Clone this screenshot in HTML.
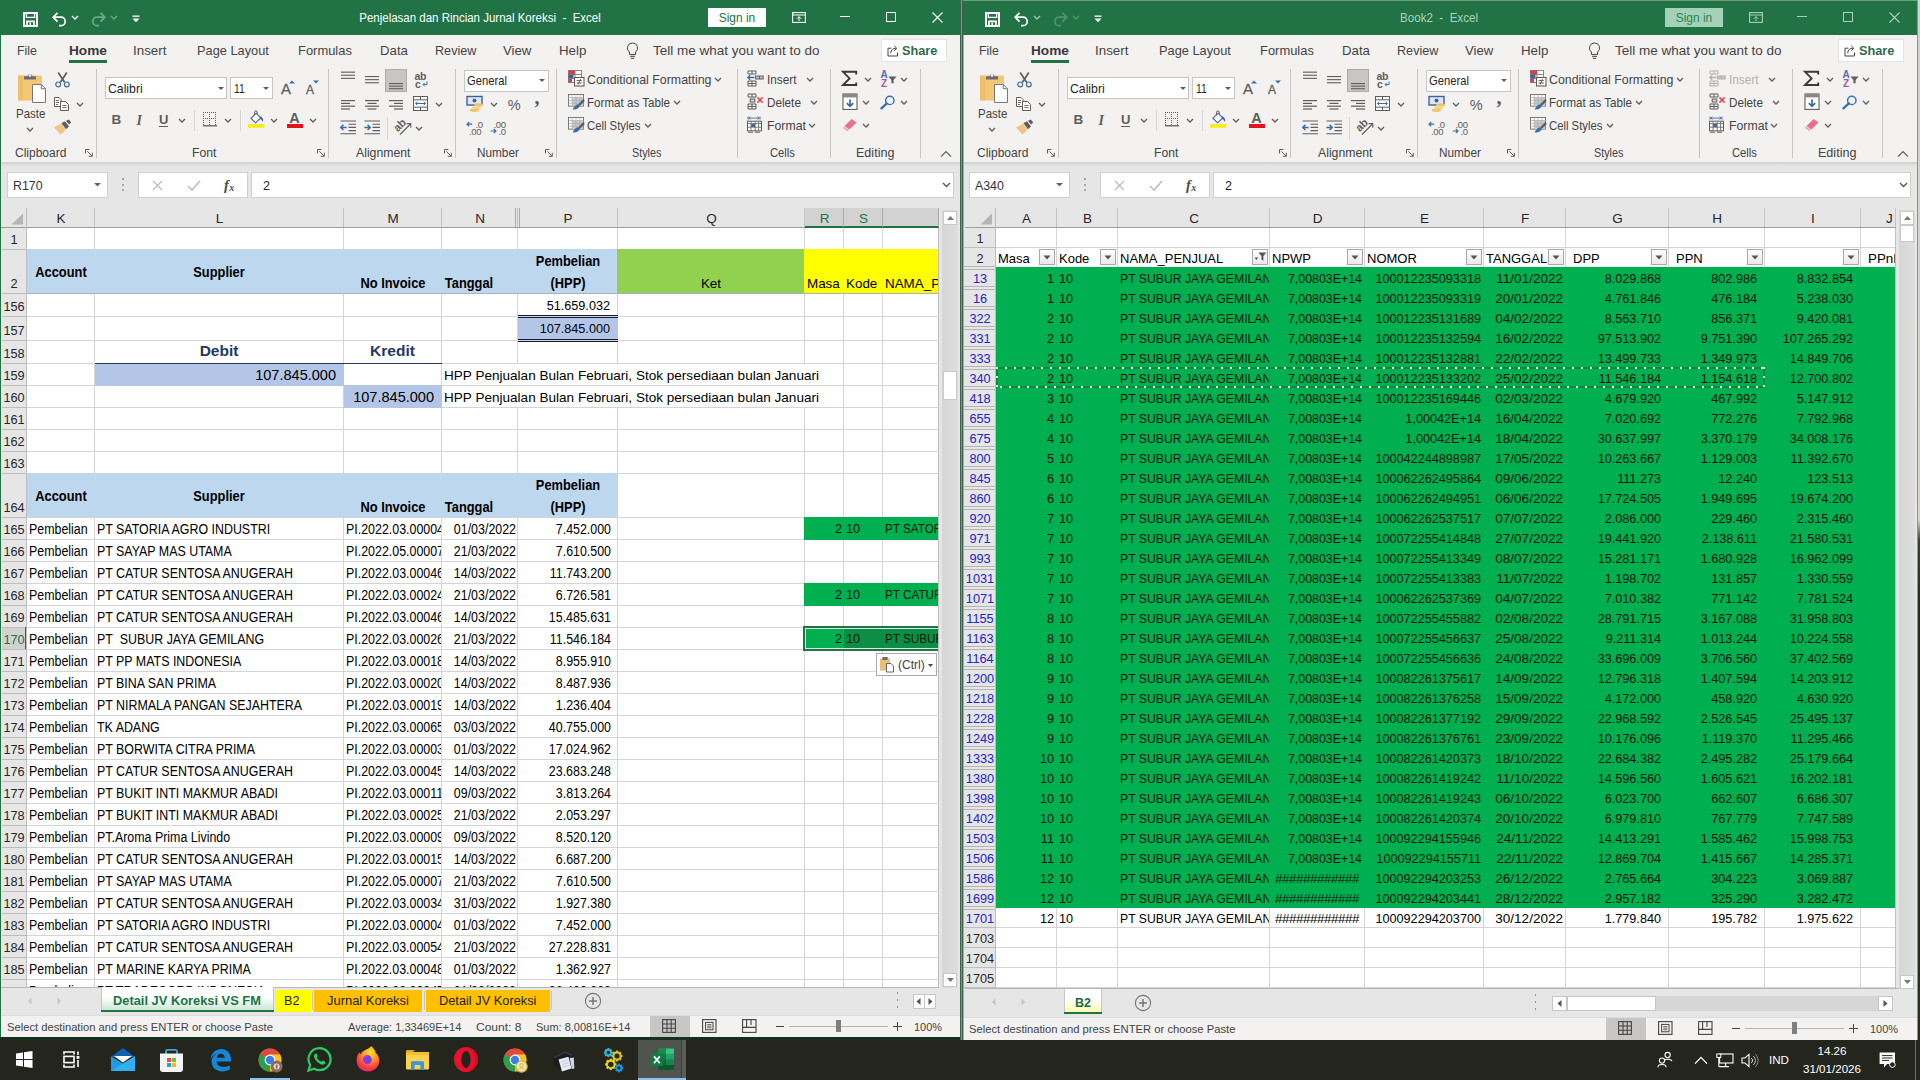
<!DOCTYPE html>
<html><head><meta charset="utf-8"><title>Excel</title><style>html,body{margin:0;padding:0;}
body{width:1920px;height:1080px;overflow:hidden;position:relative;background:#24261e;font-family:"Liberation Sans",sans-serif;}
div,svg{position:absolute;}
svg{overflow:visible;}</style></head><body>
<div style="left:0px;top:0px;width:1920px;height:1080px;background:#24261e;"></div>
<div style="left:0px;top:0px;width:960px;height:35px;background:#217346;"></div>
<svg style="left:23px;top:12px;" width="15" height="15" viewBox="0 0 15 15"><path d="M1 1 H14 V14 H1 Z" fill="none" stroke="#ffffff" stroke-width="2"/><rect x="3.4" y="1" width="8.2" height="4.4" fill="none" stroke="#ffffff" stroke-width="1.3"/><path d="M4 14 V9.3 H11 V14" fill="none" stroke="#ffffff" stroke-width="1.7"/><rect x="6.4" y="10.6" width="1.6" height="3" fill="#ffffff"/></svg>
<svg style="left:51px;top:11px;" width="17" height="16" viewBox="0 0 17 16"><path d="M6.5 1.8 L2.2 6.2 L6.5 10.6 M2.6 6.2 H10 A4.2 4.2 0 0 1 10 14.6 H8" fill="none" stroke="#ffffff" stroke-width="1.7"/></svg>
<svg style="left:71px;top:15px;" width="8" height="5" viewBox="0 0 8 5"><path d="M1 1 L4.0 4 L7 1" fill="none" stroke="#ffffff" stroke-width="1.3"/></svg>
<svg style="left:90px;top:11px;" width="17" height="16" viewBox="0 0 17 16"><path d="M10.5 1.8 L14.8 6.2 L10.5 10.6 M14.4 6.2 H7 A4.2 4.2 0 0 0 7 14.6 H9" fill="none" stroke="#6fa98a" stroke-width="1.7"/></svg>
<svg style="left:110px;top:15px;" width="8" height="5" viewBox="0 0 8 5"><path d="M1 1 L4.0 4 L7 1" fill="none" stroke="#6fa98a" stroke-width="1.3"/></svg>
<svg style="left:131px;top:15px;" width="10" height="8" viewBox="0 0 10 8"><rect x="1.5" y="0.5" width="7" height="1.3" fill="#ffffff"/><path d="M1.5 3.6 H8.5 L5 7.2 Z" fill="#ffffff"/></svg>
<div style="top:8.5px;height:19px;line-height:19px;font-size:12.6px;color:#ffffff;white-space:nowrap;left:279.5px;width:400px;text-align:center;transform:scaleX(0.9127);transform-origin:50% 50%;">Penjelasan dan Rincian Jurnal Koreksi&nbsp; -&nbsp; Excel</div>
<div style="left:708px;top:8px;width:58px;height:19px;background:#ffffff;"></div>
<div style="top:8.5px;height:19px;line-height:19px;font-size:12.6px;color:#217346;white-space:nowrap;left:707.5px;width:58px;text-align:center;transform:scaleX(0.9477);transform-origin:50% 50%;">Sign in</div>
<svg style="left:792px;top:12px;" width="14" height="11" viewBox="0 0 14 11"><rect x="0.6" y="0.6" width="12.8" height="9.8" fill="none" stroke="#ffffff" stroke-width="1.1"/><path d="M0.6 3 H13.4" stroke="#ffffff" stroke-width="1"/><path d="M7 9 V4.8 M4.8 6.8 L7 4.6 L9.2 6.8" fill="none" stroke="#ffffff" stroke-width="1"/></svg>
<div style="left:840px;top:16px;width:10px;height:1px;background:#ffffff;"></div>
<div style="left:886px;top:12px;width:10px;height:10px;border:1px solid #ffffff;box-sizing:border-box;"></div>
<svg style="left:932px;top:12px;" width="11" height="11" viewBox="0 0 11 11"><path d="M0.5 0.5 L10.5 10.5 M10.5 0.5 L0.5 10.5" stroke="#ffffff" stroke-width="1.1"/></svg>
<div style="left:0px;top:35px;width:960px;height:30px;background:#f3f2f1;"></div>
<div style="top:40.8px;height:20px;line-height:20px;font-size:13.3px;color:#444444;white-space:nowrap;left:17.3px;transform:scaleX(0.9283);transform-origin:0 50%;">File</div>
<div style="top:40.8px;height:20px;line-height:20px;font-size:13.3px;color:#3a3a3a;white-space:nowrap;font-weight:bold;left:68.8px;transform:scaleX(1.0256);transform-origin:0 50%;">Home</div>
<div style="left:69px;top:60px;width:38px;height:3px;background:#217346;"></div>
<div style="top:40.8px;height:20px;line-height:20px;font-size:13.3px;color:#444444;white-space:nowrap;left:133.3px;transform:scaleX(1.004);transform-origin:0 50%;">Insert</div>
<div style="top:40.8px;height:20px;line-height:20px;font-size:13.3px;color:#444444;white-space:nowrap;left:196.8px;transform:scaleX(0.9629);transform-origin:0 50%;">Page Layout</div>
<div style="top:40.8px;height:20px;line-height:20px;font-size:13.3px;color:#444444;white-space:nowrap;left:297.8px;transform:scaleX(0.9725);transform-origin:0 50%;">Formulas</div>
<div style="top:40.8px;height:20px;line-height:20px;font-size:13.3px;color:#444444;white-space:nowrap;left:379.8px;transform:scaleX(0.9931);transform-origin:0 50%;">Data</div>
<div style="top:40.8px;height:20px;line-height:20px;font-size:13.3px;color:#444444;white-space:nowrap;left:435.3px;transform:scaleX(0.9493);transform-origin:0 50%;">Review</div>
<div style="top:40.8px;height:20px;line-height:20px;font-size:13.3px;color:#444444;white-space:nowrap;left:503.3px;transform:scaleX(0.9932);transform-origin:0 50%;">View</div>
<div style="top:40.8px;height:20px;line-height:20px;font-size:13.3px;color:#444444;white-space:nowrap;left:558.8px;transform:scaleX(1.0015);transform-origin:0 50%;">Help</div>
<svg style="left:626px;top:42px;" width="13" height="18" viewBox="0 0 13 18"><path d="M6.5 1 A5 5 0 0 1 9.6 10 V12.4 H3.4 V10 A5 5 0 0 1 6.5 1 Z" fill="none" stroke="#444" stroke-width="1"/><path d="M4 14.3 H9 M4.8 16.3 H8.2" stroke="#444" stroke-width="1"/></svg>
<div style="top:40.8px;height:20px;line-height:20px;font-size:13.3px;color:#444444;white-space:nowrap;left:653.3px;transform:scaleX(1.0141);transform-origin:0 50%;">Tell me what you want to do</div>
<div style="left:881px;top:39px;width:66px;height:23px;background:#ffffff;border:1px solid #e6e4e2;box-sizing:border-box;"></div>
<svg style="left:887px;top:44px;" width="13" height="13" viewBox="0 0 13 13"><path d="M4.5 4.2 H1 V12 H10.5 V8.5" fill="none" stroke="#444" stroke-width="1"/><path d="M3.6 9.2 C4 5.8 6.2 4.2 9 4.2 M7.2 1.8 L9.8 4.3 L7.2 6.8" fill="none" stroke="#444" stroke-width="1"/></svg>
<div style="top:40.8px;height:20px;line-height:20px;font-size:13.3px;color:#2f6b4c;white-space:nowrap;font-weight:bold;left:902.3px;transform:scaleX(0.9576);transform-origin:0 50%;">Share</div>
<div style="left:0px;top:65px;width:960px;height:97px;background:#f3f2f1;"></div>
<svg style="left:16px;top:72px;" width="32" height="32" viewBox="0 0 32 32"><rect x="2" y="3.5" width="24" height="25" rx="1" fill="#f2c877"/><rect x="2" y="3.5" width="5" height="25" fill="#eab95c" opacity=".55"/><path d="M8 7.6 V4.3 H11.4 A2.7 2.7 0 0 1 16.6 4.3 H20 V7.6 Z" fill="#6d6b73"/><circle cx="14" cy="3.6" r="1.3" fill="#f3f2f1"/><path d="M16.5 12.5 H25.3 L29.5 16.7 V30.5 H16.5 Z" fill="#ffffff" stroke="#7a7876" stroke-width="1"/><path d="M25.3 12.5 V16.7 H29.5" fill="none" stroke="#7a7876" stroke-width="1"/></svg>
<div style="top:104.5px;height:19px;line-height:19px;font-size:12.6px;color:#444444;white-space:nowrap;left:15.8px;transform:scaleX(0.9125);transform-origin:0 50%;">Paste</div>
<svg style="left:26px;top:127px;" width="8" height="5" viewBox="0 0 8 5"><path d="M1 1 L4.0 4 L7 1" fill="none" stroke="#605e5c" stroke-width="1.3"/></svg>
<svg style="left:54px;top:71px;" width="17" height="18" viewBox="0 0 17 18"><path d="M4.2 1.5 L10.6 11.2 M12.8 1.5 L6.4 11.2" stroke="#605e5c" stroke-width="1.7" fill="none"/><circle cx="4.2" cy="13.4" r="2.4" fill="none" stroke="#3a6ea5" stroke-width="1.2"/><circle cx="12.8" cy="13.4" r="2.4" fill="none" stroke="#3a6ea5" stroke-width="1.2"/></svg>
<svg style="left:53px;top:96px;" width="18" height="16" viewBox="0 0 18 16"><path d="M1.5 1.5 H6 L8 3.5 V10.5 H1.5 Z" fill="#fff" stroke="#605e5c" stroke-width="1"/><path d="M3 4.5 H6 M3 6.5 H6 M3 8.5 H5" stroke="#605e5c" stroke-width=".9"/><path d="M7.5 5.5 H12.5 L15.5 8.5 V14.5 H7.5 Z" fill="#fff" stroke="#605e5c" stroke-width="1"/><path d="M9.3 9.5 H13.6 M9.3 11.6 H13.6" stroke="#605e5c" stroke-width=".9"/></svg>
<svg style="left:76px;top:102px;" width="8" height="5" viewBox="0 0 8 5"><path d="M1 1 L4.0 4 L7 1" fill="none" stroke="#605e5c" stroke-width="1.3"/></svg>
<svg style="left:53px;top:119px;" width="20" height="18" viewBox="0 0 20 18"><path d="M1 8.4 L8 4.8 L12.6 10.8 L7.6 15.6 C5.5 13 3.6 10.6 1 8.4 Z" fill="#efc581"/><path d="M8.4 4.2 L12 2.3 L16 7.6 L13 10.2 Z" fill="#605e5c"/><path d="M13 1.8 L15.8 0.4 L18.2 3.6 L16 5.6 Z" fill="#605e5c"/></svg>
<div style="top:144.0px;height:19px;line-height:19px;font-size:12.3px;color:#444444;white-space:nowrap;left:14.8px;transform:scaleX(0.9764);transform-origin:0 50%;">Clipboard</div>
<svg style="left:85px;top:149px;" width="8" height="8" viewBox="0 0 8 8"><path d="M0.5 4.4 V0.5 H4.4" fill="none" stroke="#605e5c" stroke-width="1"/><path d="M2.4 2.4 L7.2 7.2 M7.3 3.8 V7.3 H3.8" fill="none" stroke="#605e5c" stroke-width="1"/></svg>
<div style="left:96px;top:69px;width:1px;height:89px;background:#c8c6c4;"></div>
<div style="left:105px;top:77px;width:122px;height:22px;background:#ffffff;border:1px solid #c8c6c4;box-sizing:border-box;"></div>
<div style="top:79.5px;height:19px;line-height:19px;font-size:12.6px;color:#262626;white-space:nowrap;left:107.8px;transform:scaleX(0.9719);transform-origin:0 50%;">Calibri</div>
<svg style="left:218px;top:87px;" width="6" height="3" viewBox="0 0 6 3"><path d="M0 0 H6 L3.0 3 Z" fill="#605e5c"/></svg>
<div style="left:230px;top:77px;width:43px;height:22px;background:#ffffff;border:1px solid #c8c6c4;box-sizing:border-box;"></div>
<div style="top:79.5px;height:19px;line-height:19px;font-size:12.6px;color:#262626;white-space:nowrap;left:233.8px;transform:scaleX(0.8182);transform-origin:0 50%;">11</div>
<svg style="left:263px;top:87px;" width="6" height="3" viewBox="0 0 6 3"><path d="M0 0 H6 L3.0 3 Z" fill="#605e5c"/></svg>
<div style="top:77.0px;height:23px;line-height:23px;font-size:15px;color:#605e5c;white-space:nowrap;left:281px;-webkit-text-stroke:.3px #605e5c;">A</div>
<svg style="left:289px;top:80px;" width="6" height="4" viewBox="0 0 6 4"><path d="M0 3.5 L3 0.5 L6 3.5 Z" fill="#3a6ea5"/></svg>
<div style="top:81.0px;height:18px;line-height:18px;font-size:12px;color:#605e5c;white-space:nowrap;left:306px;-webkit-text-stroke:.3px #605e5c;">A</div>
<svg style="left:313px;top:80px;" width="6" height="4" viewBox="0 0 6 4"><path d="M0 0.5 L3 3.5 L6 0.5 Z" fill="#3a6ea5"/></svg>
<div style="top:110.0px;height:20px;line-height:20px;font-size:13.5px;color:#605e5c;white-space:nowrap;font-weight:bold;left:111.5px;">B</div>
<div style="top:109.5px;height:21px;line-height:21px;font-size:14px;color:#605e5c;white-space:nowrap;font-weight:bold;left:136.5px;font-family:'Liberation Serif',serif;font-style:italic;">I</div>
<div style="top:109.5px;height:20px;line-height:20px;font-size:13px;color:#605e5c;white-space:nowrap;font-weight:bold;left:159px;">U</div>
<div style="left:159px;top:125.5px;width:9px;height:1px;background:#605e5c;"></div>
<svg style="left:177.5px;top:117.5px;" width="8" height="5" viewBox="0 0 8 5"><path d="M1 1 L4.0 4 L7 1" fill="none" stroke="#605e5c" stroke-width="1.3"/></svg>
<div style="left:194px;top:110px;width:1px;height:21px;background:#d8d6d4;"></div>
<svg style="left:203px;top:112px;" width="14" height="15" viewBox="0 0 14 15"><rect x="0" y="0" width="1" height="1" fill="#605e5c"/><rect x="0" y="6" width="1" height="1" fill="#605e5c"/><rect x="0" y="6" width="1" height="1" fill="#605e5c"/><rect x="0" y="0" width="1" height="1" fill="#605e5c"/><rect x="6" y="0" width="1" height="1" fill="#605e5c"/><rect x="12" y="0" width="1" height="1" fill="#605e5c"/><rect x="2" y="0" width="1" height="1" fill="#605e5c"/><rect x="2" y="6" width="1" height="1" fill="#605e5c"/><rect x="2" y="6" width="1" height="1" fill="#605e5c"/><rect x="0" y="2" width="1" height="1" fill="#605e5c"/><rect x="6" y="2" width="1" height="1" fill="#605e5c"/><rect x="12" y="2" width="1" height="1" fill="#605e5c"/><rect x="4" y="0" width="1" height="1" fill="#605e5c"/><rect x="4" y="6" width="1" height="1" fill="#605e5c"/><rect x="4" y="6" width="1" height="1" fill="#605e5c"/><rect x="0" y="4" width="1" height="1" fill="#605e5c"/><rect x="6" y="4" width="1" height="1" fill="#605e5c"/><rect x="12" y="4" width="1" height="1" fill="#605e5c"/><rect x="6" y="0" width="1" height="1" fill="#605e5c"/><rect x="6" y="6" width="1" height="1" fill="#605e5c"/><rect x="6" y="6" width="1" height="1" fill="#605e5c"/><rect x="0" y="6" width="1" height="1" fill="#605e5c"/><rect x="6" y="6" width="1" height="1" fill="#605e5c"/><rect x="12" y="6" width="1" height="1" fill="#605e5c"/><rect x="8" y="0" width="1" height="1" fill="#605e5c"/><rect x="8" y="6" width="1" height="1" fill="#605e5c"/><rect x="8" y="6" width="1" height="1" fill="#605e5c"/><rect x="0" y="8" width="1" height="1" fill="#605e5c"/><rect x="6" y="8" width="1" height="1" fill="#605e5c"/><rect x="12" y="8" width="1" height="1" fill="#605e5c"/><rect x="10" y="0" width="1" height="1" fill="#605e5c"/><rect x="10" y="6" width="1" height="1" fill="#605e5c"/><rect x="10" y="6" width="1" height="1" fill="#605e5c"/><rect x="0" y="10" width="1" height="1" fill="#605e5c"/><rect x="6" y="10" width="1" height="1" fill="#605e5c"/><rect x="12" y="10" width="1" height="1" fill="#605e5c"/><rect x="12" y="0" width="1" height="1" fill="#605e5c"/><rect x="12" y="6" width="1" height="1" fill="#605e5c"/><rect x="12" y="6" width="1" height="1" fill="#605e5c"/><rect x="0" y="12" width="1" height="1" fill="#605e5c"/><rect x="6" y="12" width="1" height="1" fill="#605e5c"/><rect x="12" y="12" width="1" height="1" fill="#605e5c"/><path d="M0 13.8 H14" stroke="#605e5c" stroke-width="1.3"/></svg>
<svg style="left:223.5px;top:117.5px;" width="8" height="5" viewBox="0 0 8 5"><path d="M1 1 L4.0 4 L7 1" fill="none" stroke="#605e5c" stroke-width="1.3"/></svg>
<div style="left:240px;top:110px;width:1px;height:21px;background:#d8d6d4;"></div>
<svg style="left:247px;top:111px;" width="18" height="18" viewBox="0 0 18 18"><path d="M4 7.2 L9.2 2.2 L13.8 7 L8.6 11.8 Z" fill="#fff" stroke="#4b5aa3" stroke-width="1.1"/><path d="M7.6 4.2 V1.2 A1.3 1.3 0 0 1 10.2 1.2 V3" fill="none" stroke="#605e5c" stroke-width="1"/><path d="M13.2 5.2 C15.8 6.2 16.6 8.2 16 10.6 C15 9.6 14.2 8.2 13 7.4 Z" fill="#4b5aa3"/><rect x="1" y="13" width="16.4" height="3.8" fill="#f5ee1b"/></svg>
<svg style="left:269.5px;top:117.5px;" width="8" height="5" viewBox="0 0 8 5"><path d="M1 1 L4.0 4 L7 1" fill="none" stroke="#605e5c" stroke-width="1.3"/></svg>
<div style="top:107.0px;height:22px;line-height:22px;font-size:14.5px;color:#605e5c;white-space:nowrap;font-weight:bold;left:284.5px;width:20px;text-align:center;">A</div>
<div style="left:287px;top:124px;width:16px;height:4px;background:#e8121d;"></div>
<svg style="left:308.5px;top:117.5px;" width="8" height="5" viewBox="0 0 8 5"><path d="M1 1 L4.0 4 L7 1" fill="none" stroke="#605e5c" stroke-width="1.3"/></svg>
<div style="top:144.0px;height:19px;line-height:19px;font-size:12.3px;color:#444444;white-space:nowrap;left:191.8px;transform:scaleX(0.9915);transform-origin:0 50%;">Font</div>
<svg style="left:317px;top:149px;" width="8" height="8" viewBox="0 0 8 8"><path d="M0.5 4.4 V0.5 H4.4" fill="none" stroke="#605e5c" stroke-width="1"/><path d="M2.4 2.4 L7.2 7.2 M7.3 3.8 V7.3 H3.8" fill="none" stroke="#605e5c" stroke-width="1"/></svg>
<div style="left:328px;top:69px;width:1px;height:89px;background:#c8c6c4;"></div>
<svg style="left:341px;top:71px;" width="18" height="16" viewBox="0 0 18 16"><rect x="0" y="0.6" width="14" height="1.1" fill="#605e5c"/><rect x="0" y="3.7" width="14" height="1.1" fill="#605e5c"/><rect x="0" y="6.8" width="14" height="1.1" fill="#605e5c"/></svg>
<svg style="left:365px;top:71px;" width="18" height="16" viewBox="0 0 18 16"><rect x="0" y="5" width="14" height="1.1" fill="#605e5c"/><rect x="0" y="8.1" width="14" height="1.1" fill="#605e5c"/><rect x="0" y="11.2" width="14" height="1.1" fill="#605e5c"/></svg>
<div style="left:385px;top:69px;width:22px;height:23px;background:#c8c6c4;border:1px solid #aeacaa;box-sizing:border-box;"></div>
<svg style="left:389px;top:71px;" width="18" height="16" viewBox="0 0 18 16"><rect x="0" y="12" width="14" height="1.1" fill="#605e5c"/><rect x="0" y="14.6" width="14" height="1.1" fill="#605e5c"/><rect x="0" y="17.2" width="14" height="1.1" fill="#605e5c"/></svg>
<div style="top:67.5px;height:16px;line-height:16px;font-size:10.5px;color:#605e5c;white-space:nowrap;font-weight:bold;left:414.5px;letter-spacing:-.3px;">ab</div>
<div style="top:75.5px;height:16px;line-height:16px;font-size:10.5px;color:#605e5c;white-space:nowrap;font-weight:bold;left:415px;">c</div>
<svg style="left:422px;top:81px;" width="6" height="6" viewBox="0 0 6 6"><path d="M5 0.5 V3.6 H1.2 M2.8 1.8 L1 3.6 L2.8 5.4" fill="none" stroke="#3a6ea5" stroke-width="1"/></svg>
<svg style="left:341px;top:98.6px;" width="18" height="16" viewBox="0 0 18 16"><rect x="0" y="1" width="14" height="1.2" fill="#605e5c"/><rect x="0" y="3.8" width="9" height="1.2" fill="#605e5c"/><rect x="0" y="6.6" width="14" height="1.2" fill="#605e5c"/><rect x="0" y="9.4" width="9" height="1.2" fill="#605e5c"/></svg>
<svg style="left:365px;top:98.6px;" width="18" height="16" viewBox="0 0 18 16"><rect x="0" y="1" width="14" height="1.2" fill="#605e5c"/><rect x="2.5" y="3.8" width="9" height="1.2" fill="#605e5c"/><rect x="0" y="6.6" width="14" height="1.2" fill="#605e5c"/><rect x="2.5" y="9.4" width="9" height="1.2" fill="#605e5c"/></svg>
<svg style="left:389px;top:98.6px;" width="18" height="16" viewBox="0 0 18 16"><rect x="0" y="1" width="14" height="1.2" fill="#605e5c"/><rect x="5" y="3.8" width="9" height="1.2" fill="#605e5c"/><rect x="0" y="6.6" width="14" height="1.2" fill="#605e5c"/><rect x="5" y="9.4" width="9" height="1.2" fill="#605e5c"/></svg>
<svg style="left:413px;top:96px;" width="16" height="16" viewBox="0 0 16 16"><rect x="0.5" y="0.5" width="14" height="14" fill="#fff" stroke="#605e5c" stroke-width="1"/><path d="M0.5 3.8 H14.5 M0.5 11.2 H14.5 M7.5 0.5 V3.8 M7.5 11.2 V14.5" stroke="#605e5c" stroke-width="1"/><path d="M2.6 7.5 H12.4 M4.4 5.7 L2.6 7.5 L4.4 9.3 M10.6 5.7 L12.4 7.5 L10.6 9.3" fill="none" stroke="#3a6ea5" stroke-width="1"/></svg>
<svg style="left:434.5px;top:102px;" width="8" height="5" viewBox="0 0 8 5"><path d="M1 1 L4.0 4 L7 1" fill="none" stroke="#605e5c" stroke-width="1.3"/></svg>
<svg style="left:340px;top:120px;" width="17" height="15" viewBox="0 0 17 15"><path d="M0.5 1 H16 M8.5 4.2 H16 M8.5 7.4 H16 M8.5 10.6 H16 M0.5 13.8 H16" stroke="#605e5c" stroke-width="1.1"/><path d="M0.8 7.4 H6.6 M3.4 4.8 L0.8 7.4 L3.4 10" fill="none" stroke="#3a6ea5" stroke-width="1.5"/></svg>
<svg style="left:364px;top:120px;" width="17" height="15" viewBox="0 0 17 15"><path d="M0.5 1 H16 M8.5 4.2 H16 M8.5 7.4 H16 M8.5 10.6 H16 M0.5 13.8 H16" stroke="#605e5c" stroke-width="1.1"/><path d="M0.4 7.4 H6.2 M3.6 4.8 L6.2 7.4 L3.6 10" fill="none" stroke="#3a6ea5" stroke-width="1.5"/></svg>
<div style="left:387px;top:117px;width:1px;height:23px;background:#d8d6d4;"></div>
<div style="left:393px;top:119px;font-size:11px;font-weight:bold;color:#605e5c;transform:rotate(-45deg);transform-origin:50% 50%;line-height:12px;">ab</div>
<svg style="left:399px;top:121px;" width="14" height="15" viewBox="0 0 14 15"><path d="M1 13.5 L11.5 3 M7.6 2.6 L11.8 2.6 L11.8 6.8" fill="none" stroke="#605e5c" stroke-width="1.1"/></svg>
<svg style="left:414.5px;top:126px;" width="8" height="5" viewBox="0 0 8 5"><path d="M1 1 L4.0 4 L7 1" fill="none" stroke="#605e5c" stroke-width="1.3"/></svg>
<div style="top:144.0px;height:19px;line-height:19px;font-size:12.3px;color:#444444;white-space:nowrap;left:356.3px;transform:scaleX(0.9947);transform-origin:0 50%;">Alignment</div>
<svg style="left:444px;top:149px;" width="8" height="8" viewBox="0 0 8 8"><path d="M0.5 4.4 V0.5 H4.4" fill="none" stroke="#605e5c" stroke-width="1"/><path d="M2.4 2.4 L7.2 7.2 M7.3 3.8 V7.3 H3.8" fill="none" stroke="#605e5c" stroke-width="1"/></svg>
<div style="left:455px;top:69px;width:1px;height:89px;background:#c8c6c4;"></div>
<div style="left:464px;top:70px;width:85px;height:22px;background:#ffffff;border:1px solid #c8c6c4;box-sizing:border-box;"></div>
<div style="top:72.0px;height:19px;line-height:19px;font-size:12.6px;color:#262626;white-space:nowrap;left:467.3px;transform:scaleX(0.8904);transform-origin:0 50%;">General</div>
<svg style="left:539px;top:79px;" width="6" height="3" viewBox="0 0 6 3"><path d="M0 0 H6 L3.0 3 Z" fill="#605e5c"/></svg>
<svg style="left:466px;top:95px;" width="20" height="18" viewBox="0 0 20 18"><rect x="1" y="1.5" width="15" height="8.5" fill="#dfe9f5" stroke="#41619b" stroke-width="1.4"/><circle cx="8.5" cy="5.6" r="2" fill="#41619b"/><ellipse cx="12.6" cy="10" rx="4.6" ry="1.7" fill="#f0c470"/><ellipse cx="10.6" cy="12.6" rx="4.6" ry="1.7" fill="#f6d48a"/><ellipse cx="8.4" cy="15.2" rx="4.8" ry="1.7" fill="#f0c470"/></svg>
<svg style="left:489.5px;top:102px;" width="8" height="5" viewBox="0 0 8 5"><path d="M1 1 L4.0 4 L7 1" fill="none" stroke="#605e5c" stroke-width="1.3"/></svg>
<div style="top:93.5px;height:22px;line-height:22px;font-size:14.5px;color:#605e5c;white-space:nowrap;left:499.29999999999995px;width:30px;text-align:center;">%</div>
<div style="top:81.5px;height:30px;line-height:30px;font-size:20px;color:#605e5c;white-space:nowrap;font-weight:bold;left:534.5px;font-family:'Liberation Serif',serif;">,</div>
<svg style="left:466px;top:120px;" width="17" height="16" viewBox="0 0 17 16"><path d="M1 4.2 H6.2 M3.2 2 L1 4.2 L3.2 6.4" fill="none" stroke="#3a6ea5" stroke-width="1.2"/></svg>
<div style="top:116.5px;height:15px;line-height:15px;font-size:9.5px;color:#605e5c;white-space:nowrap;left:475.5px;letter-spacing:-.3px;">.0</div>
<div style="top:124.0px;height:15px;line-height:15px;font-size:9.5px;color:#605e5c;white-space:nowrap;left:469px;letter-spacing:-.3px;">.00</div>
<div style="top:116.5px;height:15px;line-height:15px;font-size:9.5px;color:#605e5c;white-space:nowrap;left:493.5px;letter-spacing:-.3px;">.00</div>
<svg style="left:490px;top:127px;" width="8" height="8" viewBox="0 0 8 8"><path d="M0.6 4 H6 M3.8 1.8 L6 4 L3.8 6.2" fill="none" stroke="#3a6ea5" stroke-width="1.2"/></svg>
<div style="top:124.0px;height:15px;line-height:15px;font-size:9.5px;color:#605e5c;white-space:nowrap;left:498.5px;letter-spacing:-.3px;">.0</div>
<div style="top:144.0px;height:19px;line-height:19px;font-size:12.3px;color:#444444;white-space:nowrap;left:476.8px;transform:scaleX(0.9577);transform-origin:0 50%;">Number</div>
<svg style="left:545px;top:149px;" width="8" height="8" viewBox="0 0 8 8"><path d="M0.5 4.4 V0.5 H4.4" fill="none" stroke="#605e5c" stroke-width="1"/><path d="M2.4 2.4 L7.2 7.2 M7.3 3.8 V7.3 H3.8" fill="none" stroke="#605e5c" stroke-width="1"/></svg>
<div style="left:556px;top:69px;width:1px;height:89px;background:#c8c6c4;"></div>
<svg style="left:568px;top:70px;" width="17" height="17" viewBox="0 0 17 17"><rect x="0.5" y="0.5" width="13" height="12" fill="#fff" stroke="#8a8886" stroke-width="1"/><path d="M0.5 4.5 H13.5 M0.5 8.5 H13.5 M7 0.5 V12.5" stroke="#8a8886" stroke-width="1"/><rect x="0.5" y="0.5" width="6.5" height="4" fill="#c8474d"/><rect x="0.5" y="4.8" width="5" height="3.4" fill="#41619b"/><rect x="0.5" y="8.8" width="3.6" height="3.6" fill="#c8474d"/><rect x="6.5" y="7.5" width="9.5" height="8.5" fill="#fff" stroke="#605e5c" stroke-width="1.1"/><path d="M8.6 10.6 H13.8 M8.6 13 H13.8 M12.6 9 L10 14.6" stroke="#605e5c" stroke-width="1"/></svg>
<div style="top:71.0px;height:19px;line-height:19px;font-size:12.6px;color:#444444;white-space:nowrap;left:586.8px;transform:scaleX(0.9818);transform-origin:0 50%;">Conditional Formatting</div>
<svg style="left:714px;top:77px;" width="8" height="5" viewBox="0 0 8 5"><path d="M1 1 L4.0 4 L7 1" fill="none" stroke="#605e5c" stroke-width="1.3"/></svg>
<svg style="left:568px;top:94px;" width="17" height="17" viewBox="0 0 17 17"><rect x="0.5" y="0.5" width="15" height="11.6" fill="#fff" stroke="#797775" stroke-width="1"/><rect x="4.2" y="3.6" width="11" height="8.2" fill="#c9ced6"/><path d="M0.5 3.6 H15.5 M0.5 6.4 H15.5 M0.5 9.2 H15.5 M4.2 0.5 V12 M8 0.5 V12 M11.8 0.5 V12" stroke="#a9a7a5" stroke-width=".7"/><path d="M15.8 4.6 L10 10.6 L11.6 12 L16.6 7.2 Z" fill="#605e5c"/><path d="M10 10.2 C7.8 10.4 6.4 12 4.6 15.4 C8.4 15.8 10.6 14.6 11.8 12 Z" fill="#3a6ea5"/></svg>
<div style="top:93.5px;height:19px;line-height:19px;font-size:12.6px;color:#444444;white-space:nowrap;left:586.8px;transform:scaleX(0.9205);transform-origin:0 50%;">Format as Table</div>
<svg style="left:672.5px;top:99.5px;" width="8" height="5" viewBox="0 0 8 5"><path d="M1 1 L4.0 4 L7 1" fill="none" stroke="#605e5c" stroke-width="1.3"/></svg>
<svg style="left:568px;top:116.5px;" width="17" height="17" viewBox="0 0 17 17"><rect x="0.5" y="0.5" width="15" height="11.6" fill="#fff" stroke="#797775" stroke-width="1"/><rect x="4.2" y="3.6" width="11" height="8.2" fill="#c9ced6"/><path d="M0.5 3.6 H15.5 M0.5 6.4 H15.5 M0.5 9.2 H15.5 M4.2 0.5 V12 M8 0.5 V12 M11.8 0.5 V12" stroke="#a9a7a5" stroke-width=".7"/><path d="M15.8 4.6 L10 10.6 L11.6 12 L16.6 7.2 Z" fill="#605e5c"/><path d="M10 10.2 C7.8 10.4 6.4 12 4.6 15.4 C8.4 15.8 10.6 14.6 11.8 12 Z" fill="#3a6ea5"/></svg>
<div style="top:117.0px;height:19px;line-height:19px;font-size:12.6px;color:#444444;white-space:nowrap;left:586.8px;transform:scaleX(0.8975);transform-origin:0 50%;">Cell Styles</div>
<svg style="left:643.5px;top:123px;" width="8" height="5" viewBox="0 0 8 5"><path d="M1 1 L4.0 4 L7 1" fill="none" stroke="#605e5c" stroke-width="1.3"/></svg>
<div style="top:144.0px;height:19px;line-height:19px;font-size:12.3px;color:#444444;white-space:nowrap;left:631.8px;transform:scaleX(0.8776);transform-origin:0 50%;">Styles</div>
<div style="left:737px;top:69px;width:1px;height:89px;background:#c8c6c4;"></div>
<svg style="left:747px;top:70px;" width="18" height="17" viewBox="0 0 18 17"><path d="M1 1 H9 V4 H1 Z M5 1 V4 M1 11 H9 V16 H1 Z M5 11 V16 M1 13.5 H9" fill="none" stroke="#605e5c" stroke-width="1"/><rect x="8.6" y="6" width="7.6" height="3" fill="#c8c6c4" stroke="#605e5c" stroke-width="1"/><path d="M12.4 6 V9" stroke="#605e5c" stroke-width="1"/><path d="M0.8 7.5 H7.4 M3.2 5.2 L0.8 7.5 L3.2 9.8" fill="none" stroke="#3a6ea5" stroke-width="1.3"/></svg>
<div style="top:71.0px;height:19px;line-height:19px;font-size:12.6px;color:#444444;white-space:nowrap;left:766.8px;transform:scaleX(0.9333);transform-origin:0 50%;">Insert</div>
<svg style="left:806px;top:77px;" width="8" height="5" viewBox="0 0 8 5"><path d="M1 1 L4.0 4 L7 1" fill="none" stroke="#605e5c" stroke-width="1.3"/></svg>
<svg style="left:747px;top:93px;" width="18" height="17" viewBox="0 0 18 17"><path d="M1 1 H9 V4 H1 Z M5 1 V4 M1 11 H9 V16 H1 Z M5 11 V16 M1 13.5 H9" fill="none" stroke="#605e5c" stroke-width="1"/><rect x="3.2" y="6" width="4.6" height="3" fill="#cfe0d6" stroke="#605e5c" stroke-width="1"/><path d="M10.4 4.4 L15.6 9.6 M15.6 4.4 L10.4 9.6" stroke="#e8474f" stroke-width="1.5"/></svg>
<div style="top:93.5px;height:19px;line-height:19px;font-size:12.6px;color:#444444;white-space:nowrap;left:766.8px;transform:scaleX(0.9312);transform-origin:0 50%;">Delete</div>
<svg style="left:809.5px;top:99.5px;" width="8" height="5" viewBox="0 0 8 5"><path d="M1 1 L4.0 4 L7 1" fill="none" stroke="#605e5c" stroke-width="1.3"/></svg>
<svg style="left:747px;top:116px;" width="17" height="17" viewBox="0 0 17 17"><path d="M1 0.6 V3.6 M13 0.6 V3.6 M1.6 2.1 H12.4 M3.4 0.8 L1.8 2.1 L3.4 3.4 M10.6 0.8 L12.2 2.1 L10.6 3.4" fill="none" stroke="#3a6ea5" stroke-width=".9"/><rect x="0.5" y="5.2" width="14" height="9.6" fill="#fff" stroke="#605e5c" stroke-width="1"/><rect x="4.2" y="7.8" width="3.8" height="3.2" fill="#3a6ea5"/><path d="M0.5 7.6 H14.5 M0.5 11.2 H14.5 M4 5.2 V14.8 M8.2 5.2 V14.8 M11.6 5.2 V14.8" stroke="#605e5c" stroke-width=".8"/><path d="M1 16.2 H6 M8 16.2 H13" stroke="#605e5c" stroke-width="1"/></svg>
<div style="top:117.0px;height:19px;line-height:19px;font-size:12.6px;color:#444444;white-space:nowrap;left:766.8px;transform:scaleX(0.9752);transform-origin:0 50%;">Format</div>
<svg style="left:808px;top:123px;" width="8" height="5" viewBox="0 0 8 5"><path d="M1 1 L4.0 4 L7 1" fill="none" stroke="#605e5c" stroke-width="1.3"/></svg>
<div style="top:144.0px;height:19px;line-height:19px;font-size:12.3px;color:#444444;white-space:nowrap;left:770.3px;transform:scaleX(0.9106);transform-origin:0 50%;">Cells</div>
<div style="left:830px;top:69px;width:1px;height:89px;background:#c8c6c4;"></div>
<svg style="left:841px;top:70px;" width="18" height="17" viewBox="0 0 18 17"><path d="M15.2 4.4 V1.8 H2 L8.6 8.4 L2 15 H15.2 V12.4" fill="none" stroke="#3b3a39" stroke-width="1.9" stroke-linejoin="miter"/></svg>
<svg style="left:864px;top:77px;" width="8" height="5" viewBox="0 0 8 5"><path d="M1 1 L4.0 4 L7 1" fill="none" stroke="#605e5c" stroke-width="1.3"/></svg>
<div style="top:67.0px;height:16px;line-height:16px;font-size:10px;color:#4f6fb0;white-space:nowrap;font-weight:bold;left:880.5px;">A</div>
<div style="top:76.0px;height:16px;line-height:16px;font-size:10px;color:#a35aa8;white-space:nowrap;font-weight:bold;left:881px;">Z</div>
<svg style="left:888px;top:76px;" width="9" height="8" viewBox="0 0 9 8"><path d="M0.4 0.6 H8.6 L5.6 4 V7.2 H3.4 V4 Z" fill="#605e5c"/></svg>
<svg style="left:900px;top:77px;" width="8" height="5" viewBox="0 0 8 5"><path d="M1 1 L4.0 4 L7 1" fill="none" stroke="#605e5c" stroke-width="1.3"/></svg>
<svg style="left:842px;top:93px;" width="17" height="18" viewBox="0 0 17 18"><rect x="1" y="1" width="14" height="15.4" fill="#fff" stroke="#605e5c" stroke-width="1.1"/><rect x="1" y="1" width="14" height="3.4" fill="#8a8886"/><path d="M8 6.4 V13.4 M4.8 10.2 L8 13.4 L11.2 10.2" fill="none" stroke="#2f6ca8" stroke-width="1.7"/></svg>
<svg style="left:862px;top:99.5px;" width="8" height="5" viewBox="0 0 8 5"><path d="M1 1 L4.0 4 L7 1" fill="none" stroke="#605e5c" stroke-width="1.3"/></svg>
<svg style="left:880px;top:95px;" width="16" height="15" viewBox="0 0 16 15"><circle cx="9.8" cy="5.4" r="4.2" fill="#eef4fb" stroke="#3a6ea5" stroke-width="1.4"/><path d="M6.6 8.6 L1.4 13.4" stroke="#3a6ea5" stroke-width="2.2" stroke-linecap="round"/></svg>
<svg style="left:900px;top:99.5px;" width="8" height="5" viewBox="0 0 8 5"><path d="M1 1 L4.0 4 L7 1" fill="none" stroke="#605e5c" stroke-width="1.3"/></svg>
<svg style="left:842px;top:118px;" width="16" height="14" viewBox="0 0 16 14"><path d="M9.6 1 L14.6 4.6 L7.4 11.6 L2.6 8 Z" fill="#ea6f8d"/><path d="M2.2 8.6 L6.8 12 L5.4 13.2 L1 10 Z" fill="#f4a6b8"/></svg>
<svg style="left:862px;top:123px;" width="8" height="5" viewBox="0 0 8 5"><path d="M1 1 L4.0 4 L7 1" fill="none" stroke="#605e5c" stroke-width="1.3"/></svg>
<div style="top:144.0px;height:19px;line-height:19px;font-size:12.3px;color:#444444;white-space:nowrap;left:856.3px;transform:scaleX(1.021);transform-origin:0 50%;">Editing</div>
<div style="left:920px;top:69px;width:1px;height:89px;background:#c8c6c4;"></div>
<svg style="left:940px;top:150px;" width="12" height="8" viewBox="0 0 12 8"><path d="M1 6.6 L6 1.6 L11 6.6" fill="none" stroke="#605e5c" stroke-width="1.3"/></svg>
<div style="left:0px;top:162px;width:960px;height:46px;background:#e6e6e6;"></div>
<div style="left:0px;top:162px;width:960px;height:4px;background:linear-gradient(#cfcfcf,#e6e6e6);"></div>
<div style="left:7px;top:172px;width:101px;height:26px;background:#ffffff;border:1px solid #d0d0d0;box-sizing:border-box;"></div>
<div style="top:175.7px;height:20px;line-height:20px;font-size:13px;color:#333;white-space:nowrap;left:12.5px;transform:scaleX(0.95);transform-origin:0 50%;">R170</div>
<svg style="left:94px;top:183px;" width="7" height="3.5" viewBox="0 0 7 3.5"><path d="M0 0 H7 L3.5 3.5 Z" fill="#666"/></svg>
<div style="left:121.5px;top:178px;width:2px;height:2px;background:#a8a8a8;"></div>
<div style="left:121.5px;top:183.5px;width:2px;height:2px;background:#a8a8a8;"></div>
<div style="left:121.5px;top:189px;width:2px;height:2px;background:#a8a8a8;"></div>
<div style="left:138px;top:172px;width:110px;height:26px;background:#ffffff;border:1px solid #d0d0d0;box-sizing:border-box;"></div>
<svg style="left:152px;top:180px;" width="11" height="11" viewBox="0 0 11 11"><path d="M1 1 L10 10 M10 1 L1 10" stroke="#bdbdbd" stroke-width="1.4"/></svg>
<svg style="left:187px;top:180px;" width="14" height="11" viewBox="0 0 14 11"><path d="M1 6 L5 10 L13 1" fill="none" stroke="#bdbdbd" stroke-width="1.6"/></svg>
<div style="top:173.5px;height:22px;line-height:22px;font-size:14.5px;color:#4a4a4a;white-space:nowrap;font-weight:bold;left:224px;font-family:'Liberation Serif',serif;"><i>f</i><span style='font-size:10px;position:relative;top:1.5px;left:0.5px'><i>x</i></span></div>
<div style="left:251px;top:172px;width:703px;height:26px;background:#ffffff;border:1px solid #d0d0d0;box-sizing:border-box;"></div>
<div style="top:175.7px;height:20px;line-height:20px;font-size:13.2px;color:#222;white-space:nowrap;left:262.5px;transform:scaleX(0.95);transform-origin:0 50%;">2</div>
<svg style="left:942px;top:182px;" width="9" height="6" viewBox="0 0 9 6"><path d="M1 1 L4.5 4.5 L8 1" fill="none" stroke="#555" stroke-width="1.4"/></svg>
<div style="left:0;top:208px;width:960px;height:780px;overflow:hidden;background:#e6e6e6;"><div style="left:0;top:-208px;width:960px;height:1080px;">
<div style="left:27px;top:228px;width:912px;height:800px;background:#ffffff;"></div>
<div style="left:27px;top:249px;width:912px;height:1px;background:#d4d4d4;"></div>
<div style="left:27px;top:293px;width:912px;height:1px;background:#d4d4d4;"></div>
<div style="left:27px;top:316px;width:912px;height:1px;background:#d4d4d4;"></div>
<div style="left:27px;top:340px;width:912px;height:1px;background:#d4d4d4;"></div>
<div style="left:27px;top:363px;width:912px;height:1px;background:#d4d4d4;"></div>
<div style="left:27px;top:385px;width:912px;height:1px;background:#d4d4d4;"></div>
<div style="left:27px;top:407px;width:912px;height:1px;background:#d4d4d4;"></div>
<div style="left:27px;top:429px;width:912px;height:1px;background:#d4d4d4;"></div>
<div style="left:27px;top:451px;width:912px;height:1px;background:#d4d4d4;"></div>
<div style="left:27px;top:473px;width:912px;height:1px;background:#d4d4d4;"></div>
<div style="left:27px;top:517px;width:912px;height:1px;background:#d4d4d4;"></div>
<div style="left:27px;top:539px;width:912px;height:1px;background:#d4d4d4;"></div>
<div style="left:27px;top:561px;width:912px;height:1px;background:#d4d4d4;"></div>
<div style="left:27px;top:583px;width:912px;height:1px;background:#d4d4d4;"></div>
<div style="left:27px;top:605px;width:912px;height:1px;background:#d4d4d4;"></div>
<div style="left:27px;top:627px;width:912px;height:1px;background:#d4d4d4;"></div>
<div style="left:27px;top:649px;width:912px;height:1px;background:#d4d4d4;"></div>
<div style="left:27px;top:671px;width:912px;height:1px;background:#d4d4d4;"></div>
<div style="left:27px;top:693px;width:912px;height:1px;background:#d4d4d4;"></div>
<div style="left:27px;top:715px;width:912px;height:1px;background:#d4d4d4;"></div>
<div style="left:27px;top:737px;width:912px;height:1px;background:#d4d4d4;"></div>
<div style="left:27px;top:759px;width:912px;height:1px;background:#d4d4d4;"></div>
<div style="left:27px;top:781px;width:912px;height:1px;background:#d4d4d4;"></div>
<div style="left:27px;top:803px;width:912px;height:1px;background:#d4d4d4;"></div>
<div style="left:27px;top:825px;width:912px;height:1px;background:#d4d4d4;"></div>
<div style="left:27px;top:847px;width:912px;height:1px;background:#d4d4d4;"></div>
<div style="left:27px;top:869px;width:912px;height:1px;background:#d4d4d4;"></div>
<div style="left:27px;top:891px;width:912px;height:1px;background:#d4d4d4;"></div>
<div style="left:27px;top:913px;width:912px;height:1px;background:#d4d4d4;"></div>
<div style="left:27px;top:935px;width:912px;height:1px;background:#d4d4d4;"></div>
<div style="left:27px;top:957px;width:912px;height:1px;background:#d4d4d4;"></div>
<div style="left:27px;top:979px;width:912px;height:1px;background:#d4d4d4;"></div>
<div style="left:27px;top:1001px;width:912px;height:1px;background:#d4d4d4;"></div>
<div style="left:94px;top:228px;width:1px;height:800px;background:#d4d4d4;"></div>
<div style="left:343px;top:228px;width:1px;height:800px;background:#d4d4d4;"></div>
<div style="left:441px;top:228px;width:1px;height:800px;background:#d4d4d4;"></div>
<div style="left:517px;top:228px;width:1px;height:800px;background:#d4d4d4;"></div>
<div style="left:617px;top:228px;width:1px;height:800px;background:#d4d4d4;"></div>
<div style="left:804px;top:228px;width:1px;height:800px;background:#d4d4d4;"></div>
<div style="left:843px;top:228px;width:1px;height:800px;background:#d4d4d4;"></div>
<div style="left:882px;top:228px;width:1px;height:800px;background:#d4d4d4;"></div>
<div style="left:938px;top:228px;width:1px;height:800px;background:#d4d4d4;"></div>
<div style="left:517px;top:364px;width:1px;height:21px;background:#fff;"></div>
<div style="left:517px;top:386px;width:1px;height:21px;background:#fff;"></div>
<div style="left:617px;top:364px;width:1px;height:21px;background:#fff;"></div>
<div style="left:617px;top:386px;width:1px;height:21px;background:#fff;"></div>
<div style="left:804px;top:364px;width:1px;height:21px;background:#fff;"></div>
<div style="left:804px;top:386px;width:1px;height:21px;background:#fff;"></div>
<div style="left:27px;top:249px;width:591px;height:44px;background:#bdd7ee;"></div>
<div style="left:617px;top:249px;width:187px;height:44px;background:#92d050;"></div>
<div style="left:804px;top:249px;width:135px;height:44px;background:#ffff00;"></div>
<div style="left:27px;top:293px;width:912px;height:1px;background:#a6b4c2;"></div>
<div style="left:27px;top:473px;width:591px;height:44px;background:#bdd7ee;"></div>
<div style="left:95px;top:364px;width:249px;height:22px;background:#b4c6e7;"></div>
<div style="left:95px;top:363px;width:347px;height:1px;background:#1f3864;"></div>
<div style="left:344px;top:385px;width:98px;height:23px;background:#b4c6e7;"></div>
<div style="left:518px;top:318px;width:100px;height:21px;background:#b4c6e7;"></div>
<div style="left:518px;top:315px;width:100px;height:1px;background:#141c33;"></div>
<div style="left:518px;top:317px;width:100px;height:1px;background:#141c33;"></div>
<div style="left:518px;top:339px;width:100px;height:1px;background:#141c33;"></div>
<div style="left:518px;top:341px;width:100px;height:1px;background:#141c33;"></div>
<div style="left:804px;top:517px;width:135px;height:23px;background:#00b050;"></div>
<div style="left:804px;top:583px;width:135px;height:23px;background:#00b050;"></div>
<div style="left:804px;top:627px;width:135px;height:23px;background:#00b050;"></div>
<div style="left:844px;top:628px;width:95px;height:22px;background:#0c8f45;"></div>
<div style="left:803px;top:626px;width:137px;height:25px;border:2px solid #217346;box-sizing:border-box;"></div>
<div style="left:805px;top:628px;width:134px;height:21px;border:1px solid #d7f3e2;border-right:none;box-sizing:border-box;"></div>
<div style="top:259.9px;height:23px;line-height:23px;font-size:15.4px;color:#000;white-space:nowrap;font-weight:bold;left:0.5px;width:120px;text-align:center;transform:scaleX(0.835);transform-origin:50% 50%;">Account</div>
<div style="top:259.9px;height:23px;line-height:23px;font-size:15.4px;color:#000;white-space:nowrap;font-weight:bold;left:159.0px;width:120px;text-align:center;transform:scaleX(0.835);transform-origin:50% 50%;">Supplier</div>
<div style="top:270.9px;height:23px;line-height:23px;font-size:15.4px;color:#000;white-space:nowrap;font-weight:bold;left:322.5px;width:140px;text-align:center;transform:scaleX(0.835);transform-origin:50% 50%;">No Invoice</div>
<div style="top:270.9px;height:23px;line-height:23px;font-size:15.4px;color:#000;white-space:nowrap;font-weight:bold;left:408.5px;width:120px;text-align:center;transform:scaleX(0.835);transform-origin:50% 50%;">Tanggal</div>
<div style="top:248.9px;height:23px;line-height:23px;font-size:15.4px;color:#000;white-space:nowrap;font-weight:bold;left:497.5px;width:140px;text-align:center;transform:scaleX(0.835);transform-origin:50% 50%;">Pembelian</div>
<div style="top:270.9px;height:23px;line-height:23px;font-size:15.4px;color:#000;white-space:nowrap;font-weight:bold;left:507.5px;width:120px;text-align:center;transform:scaleX(0.835);transform-origin:50% 50%;">(HPP)</div>
<div style="top:483.9px;height:23px;line-height:23px;font-size:15.4px;color:#000;white-space:nowrap;font-weight:bold;left:0.5px;width:120px;text-align:center;transform:scaleX(0.835);transform-origin:50% 50%;">Account</div>
<div style="top:483.9px;height:23px;line-height:23px;font-size:15.4px;color:#000;white-space:nowrap;font-weight:bold;left:159.0px;width:120px;text-align:center;transform:scaleX(0.835);transform-origin:50% 50%;">Supplier</div>
<div style="top:494.9px;height:23px;line-height:23px;font-size:15.4px;color:#000;white-space:nowrap;font-weight:bold;left:322.5px;width:140px;text-align:center;transform:scaleX(0.835);transform-origin:50% 50%;">No Invoice</div>
<div style="top:494.9px;height:23px;line-height:23px;font-size:15.4px;color:#000;white-space:nowrap;font-weight:bold;left:408.5px;width:120px;text-align:center;transform:scaleX(0.835);transform-origin:50% 50%;">Tanggal</div>
<div style="top:472.9px;height:23px;line-height:23px;font-size:15.4px;color:#000;white-space:nowrap;font-weight:bold;left:497.5px;width:140px;text-align:center;transform:scaleX(0.835);transform-origin:50% 50%;">Pembelian</div>
<div style="top:494.9px;height:23px;line-height:23px;font-size:15.4px;color:#000;white-space:nowrap;font-weight:bold;left:507.5px;width:120px;text-align:center;transform:scaleX(0.835);transform-origin:50% 50%;">(HPP)</div>
<div style="top:273.5px;height:20px;line-height:20px;font-size:13.4px;color:#000;white-space:nowrap;left:671.0px;width:80px;text-align:center;">Ket</div>
<div style="top:273.5px;height:20px;line-height:20px;font-size:13.4px;color:#000;white-space:nowrap;left:807px;">Masa</div>
<div style="top:273.5px;height:20px;line-height:20px;font-size:13.4px;color:#000;white-space:nowrap;left:846px;">Kode</div>
<div style="left:885px;top:273px;width:54px;height:20px;overflow:hidden;"><div style="left:0;top:0;font-size:13.4px;line-height:21px;color:#000;white-space:nowrap;">NAMA_PENJUAL</div></div>
<div style="top:295.5px;height:20px;line-height:20px;font-size:13.4px;color:#000;white-space:nowrap;left:210px;width:400px;text-align:right;transform:scaleX(0.945);transform-origin:100% 50%;">51.659.032</div>
<div style="top:319.0px;height:20px;line-height:20px;font-size:13.4px;color:#000;white-space:nowrap;left:210px;width:400px;text-align:right;transform:scaleX(0.945);transform-origin:100% 50%;">107.845.000</div>
<div style="top:338.5px;height:23px;line-height:23px;font-size:15.5px;color:#1f3864;white-space:nowrap;font-weight:bold;left:159.0px;width:120px;text-align:center;">Debit</div>
<div style="top:338.5px;height:23px;line-height:23px;font-size:15.5px;color:#1f3864;white-space:nowrap;font-weight:bold;left:332.5px;width:120px;text-align:center;">Kredit</div>
<div style="top:362.5px;height:23px;line-height:23px;font-size:15.2px;color:#000;white-space:nowrap;left:-64px;width:400px;text-align:right;transform:scaleX(0.9566);transform-origin:100% 50%;">107.845.000</div>
<div style="top:384.5px;height:23px;line-height:23px;font-size:15.2px;color:#000;white-space:nowrap;left:34px;width:400px;text-align:right;transform:scaleX(0.9566);transform-origin:100% 50%;">107.845.000</div>
<div style="top:365.5px;height:20px;line-height:20px;font-size:13.4px;color:#000;white-space:nowrap;left:443.5px;transform:scaleX(1.0122);transform-origin:0 50%;">HPP Penjualan Bulan Februari, Stok persediaan bulan Januari</div>
<div style="top:387.5px;height:20px;line-height:20px;font-size:13.4px;color:#000;white-space:nowrap;left:443.5px;transform:scaleX(1.0122);transform-origin:0 50%;">HPP Penjualan Bulan Februari, Stok persediaan bulan Januari</div>
<div style="top:517.5px;height:22px;line-height:22px;font-size:14.67px;color:#000;white-space:nowrap;left:29px;transform:scaleX(0.847);transform-origin:0 50%;">Pembelian</div>
<div style="top:517.5px;height:22px;line-height:22px;font-size:14.67px;color:#000;white-space:nowrap;left:97px;transform:scaleX(0.847);transform-origin:0 50%;">PT SATORIA AGRO INDUSTRI</div>
<div style="left:344px;top:518px;width:97px;height:21px;overflow:hidden;"><div style="left:2px;top:-0.5px;font-size:14.67px;line-height:22px;color:#000;white-space:nowrap;transform:scaleX(0.847);transform-origin:0 50%;">PI.2022.03.00004</div></div>
<div style="top:517.5px;height:22px;line-height:22px;font-size:14.67px;color:#000;white-space:nowrap;left:116px;width:400px;text-align:right;transform:scaleX(0.847);transform-origin:100% 50%;">01/03/2022</div>
<div style="top:517.5px;height:22px;line-height:22px;font-size:14.67px;color:#000;white-space:nowrap;left:211px;width:400px;text-align:right;transform:scaleX(0.847);transform-origin:100% 50%;">7.452.000</div>
<div style="top:539.5px;height:22px;line-height:22px;font-size:14.67px;color:#000;white-space:nowrap;left:29px;transform:scaleX(0.847);transform-origin:0 50%;">Pembelian</div>
<div style="top:539.5px;height:22px;line-height:22px;font-size:14.67px;color:#000;white-space:nowrap;left:97px;transform:scaleX(0.847);transform-origin:0 50%;">PT SAYAP MAS UTAMA</div>
<div style="left:344px;top:540px;width:97px;height:21px;overflow:hidden;"><div style="left:2px;top:-0.5px;font-size:14.67px;line-height:22px;color:#000;white-space:nowrap;transform:scaleX(0.847);transform-origin:0 50%;">PI.2022.05.00007</div></div>
<div style="top:539.5px;height:22px;line-height:22px;font-size:14.67px;color:#000;white-space:nowrap;left:116px;width:400px;text-align:right;transform:scaleX(0.847);transform-origin:100% 50%;">21/03/2022</div>
<div style="top:539.5px;height:22px;line-height:22px;font-size:14.67px;color:#000;white-space:nowrap;left:211px;width:400px;text-align:right;transform:scaleX(0.847);transform-origin:100% 50%;">7.610.500</div>
<div style="top:561.5px;height:22px;line-height:22px;font-size:14.67px;color:#000;white-space:nowrap;left:29px;transform:scaleX(0.847);transform-origin:0 50%;">Pembelian</div>
<div style="top:561.5px;height:22px;line-height:22px;font-size:14.67px;color:#000;white-space:nowrap;left:97px;transform:scaleX(0.847);transform-origin:0 50%;">PT CATUR SENTOSA ANUGERAH</div>
<div style="left:344px;top:562px;width:97px;height:21px;overflow:hidden;"><div style="left:2px;top:-0.5px;font-size:14.67px;line-height:22px;color:#000;white-space:nowrap;transform:scaleX(0.847);transform-origin:0 50%;">PI.2022.03.00046</div></div>
<div style="top:561.5px;height:22px;line-height:22px;font-size:14.67px;color:#000;white-space:nowrap;left:116px;width:400px;text-align:right;transform:scaleX(0.847);transform-origin:100% 50%;">14/03/2022</div>
<div style="top:561.5px;height:22px;line-height:22px;font-size:14.67px;color:#000;white-space:nowrap;left:211px;width:400px;text-align:right;transform:scaleX(0.847);transform-origin:100% 50%;">11.743.200</div>
<div style="top:583.5px;height:22px;line-height:22px;font-size:14.67px;color:#000;white-space:nowrap;left:29px;transform:scaleX(0.847);transform-origin:0 50%;">Pembelian</div>
<div style="top:583.5px;height:22px;line-height:22px;font-size:14.67px;color:#000;white-space:nowrap;left:97px;transform:scaleX(0.847);transform-origin:0 50%;">PT CATUR SENTOSA ANUGERAH</div>
<div style="left:344px;top:584px;width:97px;height:21px;overflow:hidden;"><div style="left:2px;top:-0.5px;font-size:14.67px;line-height:22px;color:#000;white-space:nowrap;transform:scaleX(0.847);transform-origin:0 50%;">PI.2022.03.00024</div></div>
<div style="top:583.5px;height:22px;line-height:22px;font-size:14.67px;color:#000;white-space:nowrap;left:116px;width:400px;text-align:right;transform:scaleX(0.847);transform-origin:100% 50%;">21/03/2022</div>
<div style="top:583.5px;height:22px;line-height:22px;font-size:14.67px;color:#000;white-space:nowrap;left:211px;width:400px;text-align:right;transform:scaleX(0.847);transform-origin:100% 50%;">6.726.581</div>
<div style="top:605.5px;height:22px;line-height:22px;font-size:14.67px;color:#000;white-space:nowrap;left:29px;transform:scaleX(0.847);transform-origin:0 50%;">Pembelian</div>
<div style="top:605.5px;height:22px;line-height:22px;font-size:14.67px;color:#000;white-space:nowrap;left:97px;transform:scaleX(0.847);transform-origin:0 50%;">PT CATUR SENTOSA ANUGERAH</div>
<div style="left:344px;top:606px;width:97px;height:21px;overflow:hidden;"><div style="left:2px;top:-0.5px;font-size:14.67px;line-height:22px;color:#000;white-space:nowrap;transform:scaleX(0.847);transform-origin:0 50%;">PI.2022.03.00046</div></div>
<div style="top:605.5px;height:22px;line-height:22px;font-size:14.67px;color:#000;white-space:nowrap;left:116px;width:400px;text-align:right;transform:scaleX(0.847);transform-origin:100% 50%;">14/03/2022</div>
<div style="top:605.5px;height:22px;line-height:22px;font-size:14.67px;color:#000;white-space:nowrap;left:211px;width:400px;text-align:right;transform:scaleX(0.847);transform-origin:100% 50%;">15.485.631</div>
<div style="top:627.5px;height:22px;line-height:22px;font-size:14.67px;color:#000;white-space:nowrap;left:29px;transform:scaleX(0.847);transform-origin:0 50%;">Pembelian</div>
<div style="top:627.5px;height:22px;line-height:22px;font-size:14.67px;color:#000;white-space:nowrap;left:97px;transform:scaleX(0.847);transform-origin:0 50%;">PT&nbsp; SUBUR JAYA GEMILANG</div>
<div style="left:344px;top:628px;width:97px;height:21px;overflow:hidden;"><div style="left:2px;top:-0.5px;font-size:14.67px;line-height:22px;color:#000;white-space:nowrap;transform:scaleX(0.847);transform-origin:0 50%;">PI.2022.03.00026</div></div>
<div style="top:627.5px;height:22px;line-height:22px;font-size:14.67px;color:#000;white-space:nowrap;left:116px;width:400px;text-align:right;transform:scaleX(0.847);transform-origin:100% 50%;">21/03/2022</div>
<div style="top:627.5px;height:22px;line-height:22px;font-size:14.67px;color:#000;white-space:nowrap;left:211px;width:400px;text-align:right;transform:scaleX(0.847);transform-origin:100% 50%;">11.546.184</div>
<div style="top:649.5px;height:22px;line-height:22px;font-size:14.67px;color:#000;white-space:nowrap;left:29px;transform:scaleX(0.847);transform-origin:0 50%;">Pembelian</div>
<div style="top:649.5px;height:22px;line-height:22px;font-size:14.67px;color:#000;white-space:nowrap;left:97px;transform:scaleX(0.847);transform-origin:0 50%;">PT PP MATS INDONESIA</div>
<div style="left:344px;top:650px;width:97px;height:21px;overflow:hidden;"><div style="left:2px;top:-0.5px;font-size:14.67px;line-height:22px;color:#000;white-space:nowrap;transform:scaleX(0.847);transform-origin:0 50%;">PI.2022.03.00018</div></div>
<div style="top:649.5px;height:22px;line-height:22px;font-size:14.67px;color:#000;white-space:nowrap;left:116px;width:400px;text-align:right;transform:scaleX(0.847);transform-origin:100% 50%;">14/03/2022</div>
<div style="top:649.5px;height:22px;line-height:22px;font-size:14.67px;color:#000;white-space:nowrap;left:211px;width:400px;text-align:right;transform:scaleX(0.847);transform-origin:100% 50%;">8.955.910</div>
<div style="top:671.5px;height:22px;line-height:22px;font-size:14.67px;color:#000;white-space:nowrap;left:29px;transform:scaleX(0.847);transform-origin:0 50%;">Pembelian</div>
<div style="top:671.5px;height:22px;line-height:22px;font-size:14.67px;color:#000;white-space:nowrap;left:97px;transform:scaleX(0.847);transform-origin:0 50%;">PT BINA SAN PRIMA</div>
<div style="left:344px;top:672px;width:97px;height:21px;overflow:hidden;"><div style="left:2px;top:-0.5px;font-size:14.67px;line-height:22px;color:#000;white-space:nowrap;transform:scaleX(0.847);transform-origin:0 50%;">PI.2022.03.00020</div></div>
<div style="top:671.5px;height:22px;line-height:22px;font-size:14.67px;color:#000;white-space:nowrap;left:116px;width:400px;text-align:right;transform:scaleX(0.847);transform-origin:100% 50%;">14/03/2022</div>
<div style="top:671.5px;height:22px;line-height:22px;font-size:14.67px;color:#000;white-space:nowrap;left:211px;width:400px;text-align:right;transform:scaleX(0.847);transform-origin:100% 50%;">8.487.936</div>
<div style="top:693.5px;height:22px;line-height:22px;font-size:14.67px;color:#000;white-space:nowrap;left:29px;transform:scaleX(0.847);transform-origin:0 50%;">Pembelian</div>
<div style="top:693.5px;height:22px;line-height:22px;font-size:14.67px;color:#000;white-space:nowrap;left:97px;transform:scaleX(0.847);transform-origin:0 50%;">PT NIRMALA PANGAN SEJAHTERA</div>
<div style="left:344px;top:694px;width:97px;height:21px;overflow:hidden;"><div style="left:2px;top:-0.5px;font-size:14.67px;line-height:22px;color:#000;white-space:nowrap;transform:scaleX(0.847);transform-origin:0 50%;">PI.2022.03.00019</div></div>
<div style="top:693.5px;height:22px;line-height:22px;font-size:14.67px;color:#000;white-space:nowrap;left:116px;width:400px;text-align:right;transform:scaleX(0.847);transform-origin:100% 50%;">14/03/2022</div>
<div style="top:693.5px;height:22px;line-height:22px;font-size:14.67px;color:#000;white-space:nowrap;left:211px;width:400px;text-align:right;transform:scaleX(0.847);transform-origin:100% 50%;">1.236.404</div>
<div style="top:715.5px;height:22px;line-height:22px;font-size:14.67px;color:#000;white-space:nowrap;left:29px;transform:scaleX(0.847);transform-origin:0 50%;">Pembelian</div>
<div style="top:715.5px;height:22px;line-height:22px;font-size:14.67px;color:#000;white-space:nowrap;left:97px;transform:scaleX(0.847);transform-origin:0 50%;">TK ADANG</div>
<div style="left:344px;top:716px;width:97px;height:21px;overflow:hidden;"><div style="left:2px;top:-0.5px;font-size:14.67px;line-height:22px;color:#000;white-space:nowrap;transform:scaleX(0.847);transform-origin:0 50%;">PI.2022.03.00065</div></div>
<div style="top:715.5px;height:22px;line-height:22px;font-size:14.67px;color:#000;white-space:nowrap;left:116px;width:400px;text-align:right;transform:scaleX(0.847);transform-origin:100% 50%;">03/03/2022</div>
<div style="top:715.5px;height:22px;line-height:22px;font-size:14.67px;color:#000;white-space:nowrap;left:211px;width:400px;text-align:right;transform:scaleX(0.847);transform-origin:100% 50%;">40.755.000</div>
<div style="top:737.5px;height:22px;line-height:22px;font-size:14.67px;color:#000;white-space:nowrap;left:29px;transform:scaleX(0.847);transform-origin:0 50%;">Pembelian</div>
<div style="top:737.5px;height:22px;line-height:22px;font-size:14.67px;color:#000;white-space:nowrap;left:97px;transform:scaleX(0.847);transform-origin:0 50%;">PT BORWITA CITRA PRIMA</div>
<div style="left:344px;top:738px;width:97px;height:21px;overflow:hidden;"><div style="left:2px;top:-0.5px;font-size:14.67px;line-height:22px;color:#000;white-space:nowrap;transform:scaleX(0.847);transform-origin:0 50%;">PI.2022.03.00003</div></div>
<div style="top:737.5px;height:22px;line-height:22px;font-size:14.67px;color:#000;white-space:nowrap;left:116px;width:400px;text-align:right;transform:scaleX(0.847);transform-origin:100% 50%;">01/03/2022</div>
<div style="top:737.5px;height:22px;line-height:22px;font-size:14.67px;color:#000;white-space:nowrap;left:211px;width:400px;text-align:right;transform:scaleX(0.847);transform-origin:100% 50%;">17.024.962</div>
<div style="top:759.5px;height:22px;line-height:22px;font-size:14.67px;color:#000;white-space:nowrap;left:29px;transform:scaleX(0.847);transform-origin:0 50%;">Pembelian</div>
<div style="top:759.5px;height:22px;line-height:22px;font-size:14.67px;color:#000;white-space:nowrap;left:97px;transform:scaleX(0.847);transform-origin:0 50%;">PT CATUR SENTOSA ANUGERAH</div>
<div style="left:344px;top:760px;width:97px;height:21px;overflow:hidden;"><div style="left:2px;top:-0.5px;font-size:14.67px;line-height:22px;color:#000;white-space:nowrap;transform:scaleX(0.847);transform-origin:0 50%;">PI.2022.03.00045</div></div>
<div style="top:759.5px;height:22px;line-height:22px;font-size:14.67px;color:#000;white-space:nowrap;left:116px;width:400px;text-align:right;transform:scaleX(0.847);transform-origin:100% 50%;">14/03/2022</div>
<div style="top:759.5px;height:22px;line-height:22px;font-size:14.67px;color:#000;white-space:nowrap;left:211px;width:400px;text-align:right;transform:scaleX(0.847);transform-origin:100% 50%;">23.683.248</div>
<div style="top:781.5px;height:22px;line-height:22px;font-size:14.67px;color:#000;white-space:nowrap;left:29px;transform:scaleX(0.847);transform-origin:0 50%;">Pembelian</div>
<div style="top:781.5px;height:22px;line-height:22px;font-size:14.67px;color:#000;white-space:nowrap;left:97px;transform:scaleX(0.847);transform-origin:0 50%;">PT BUKIT INTI MAKMUR ABADI</div>
<div style="left:344px;top:782px;width:97px;height:21px;overflow:hidden;"><div style="left:2px;top:-0.5px;font-size:14.67px;line-height:22px;color:#000;white-space:nowrap;transform:scaleX(0.847);transform-origin:0 50%;">PI.2022.03.00011</div></div>
<div style="top:781.5px;height:22px;line-height:22px;font-size:14.67px;color:#000;white-space:nowrap;left:116px;width:400px;text-align:right;transform:scaleX(0.847);transform-origin:100% 50%;">09/03/2022</div>
<div style="top:781.5px;height:22px;line-height:22px;font-size:14.67px;color:#000;white-space:nowrap;left:211px;width:400px;text-align:right;transform:scaleX(0.847);transform-origin:100% 50%;">3.813.264</div>
<div style="top:803.5px;height:22px;line-height:22px;font-size:14.67px;color:#000;white-space:nowrap;left:29px;transform:scaleX(0.847);transform-origin:0 50%;">Pembelian</div>
<div style="top:803.5px;height:22px;line-height:22px;font-size:14.67px;color:#000;white-space:nowrap;left:97px;transform:scaleX(0.847);transform-origin:0 50%;">PT BUKIT INTI MAKMUR ABADI</div>
<div style="left:344px;top:804px;width:97px;height:21px;overflow:hidden;"><div style="left:2px;top:-0.5px;font-size:14.67px;line-height:22px;color:#000;white-space:nowrap;transform:scaleX(0.847);transform-origin:0 50%;">PI.2022.03.00025</div></div>
<div style="top:803.5px;height:22px;line-height:22px;font-size:14.67px;color:#000;white-space:nowrap;left:116px;width:400px;text-align:right;transform:scaleX(0.847);transform-origin:100% 50%;">21/03/2022</div>
<div style="top:803.5px;height:22px;line-height:22px;font-size:14.67px;color:#000;white-space:nowrap;left:211px;width:400px;text-align:right;transform:scaleX(0.847);transform-origin:100% 50%;">2.053.297</div>
<div style="top:825.5px;height:22px;line-height:22px;font-size:14.67px;color:#000;white-space:nowrap;left:29px;transform:scaleX(0.847);transform-origin:0 50%;">Pembelian</div>
<div style="top:825.5px;height:22px;line-height:22px;font-size:14.67px;color:#000;white-space:nowrap;left:97px;transform:scaleX(0.847);transform-origin:0 50%;">PT.Aroma Prima Livindo</div>
<div style="left:344px;top:826px;width:97px;height:21px;overflow:hidden;"><div style="left:2px;top:-0.5px;font-size:14.67px;line-height:22px;color:#000;white-space:nowrap;transform:scaleX(0.847);transform-origin:0 50%;">PI.2022.03.00009</div></div>
<div style="top:825.5px;height:22px;line-height:22px;font-size:14.67px;color:#000;white-space:nowrap;left:116px;width:400px;text-align:right;transform:scaleX(0.847);transform-origin:100% 50%;">09/03/2022</div>
<div style="top:825.5px;height:22px;line-height:22px;font-size:14.67px;color:#000;white-space:nowrap;left:211px;width:400px;text-align:right;transform:scaleX(0.847);transform-origin:100% 50%;">8.520.120</div>
<div style="top:847.5px;height:22px;line-height:22px;font-size:14.67px;color:#000;white-space:nowrap;left:29px;transform:scaleX(0.847);transform-origin:0 50%;">Pembelian</div>
<div style="top:847.5px;height:22px;line-height:22px;font-size:14.67px;color:#000;white-space:nowrap;left:97px;transform:scaleX(0.847);transform-origin:0 50%;">PT CATUR SENTOSA ANUGERAH</div>
<div style="left:344px;top:848px;width:97px;height:21px;overflow:hidden;"><div style="left:2px;top:-0.5px;font-size:14.67px;line-height:22px;color:#000;white-space:nowrap;transform:scaleX(0.847);transform-origin:0 50%;">PI.2022.03.00015</div></div>
<div style="top:847.5px;height:22px;line-height:22px;font-size:14.67px;color:#000;white-space:nowrap;left:116px;width:400px;text-align:right;transform:scaleX(0.847);transform-origin:100% 50%;">14/03/2022</div>
<div style="top:847.5px;height:22px;line-height:22px;font-size:14.67px;color:#000;white-space:nowrap;left:211px;width:400px;text-align:right;transform:scaleX(0.847);transform-origin:100% 50%;">6.687.200</div>
<div style="top:869.5px;height:22px;line-height:22px;font-size:14.67px;color:#000;white-space:nowrap;left:29px;transform:scaleX(0.847);transform-origin:0 50%;">Pembelian</div>
<div style="top:869.5px;height:22px;line-height:22px;font-size:14.67px;color:#000;white-space:nowrap;left:97px;transform:scaleX(0.847);transform-origin:0 50%;">PT SAYAP MAS UTAMA</div>
<div style="left:344px;top:870px;width:97px;height:21px;overflow:hidden;"><div style="left:2px;top:-0.5px;font-size:14.67px;line-height:22px;color:#000;white-space:nowrap;transform:scaleX(0.847);transform-origin:0 50%;">PI.2022.05.00007</div></div>
<div style="top:869.5px;height:22px;line-height:22px;font-size:14.67px;color:#000;white-space:nowrap;left:116px;width:400px;text-align:right;transform:scaleX(0.847);transform-origin:100% 50%;">21/03/2022</div>
<div style="top:869.5px;height:22px;line-height:22px;font-size:14.67px;color:#000;white-space:nowrap;left:211px;width:400px;text-align:right;transform:scaleX(0.847);transform-origin:100% 50%;">7.610.500</div>
<div style="top:891.5px;height:22px;line-height:22px;font-size:14.67px;color:#000;white-space:nowrap;left:29px;transform:scaleX(0.847);transform-origin:0 50%;">Pembelian</div>
<div style="top:891.5px;height:22px;line-height:22px;font-size:14.67px;color:#000;white-space:nowrap;left:97px;transform:scaleX(0.847);transform-origin:0 50%;">PT CATUR SENTOSA ANUGERAH</div>
<div style="left:344px;top:892px;width:97px;height:21px;overflow:hidden;"><div style="left:2px;top:-0.5px;font-size:14.67px;line-height:22px;color:#000;white-space:nowrap;transform:scaleX(0.847);transform-origin:0 50%;">PI.2022.03.00034</div></div>
<div style="top:891.5px;height:22px;line-height:22px;font-size:14.67px;color:#000;white-space:nowrap;left:116px;width:400px;text-align:right;transform:scaleX(0.847);transform-origin:100% 50%;">31/03/2022</div>
<div style="top:891.5px;height:22px;line-height:22px;font-size:14.67px;color:#000;white-space:nowrap;left:211px;width:400px;text-align:right;transform:scaleX(0.847);transform-origin:100% 50%;">1.927.380</div>
<div style="top:913.5px;height:22px;line-height:22px;font-size:14.67px;color:#000;white-space:nowrap;left:29px;transform:scaleX(0.847);transform-origin:0 50%;">Pembelian</div>
<div style="top:913.5px;height:22px;line-height:22px;font-size:14.67px;color:#000;white-space:nowrap;left:97px;transform:scaleX(0.847);transform-origin:0 50%;">PT SATORIA AGRO INDUSTRI</div>
<div style="left:344px;top:914px;width:97px;height:21px;overflow:hidden;"><div style="left:2px;top:-0.5px;font-size:14.67px;line-height:22px;color:#000;white-space:nowrap;transform:scaleX(0.847);transform-origin:0 50%;">PI.2022.03.00004</div></div>
<div style="top:913.5px;height:22px;line-height:22px;font-size:14.67px;color:#000;white-space:nowrap;left:116px;width:400px;text-align:right;transform:scaleX(0.847);transform-origin:100% 50%;">01/03/2022</div>
<div style="top:913.5px;height:22px;line-height:22px;font-size:14.67px;color:#000;white-space:nowrap;left:211px;width:400px;text-align:right;transform:scaleX(0.847);transform-origin:100% 50%;">7.452.000</div>
<div style="top:935.5px;height:22px;line-height:22px;font-size:14.67px;color:#000;white-space:nowrap;left:29px;transform:scaleX(0.847);transform-origin:0 50%;">Pembelian</div>
<div style="top:935.5px;height:22px;line-height:22px;font-size:14.67px;color:#000;white-space:nowrap;left:97px;transform:scaleX(0.847);transform-origin:0 50%;">PT CATUR SENTOSA ANUGERAH</div>
<div style="left:344px;top:936px;width:97px;height:21px;overflow:hidden;"><div style="left:2px;top:-0.5px;font-size:14.67px;line-height:22px;color:#000;white-space:nowrap;transform:scaleX(0.847);transform-origin:0 50%;">PI.2022.03.00054</div></div>
<div style="top:935.5px;height:22px;line-height:22px;font-size:14.67px;color:#000;white-space:nowrap;left:116px;width:400px;text-align:right;transform:scaleX(0.847);transform-origin:100% 50%;">21/03/2022</div>
<div style="top:935.5px;height:22px;line-height:22px;font-size:14.67px;color:#000;white-space:nowrap;left:211px;width:400px;text-align:right;transform:scaleX(0.847);transform-origin:100% 50%;">27.228.831</div>
<div style="top:957.5px;height:22px;line-height:22px;font-size:14.67px;color:#000;white-space:nowrap;left:29px;transform:scaleX(0.847);transform-origin:0 50%;">Pembelian</div>
<div style="top:957.5px;height:22px;line-height:22px;font-size:14.67px;color:#000;white-space:nowrap;left:97px;transform:scaleX(0.847);transform-origin:0 50%;">PT MARINE KARYA PRIMA</div>
<div style="left:344px;top:958px;width:97px;height:21px;overflow:hidden;"><div style="left:2px;top:-0.5px;font-size:14.67px;line-height:22px;color:#000;white-space:nowrap;transform:scaleX(0.847);transform-origin:0 50%;">PI.2022.03.00048</div></div>
<div style="top:957.5px;height:22px;line-height:22px;font-size:14.67px;color:#000;white-space:nowrap;left:116px;width:400px;text-align:right;transform:scaleX(0.847);transform-origin:100% 50%;">01/03/2022</div>
<div style="top:957.5px;height:22px;line-height:22px;font-size:14.67px;color:#000;white-space:nowrap;left:211px;width:400px;text-align:right;transform:scaleX(0.847);transform-origin:100% 50%;">1.362.927</div>
<div style="top:979.5px;height:22px;line-height:22px;font-size:14.67px;color:#000;white-space:nowrap;left:29px;transform:scaleX(0.847);transform-origin:0 50%;">Pembelian</div>
<div style="top:979.5px;height:22px;line-height:22px;font-size:14.67px;color:#000;white-space:nowrap;left:97px;transform:scaleX(0.847);transform-origin:0 50%;">PT TRADECORP INDONESIA</div>
<div style="left:344px;top:980px;width:97px;height:21px;overflow:hidden;"><div style="left:2px;top:-0.5px;font-size:14.67px;line-height:22px;color:#000;white-space:nowrap;transform:scaleX(0.847);transform-origin:0 50%;">PI.2022.03.00047</div></div>
<div style="top:979.5px;height:22px;line-height:22px;font-size:14.67px;color:#000;white-space:nowrap;left:116px;width:400px;text-align:right;transform:scaleX(0.847);transform-origin:100% 50%;">01/03/2022</div>
<div style="top:979.5px;height:22px;line-height:22px;font-size:14.67px;color:#000;white-space:nowrap;left:211px;width:400px;text-align:right;transform:scaleX(0.847);transform-origin:100% 50%;">26.400.000</div>
<div style="top:519.0px;height:20px;line-height:20px;font-size:13.4px;color:#03170a;white-space:nowrap;left:442px;width:400px;text-align:right;transform:scaleX(0.945);transform-origin:100% 50%;">2</div>
<div style="top:519.0px;height:20px;line-height:20px;font-size:13.4px;color:#03170a;white-space:nowrap;left:846px;transform:scaleX(0.945);transform-origin:0 50%;">10</div>
<div style="left:885px;top:518px;width:54px;height:21px;overflow:hidden;"><div style="left:0;top:0;font-size:13.4px;line-height:22px;color:#03170a;white-space:nowrap;transform:scaleX(.875);transform-origin:0 50%;">PT SATORIA AGRO</div></div>
<div style="top:585.0px;height:20px;line-height:20px;font-size:13.4px;color:#03170a;white-space:nowrap;left:442px;width:400px;text-align:right;transform:scaleX(0.945);transform-origin:100% 50%;">2</div>
<div style="top:585.0px;height:20px;line-height:20px;font-size:13.4px;color:#03170a;white-space:nowrap;left:846px;transform:scaleX(0.945);transform-origin:0 50%;">10</div>
<div style="left:885px;top:584px;width:54px;height:21px;overflow:hidden;"><div style="left:0;top:0;font-size:13.4px;line-height:22px;color:#03170a;white-space:nowrap;transform:scaleX(.875);transform-origin:0 50%;">PT CATUR SENTOSA</div></div>
<div style="top:629.0px;height:20px;line-height:20px;font-size:13.4px;color:#03170a;white-space:nowrap;left:442px;width:400px;text-align:right;transform:scaleX(0.945);transform-origin:100% 50%;">2</div>
<div style="top:629.0px;height:20px;line-height:20px;font-size:13.4px;color:#03170a;white-space:nowrap;left:846px;transform:scaleX(0.945);transform-origin:0 50%;">10</div>
<div style="left:885px;top:628px;width:54px;height:21px;overflow:hidden;"><div style="left:0;top:0;font-size:13.4px;line-height:22px;color:#03170a;white-space:nowrap;transform:scaleX(.875);transform-origin:0 50%;">PT SUBUR JAYA</div></div>
<div style="left:0px;top:208px;width:27px;height:800px;background:#e6e6e6;"></div>
<div style="left:2px;top:249px;width:24px;height:1px;background:#bdbdbd;"></div>
<div style="top:229.8px;height:20px;line-height:20px;font-size:13.4px;color:#262626;white-space:nowrap;left:-6.0px;width:40px;text-align:center;transform:scaleX(0.95);transform-origin:50% 50%;">1</div>
<div style="left:2px;top:293px;width:24px;height:1px;background:#bdbdbd;"></div>
<div style="top:273.8px;height:20px;line-height:20px;font-size:13.4px;color:#262626;white-space:nowrap;left:-6.0px;width:40px;text-align:center;transform:scaleX(0.95);transform-origin:50% 50%;">2</div>
<div style="left:2px;top:316px;width:24px;height:1px;background:#bdbdbd;"></div>
<div style="top:296.8px;height:20px;line-height:20px;font-size:13.4px;color:#262626;white-space:nowrap;left:-6.0px;width:40px;text-align:center;transform:scaleX(0.95);transform-origin:50% 50%;">156</div>
<div style="left:2px;top:340px;width:24px;height:1px;background:#bdbdbd;"></div>
<div style="top:320.8px;height:20px;line-height:20px;font-size:13.4px;color:#262626;white-space:nowrap;left:-6.0px;width:40px;text-align:center;transform:scaleX(0.95);transform-origin:50% 50%;">157</div>
<div style="left:2px;top:363px;width:24px;height:1px;background:#bdbdbd;"></div>
<div style="top:343.8px;height:20px;line-height:20px;font-size:13.4px;color:#262626;white-space:nowrap;left:-6.0px;width:40px;text-align:center;transform:scaleX(0.95);transform-origin:50% 50%;">158</div>
<div style="left:2px;top:385px;width:24px;height:1px;background:#bdbdbd;"></div>
<div style="top:365.8px;height:20px;line-height:20px;font-size:13.4px;color:#262626;white-space:nowrap;left:-6.0px;width:40px;text-align:center;transform:scaleX(0.95);transform-origin:50% 50%;">159</div>
<div style="left:2px;top:407px;width:24px;height:1px;background:#bdbdbd;"></div>
<div style="top:387.8px;height:20px;line-height:20px;font-size:13.4px;color:#262626;white-space:nowrap;left:-6.0px;width:40px;text-align:center;transform:scaleX(0.95);transform-origin:50% 50%;">160</div>
<div style="left:2px;top:429px;width:24px;height:1px;background:#bdbdbd;"></div>
<div style="top:409.8px;height:20px;line-height:20px;font-size:13.4px;color:#262626;white-space:nowrap;left:-6.0px;width:40px;text-align:center;transform:scaleX(0.95);transform-origin:50% 50%;">161</div>
<div style="left:2px;top:451px;width:24px;height:1px;background:#bdbdbd;"></div>
<div style="top:431.8px;height:20px;line-height:20px;font-size:13.4px;color:#262626;white-space:nowrap;left:-6.0px;width:40px;text-align:center;transform:scaleX(0.95);transform-origin:50% 50%;">162</div>
<div style="left:2px;top:473px;width:24px;height:1px;background:#bdbdbd;"></div>
<div style="top:453.8px;height:20px;line-height:20px;font-size:13.4px;color:#262626;white-space:nowrap;left:-6.0px;width:40px;text-align:center;transform:scaleX(0.95);transform-origin:50% 50%;">163</div>
<div style="left:2px;top:517px;width:24px;height:1px;background:#bdbdbd;"></div>
<div style="top:497.8px;height:20px;line-height:20px;font-size:13.4px;color:#262626;white-space:nowrap;left:-6.0px;width:40px;text-align:center;transform:scaleX(0.95);transform-origin:50% 50%;">164</div>
<div style="left:2px;top:539px;width:24px;height:1px;background:#bdbdbd;"></div>
<div style="top:519.8px;height:20px;line-height:20px;font-size:13.4px;color:#262626;white-space:nowrap;left:-6.0px;width:40px;text-align:center;transform:scaleX(0.95);transform-origin:50% 50%;">165</div>
<div style="left:2px;top:561px;width:24px;height:1px;background:#bdbdbd;"></div>
<div style="top:541.8px;height:20px;line-height:20px;font-size:13.4px;color:#262626;white-space:nowrap;left:-6.0px;width:40px;text-align:center;transform:scaleX(0.95);transform-origin:50% 50%;">166</div>
<div style="left:2px;top:583px;width:24px;height:1px;background:#bdbdbd;"></div>
<div style="top:563.8px;height:20px;line-height:20px;font-size:13.4px;color:#262626;white-space:nowrap;left:-6.0px;width:40px;text-align:center;transform:scaleX(0.95);transform-origin:50% 50%;">167</div>
<div style="left:2px;top:605px;width:24px;height:1px;background:#bdbdbd;"></div>
<div style="top:585.8px;height:20px;line-height:20px;font-size:13.4px;color:#262626;white-space:nowrap;left:-6.0px;width:40px;text-align:center;transform:scaleX(0.95);transform-origin:50% 50%;">168</div>
<div style="left:2px;top:627px;width:24px;height:1px;background:#bdbdbd;"></div>
<div style="top:607.8px;height:20px;line-height:20px;font-size:13.4px;color:#262626;white-space:nowrap;left:-6.0px;width:40px;text-align:center;transform:scaleX(0.95);transform-origin:50% 50%;">169</div>
<div style="left:2px;top:628px;width:24px;height:21px;background:#d2d2d2;"></div>
<div style="left:25px;top:627px;width:2px;height:23px;background:#217346;"></div>
<div style="left:2px;top:649px;width:24px;height:1px;background:#bdbdbd;"></div>
<div style="top:629.8px;height:20px;line-height:20px;font-size:13.4px;color:#217346;white-space:nowrap;left:-6.0px;width:40px;text-align:center;transform:scaleX(0.95);transform-origin:50% 50%;">170</div>
<div style="left:2px;top:671px;width:24px;height:1px;background:#bdbdbd;"></div>
<div style="top:651.8px;height:20px;line-height:20px;font-size:13.4px;color:#262626;white-space:nowrap;left:-6.0px;width:40px;text-align:center;transform:scaleX(0.95);transform-origin:50% 50%;">171</div>
<div style="left:2px;top:693px;width:24px;height:1px;background:#bdbdbd;"></div>
<div style="top:673.8px;height:20px;line-height:20px;font-size:13.4px;color:#262626;white-space:nowrap;left:-6.0px;width:40px;text-align:center;transform:scaleX(0.95);transform-origin:50% 50%;">172</div>
<div style="left:2px;top:715px;width:24px;height:1px;background:#bdbdbd;"></div>
<div style="top:695.8px;height:20px;line-height:20px;font-size:13.4px;color:#262626;white-space:nowrap;left:-6.0px;width:40px;text-align:center;transform:scaleX(0.95);transform-origin:50% 50%;">173</div>
<div style="left:2px;top:737px;width:24px;height:1px;background:#bdbdbd;"></div>
<div style="top:717.8px;height:20px;line-height:20px;font-size:13.4px;color:#262626;white-space:nowrap;left:-6.0px;width:40px;text-align:center;transform:scaleX(0.95);transform-origin:50% 50%;">174</div>
<div style="left:2px;top:759px;width:24px;height:1px;background:#bdbdbd;"></div>
<div style="top:739.8px;height:20px;line-height:20px;font-size:13.4px;color:#262626;white-space:nowrap;left:-6.0px;width:40px;text-align:center;transform:scaleX(0.95);transform-origin:50% 50%;">175</div>
<div style="left:2px;top:781px;width:24px;height:1px;background:#bdbdbd;"></div>
<div style="top:761.8px;height:20px;line-height:20px;font-size:13.4px;color:#262626;white-space:nowrap;left:-6.0px;width:40px;text-align:center;transform:scaleX(0.95);transform-origin:50% 50%;">176</div>
<div style="left:2px;top:803px;width:24px;height:1px;background:#bdbdbd;"></div>
<div style="top:783.8px;height:20px;line-height:20px;font-size:13.4px;color:#262626;white-space:nowrap;left:-6.0px;width:40px;text-align:center;transform:scaleX(0.95);transform-origin:50% 50%;">177</div>
<div style="left:2px;top:825px;width:24px;height:1px;background:#bdbdbd;"></div>
<div style="top:805.8px;height:20px;line-height:20px;font-size:13.4px;color:#262626;white-space:nowrap;left:-6.0px;width:40px;text-align:center;transform:scaleX(0.95);transform-origin:50% 50%;">178</div>
<div style="left:2px;top:847px;width:24px;height:1px;background:#bdbdbd;"></div>
<div style="top:827.8px;height:20px;line-height:20px;font-size:13.4px;color:#262626;white-space:nowrap;left:-6.0px;width:40px;text-align:center;transform:scaleX(0.95);transform-origin:50% 50%;">179</div>
<div style="left:2px;top:869px;width:24px;height:1px;background:#bdbdbd;"></div>
<div style="top:849.8px;height:20px;line-height:20px;font-size:13.4px;color:#262626;white-space:nowrap;left:-6.0px;width:40px;text-align:center;transform:scaleX(0.95);transform-origin:50% 50%;">180</div>
<div style="left:2px;top:891px;width:24px;height:1px;background:#bdbdbd;"></div>
<div style="top:871.8px;height:20px;line-height:20px;font-size:13.4px;color:#262626;white-space:nowrap;left:-6.0px;width:40px;text-align:center;transform:scaleX(0.95);transform-origin:50% 50%;">181</div>
<div style="left:2px;top:913px;width:24px;height:1px;background:#bdbdbd;"></div>
<div style="top:893.8px;height:20px;line-height:20px;font-size:13.4px;color:#262626;white-space:nowrap;left:-6.0px;width:40px;text-align:center;transform:scaleX(0.95);transform-origin:50% 50%;">182</div>
<div style="left:2px;top:935px;width:24px;height:1px;background:#bdbdbd;"></div>
<div style="top:915.8px;height:20px;line-height:20px;font-size:13.4px;color:#262626;white-space:nowrap;left:-6.0px;width:40px;text-align:center;transform:scaleX(0.95);transform-origin:50% 50%;">183</div>
<div style="left:2px;top:957px;width:24px;height:1px;background:#bdbdbd;"></div>
<div style="top:937.8px;height:20px;line-height:20px;font-size:13.4px;color:#262626;white-space:nowrap;left:-6.0px;width:40px;text-align:center;transform:scaleX(0.95);transform-origin:50% 50%;">184</div>
<div style="left:2px;top:979px;width:24px;height:1px;background:#bdbdbd;"></div>
<div style="top:959.8px;height:20px;line-height:20px;font-size:13.4px;color:#262626;white-space:nowrap;left:-6.0px;width:40px;text-align:center;transform:scaleX(0.95);transform-origin:50% 50%;">185</div>
<div style="left:2px;top:1001px;width:24px;height:1px;background:#bdbdbd;"></div>
<div style="left:0px;top:208px;width:960px;height:20px;background:#e6e6e6;"></div>
<div style="left:0px;top:227px;width:939px;height:1px;background:#9e9e9e;"></div>
<div style="top:208.8px;height:20px;line-height:20px;font-size:13.5px;color:#262626;white-space:nowrap;left:31.0px;width:60px;text-align:center;">K</div>
<div style="left:94px;top:208px;width:1px;height:19px;background:#c4c4c4;"></div>
<div style="top:208.8px;height:20px;line-height:20px;font-size:13.5px;color:#262626;white-space:nowrap;left:189.5px;width:60px;text-align:center;">L</div>
<div style="left:343px;top:208px;width:1px;height:19px;background:#c4c4c4;"></div>
<div style="top:208.8px;height:20px;line-height:20px;font-size:13.5px;color:#262626;white-space:nowrap;left:363.0px;width:60px;text-align:center;">M</div>
<div style="left:441px;top:208px;width:1px;height:19px;background:#c4c4c4;"></div>
<div style="top:208.8px;height:20px;line-height:20px;font-size:13.5px;color:#262626;white-space:nowrap;left:450.0px;width:60px;text-align:center;">N</div>
<div style="left:517px;top:208px;width:1px;height:19px;background:#c4c4c4;"></div>
<div style="top:208.8px;height:20px;line-height:20px;font-size:13.5px;color:#262626;white-space:nowrap;left:538.0px;width:60px;text-align:center;">P</div>
<div style="left:617px;top:208px;width:1px;height:19px;background:#c4c4c4;"></div>
<div style="top:208.8px;height:20px;line-height:20px;font-size:13.5px;color:#262626;white-space:nowrap;left:681.5px;width:60px;text-align:center;">Q</div>
<div style="left:804px;top:208px;width:1px;height:19px;background:#c4c4c4;"></div>
<div style="left:805px;top:208px;width:39px;height:19px;background:#d2d2d2;"></div>
<div style="left:805px;top:226px;width:39px;height:2px;background:#217346;"></div>
<div style="top:208.8px;height:20px;line-height:20px;font-size:13.5px;color:#217346;white-space:nowrap;left:794.5px;width:60px;text-align:center;">R</div>
<div style="left:843px;top:208px;width:1px;height:19px;background:#ababab;"></div>
<div style="left:844px;top:208px;width:39px;height:19px;background:#d2d2d2;"></div>
<div style="left:844px;top:226px;width:39px;height:2px;background:#217346;"></div>
<div style="top:208.8px;height:20px;line-height:20px;font-size:13.5px;color:#217346;white-space:nowrap;left:833.5px;width:60px;text-align:center;">S</div>
<div style="left:882px;top:208px;width:1px;height:19px;background:#ababab;"></div>
<div style="left:883px;top:208px;width:56px;height:19px;background:#d2d2d2;"></div>
<div style="left:883px;top:226px;width:56px;height:2px;background:#217346;"></div>
<div style="left:938px;top:208px;width:1px;height:19px;background:#ababab;"></div>
<div style="left:515px;top:208px;width:1px;height:19px;background:#ababab;"></div>
<div style="left:519px;top:208px;width:1px;height:19px;background:#ababab;"></div>
<div style="left:26px;top:208px;width:1px;height:800px;background:#bdbdbd;"></div>
<svg style="left:11px;top:213px;" width="13" height="12" viewBox="0 0 13 12"><path d="M12 0.5 V11.5 H0.5 Z" fill="#b5b5b5"/></svg>
<div style="left:939px;top:208px;width:21px;height:800px;background:#e6e6e6;"></div>
<div style="left:938px;top:228px;width:1px;height:800px;background:#bfbfbf;"></div>
<div style="left:942px;top:210px;width:16px;height:778px;background:linear-gradient(90deg,#d6d6d6,#dedede);"></div>
<div style="left:943px;top:211px;width:14px;height:14px;background:#fdfdfd;border:1px solid #c9c9c9;box-sizing:border-box;"></div>
<svg style="left:946.5px;top:216px;" width="7" height="4" viewBox="0 0 7 4"><path d="M0 4 L3.5 0 L7 4 Z" fill="#777"/></svg>
<div style="left:943px;top:973px;width:14px;height:14px;background:#fdfdfd;border:1px solid #c9c9c9;box-sizing:border-box;"></div>
<svg style="left:946.5px;top:978px;" width="7" height="4" viewBox="0 0 7 4"><path d="M0 0 L3.5 4 L7 0 Z" fill="#777"/></svg>
<div style="left:943px;top:371px;width:14px;height:29px;background:#ffffff;border:1px solid #c9c9c9;box-sizing:border-box;"></div>
<div style="left:876px;top:653px;width:61px;height:23px;background:#fdfdfd;border:1px solid #ababab;box-sizing:border-box;"></div>
<svg style="left:879px;top:656px;" width="17" height="17" viewBox="0 0 17 17"><rect x="1" y="2.5" width="10" height="12" fill="#e8c07a"/><rect x="3.4" y="1" width="5.2" height="3" fill="#6d6b73"/><path d="M7.5 7.5 H12 L14.5 10 V16 H7.5 Z" fill="#fff" stroke="#666" stroke-width="1"/></svg>
<div style="top:655.5px;height:18px;line-height:18px;font-size:12px;color:#444;white-space:nowrap;left:898px;">(Ctrl)</div>
<svg style="left:927.5px;top:663.5px;" width="5" height="3" viewBox="0 0 5 3"><path d="M0 0 H5 L2.5 3 Z" fill="#444"/></svg>
</div></div>
<div style="left:0px;top:988px;width:960px;height:27px;background:#e6e6e6;"></div>
<div style="left:0px;top:987px;width:939px;height:1px;background:#b7b7b7;"></div>
<svg style="left:27px;top:997px;" width="5" height="8" viewBox="0 0 5 8"><path d="M4.5 0.5 L0.8 4 L4.5 7.5 Z" fill="#c6c6c6"/></svg>
<svg style="left:57px;top:997px;" width="5" height="8" viewBox="0 0 5 8"><path d="M0.5 0.5 L4.2 4 L0.5 7.5 Z" fill="#c6c6c6"/></svg>
<div style="left:101px;top:987px;width:173px;height:25px;background:linear-gradient(#ffffff 0%,#ffffff 40%,#c4e3cf 100%);border-left:1px solid #c6c6c6;border-right:1px solid #c6c6c6;box-sizing:border-box;"></div>
<div style="left:101px;top:1010px;width:173px;height:2px;background:#217346;"></div>
<div style="top:991.3px;height:19px;line-height:19px;font-size:12.8px;color:#217346;white-space:nowrap;font-weight:bold;left:113.3px;transform:scaleX(1.0046);transform-origin:0 50%;">Detail JV Koreksi VS FM</div>
<div style="left:275px;top:990px;width:36px;height:22px;background:#ffff00;"></div>
<div style="top:991.5px;height:19px;line-height:19px;font-size:12.6px;color:#222;white-space:nowrap;left:284.3px;transform:scaleX(0.9996);transform-origin:0 50%;">B2</div>
<div style="left:312px;top:991px;width:1px;height:19px;background:#c6c6c6;"></div>
<div style="left:314px;top:990px;width:108px;height:22px;background:#ffc000;"></div>
<div style="top:991.5px;height:19px;line-height:19px;font-size:12.6px;color:#222;white-space:nowrap;left:326.8px;transform:scaleX(1.0264);transform-origin:0 50%;">Jurnal Koreksi</div>
<div style="left:424px;top:991px;width:1px;height:19px;background:#c6c6c6;"></div>
<div style="left:426px;top:990px;width:124px;height:22px;background:#ffc000;"></div>
<div style="top:991.5px;height:19px;line-height:19px;font-size:12.6px;color:#222;white-space:nowrap;left:438.8px;transform:scaleX(1.0157);transform-origin:0 50%;">Detail JV Koreksi</div>
<div style="left:551px;top:991px;width:1px;height:19px;background:#c6c6c6;"></div>
<svg style="left:584px;top:992px;" width="18" height="18" viewBox="0 0 18 18"><circle cx="9" cy="9" r="7.6" fill="none" stroke="#777" stroke-width="1.1"/><path d="M9 5 V13 M5 9 H13" stroke="#777" stroke-width="1.5"/></svg>
<div style="left:897px;top:992px;width:1px;height:2px;background:#999;"></div>
<div style="left:897px;top:999px;width:1px;height:2px;background:#999;"></div>
<div style="left:897px;top:1006px;width:1px;height:2px;background:#999;"></div>
<div style="left:913px;top:994px;width:23px;height:15px;background:#fdfdfd;border:1px solid #c6c6c6;box-sizing:border-box;"></div>
<div style="left:924px;top:994px;width:1px;height:15px;background:#c6c6c6;"></div>
<svg style="left:916px;top:998px;" width="5" height="7" viewBox="0 0 5 7"><path d="M4.5 0 L0.5 3.5 L4.5 7 Z" fill="#555"/></svg>
<svg style="left:928px;top:998px;" width="5" height="7" viewBox="0 0 5 7"><path d="M0.5 0 L4.5 3.5 L0.5 7 Z" fill="#555"/></svg>
<div style="left:0px;top:1015px;width:960px;height:22px;background:#f3f2f1;"></div>
<div style="left:0px;top:1015px;width:960px;height:1px;background:#dcdcdc;"></div>
<div style="top:1018.8px;height:17px;line-height:17px;font-size:11.2px;color:#444;white-space:nowrap;left:7.3px;transform:scaleX(1.0013);transform-origin:0 50%;">Select destination and press ENTER or choose Paste</div>
<div style="top:1018.8px;height:17px;line-height:17px;font-size:11.2px;color:#444;white-space:nowrap;left:348.3px;transform:scaleX(0.9899);transform-origin:0 50%;">Average: 1,33469E+14</div>
<div style="top:1018.8px;height:17px;line-height:17px;font-size:11.2px;color:#444;white-space:nowrap;left:476.3px;transform:scaleX(1.0734);transform-origin:0 50%;">Count: 8</div>
<div style="top:1018.8px;height:17px;line-height:17px;font-size:11.2px;color:#444;white-space:nowrap;left:536.3px;transform:scaleX(0.9822);transform-origin:0 50%;">Sum: 8,00816E+14</div>
<div style="left:650px;top:1016px;width:40px;height:22px;background:#c8c6c4;"></div>
<svg style="left:662px;top:1018.5px;" width="14" height="14" viewBox="0 0 14 14"><rect x="0.6" y="0.6" width="12.8" height="12.8" fill="none" stroke="#444" stroke-width="1.1"/><path d="M0.6 5 H13.4 M0.6 9.2 H13.4 M5 0.6 V13.4 M9.2 0.6 V13.4" stroke="#444" stroke-width="1.1"/></svg>
<svg style="left:702px;top:1018.5px;" width="15" height="14" viewBox="0 0 15 14"><rect x="0.6" y="0.6" width="13.4" height="12.8" fill="none" stroke="#444" stroke-width="1.1"/><rect x="3.6" y="3.4" width="7.4" height="7.4" fill="none" stroke="#444" stroke-width="1"/><path d="M5.2 5.6 H9.4 M5.2 7.2 H9.4 M5.2 8.8 H9.4" stroke="#444" stroke-width=".8"/></svg>
<svg style="left:742px;top:1018.5px;" width="15" height="14" viewBox="0 0 15 14"><rect x="0.6" y="0.6" width="13.4" height="12.8" fill="none" stroke="#444" stroke-width="1.1"/><path d="M0.6 8.4 H14 M4.6 0.6 V8.4 M9 0.6 V6" stroke="#444" stroke-width="1.1"/></svg>
<div style="left:776px;top:1025.5px;width:8px;height:1px;background:#444;"></div>
<div style="left:789px;top:1025.5px;width:99px;height:1px;background:#b5b5b5;"></div>
<div style="left:836px;top:1019.5px;width:5px;height:12px;background:#7f7f7f;"></div>
<div style="left:893px;top:1025.5px;width:9px;height:1px;background:#444;"></div>
<div style="left:897px;top:1021.5px;width:1px;height:9px;background:#444;"></div>
<div style="top:1018.8px;height:17px;line-height:17px;font-size:11.2px;color:#444;white-space:nowrap;left:913.8px;transform:scaleX(0.9747);transform-origin:0 50%;">100%</div>
<div style="left:0px;top:35px;width:1px;height:1003px;background:#217346;"></div>
<div style="left:0px;top:1037px;width:961px;height:3px;background:#16301f;"></div>
<div style="left:962px;top:0px;width:955px;height:35px;background:#217346;"></div>
<div style="left:962px;top:0px;width:955px;height:1px;background:#6a9f83;"></div>
<svg style="left:985px;top:12px;" width="15" height="15" viewBox="0 0 15 15"><path d="M1 1 H14 V14 H1 Z" fill="none" stroke="#ffffff" stroke-width="2"/><rect x="3.4" y="1" width="8.2" height="4.4" fill="none" stroke="#ffffff" stroke-width="1.3"/><path d="M4 14 V9.3 H11 V14" fill="none" stroke="#ffffff" stroke-width="1.7"/><rect x="6.4" y="10.6" width="1.6" height="3" fill="#ffffff"/></svg>
<svg style="left:1013px;top:11px;" width="17" height="16" viewBox="0 0 17 16"><path d="M6.5 1.8 L2.2 6.2 L6.5 10.6 M2.6 6.2 H10 A4.2 4.2 0 0 1 10 14.6 H8" fill="none" stroke="#ffffff" stroke-width="1.7"/></svg>
<svg style="left:1033px;top:15px;" width="8" height="5" viewBox="0 0 8 5"><path d="M1 1 L4.0 4 L7 1" fill="none" stroke="#9fc9b3" stroke-width="1.3"/></svg>
<svg style="left:1052px;top:11px;" width="17" height="16" viewBox="0 0 17 16"><path d="M10.5 1.8 L14.8 6.2 L10.5 10.6 M14.4 6.2 H7 A4.2 4.2 0 0 0 7 14.6 H9" fill="none" stroke="#4f9372" stroke-width="1.7"/></svg>
<svg style="left:1072px;top:15px;" width="8" height="5" viewBox="0 0 8 5"><path d="M1 1 L4.0 4 L7 1" fill="none" stroke="#4f9372" stroke-width="1.3"/></svg>
<svg style="left:1093px;top:15px;" width="10" height="8" viewBox="0 0 10 8"><rect x="1.5" y="0.5" width="7" height="1.3" fill="#ffffff"/><path d="M1.5 3.6 H8.5 L5 7.2 Z" fill="#ffffff"/></svg>
<div style="top:8.5px;height:19px;line-height:19px;font-size:12.6px;color:#a6d2ba;white-space:nowrap;left:1239.0px;width:400px;text-align:center;transform:scaleX(0.9209);transform-origin:50% 50%;">Book2&nbsp; -&nbsp; Excel</div>
<div style="left:1665px;top:8px;width:58px;height:19px;background:#a3d2b8;"></div>
<div style="top:8.5px;height:19px;line-height:19px;font-size:12.6px;color:#2c8457;white-space:nowrap;left:1664.5px;width:58px;text-align:center;transform:scaleX(0.9477);transform-origin:50% 50%;">Sign in</div>
<svg style="left:1749px;top:12px;" width="14" height="11" viewBox="0 0 14 11"><rect x="0.6" y="0.6" width="12.8" height="9.8" fill="none" stroke="#a6d2ba" stroke-width="1.1"/><path d="M0.6 3 H13.4" stroke="#a6d2ba" stroke-width="1"/><path d="M7 9 V4.8 M4.8 6.8 L7 4.6 L9.2 6.8" fill="none" stroke="#a6d2ba" stroke-width="1"/></svg>
<div style="left:1797px;top:16px;width:10px;height:1px;background:#a6d2ba;"></div>
<div style="left:1843px;top:12px;width:10px;height:10px;border:1px solid #a6d2ba;box-sizing:border-box;"></div>
<svg style="left:1889px;top:12px;" width="11" height="11" viewBox="0 0 11 11"><path d="M0.5 0.5 L10.5 10.5 M10.5 0.5 L0.5 10.5" stroke="#a6d2ba" stroke-width="1.1"/></svg>
<div style="left:962px;top:35px;width:955px;height:30px;background:#f3f2f1;"></div>
<div style="top:40.8px;height:20px;line-height:20px;font-size:13.3px;color:#444444;white-space:nowrap;left:979.3px;transform:scaleX(0.9283);transform-origin:0 50%;">File</div>
<div style="top:40.8px;height:20px;line-height:20px;font-size:13.3px;color:#3a3a3a;white-space:nowrap;font-weight:bold;left:1030.8px;transform:scaleX(1.0256);transform-origin:0 50%;">Home</div>
<div style="left:1031px;top:60px;width:38px;height:3px;background:#217346;"></div>
<div style="top:40.8px;height:20px;line-height:20px;font-size:13.3px;color:#444444;white-space:nowrap;left:1095.3px;transform:scaleX(1.004);transform-origin:0 50%;">Insert</div>
<div style="top:40.8px;height:20px;line-height:20px;font-size:13.3px;color:#444444;white-space:nowrap;left:1158.8px;transform:scaleX(0.9629);transform-origin:0 50%;">Page Layout</div>
<div style="top:40.8px;height:20px;line-height:20px;font-size:13.3px;color:#444444;white-space:nowrap;left:1259.8px;transform:scaleX(0.9725);transform-origin:0 50%;">Formulas</div>
<div style="top:40.8px;height:20px;line-height:20px;font-size:13.3px;color:#444444;white-space:nowrap;left:1341.8px;transform:scaleX(0.9931);transform-origin:0 50%;">Data</div>
<div style="top:40.8px;height:20px;line-height:20px;font-size:13.3px;color:#444444;white-space:nowrap;left:1397.3px;transform:scaleX(0.9493);transform-origin:0 50%;">Review</div>
<div style="top:40.8px;height:20px;line-height:20px;font-size:13.3px;color:#444444;white-space:nowrap;left:1465.3px;transform:scaleX(0.9932);transform-origin:0 50%;">View</div>
<div style="top:40.8px;height:20px;line-height:20px;font-size:13.3px;color:#444444;white-space:nowrap;left:1520.8px;transform:scaleX(1.0015);transform-origin:0 50%;">Help</div>
<svg style="left:1588px;top:42px;" width="13" height="18" viewBox="0 0 13 18"><path d="M6.5 1 A5 5 0 0 1 9.6 10 V12.4 H3.4 V10 A5 5 0 0 1 6.5 1 Z" fill="none" stroke="#444" stroke-width="1"/><path d="M4 14.3 H9 M4.8 16.3 H8.2" stroke="#444" stroke-width="1"/></svg>
<div style="top:40.8px;height:20px;line-height:20px;font-size:13.3px;color:#444444;white-space:nowrap;left:1615.3px;transform:scaleX(1.0141);transform-origin:0 50%;">Tell me what you want to do</div>
<div style="left:1838px;top:39px;width:66px;height:23px;background:#ffffff;border:1px solid #e6e4e2;box-sizing:border-box;"></div>
<svg style="left:1844px;top:44px;" width="13" height="13" viewBox="0 0 13 13"><path d="M4.5 4.2 H1 V12 H10.5 V8.5" fill="none" stroke="#444" stroke-width="1"/><path d="M3.6 9.2 C4 5.8 6.2 4.2 9 4.2 M7.2 1.8 L9.8 4.3 L7.2 6.8" fill="none" stroke="#444" stroke-width="1"/></svg>
<div style="top:40.8px;height:20px;line-height:20px;font-size:13.3px;color:#2f6b4c;white-space:nowrap;font-weight:bold;left:1859.3px;transform:scaleX(0.9576);transform-origin:0 50%;">Share</div>
<div style="left:962px;top:65px;width:955px;height:97px;background:#f3f2f1;"></div>
<svg style="left:978px;top:72px;" width="32" height="32" viewBox="0 0 32 32"><rect x="2" y="3.5" width="24" height="25" rx="1" fill="#f2c877"/><rect x="2" y="3.5" width="5" height="25" fill="#eab95c" opacity=".55"/><path d="M8 7.6 V4.3 H11.4 A2.7 2.7 0 0 1 16.6 4.3 H20 V7.6 Z" fill="#6d6b73"/><circle cx="14" cy="3.6" r="1.3" fill="#f3f2f1"/><path d="M16.5 12.5 H25.3 L29.5 16.7 V30.5 H16.5 Z" fill="#ffffff" stroke="#7a7876" stroke-width="1"/><path d="M25.3 12.5 V16.7 H29.5" fill="none" stroke="#7a7876" stroke-width="1"/></svg>
<div style="top:104.5px;height:19px;line-height:19px;font-size:12.6px;color:#444444;white-space:nowrap;left:977.8px;transform:scaleX(0.9125);transform-origin:0 50%;">Paste</div>
<svg style="left:988px;top:127px;" width="8" height="5" viewBox="0 0 8 5"><path d="M1 1 L4.0 4 L7 1" fill="none" stroke="#605e5c" stroke-width="1.3"/></svg>
<svg style="left:1016px;top:71px;" width="17" height="18" viewBox="0 0 17 18"><path d="M4.2 1.5 L10.6 11.2 M12.8 1.5 L6.4 11.2" stroke="#605e5c" stroke-width="1.7" fill="none"/><circle cx="4.2" cy="13.4" r="2.4" fill="none" stroke="#3a6ea5" stroke-width="1.2"/><circle cx="12.8" cy="13.4" r="2.4" fill="none" stroke="#3a6ea5" stroke-width="1.2"/></svg>
<svg style="left:1015px;top:96px;" width="18" height="16" viewBox="0 0 18 16"><path d="M1.5 1.5 H6 L8 3.5 V10.5 H1.5 Z" fill="#fff" stroke="#605e5c" stroke-width="1"/><path d="M3 4.5 H6 M3 6.5 H6 M3 8.5 H5" stroke="#605e5c" stroke-width=".9"/><path d="M7.5 5.5 H12.5 L15.5 8.5 V14.5 H7.5 Z" fill="#fff" stroke="#605e5c" stroke-width="1"/><path d="M9.3 9.5 H13.6 M9.3 11.6 H13.6" stroke="#605e5c" stroke-width=".9"/></svg>
<svg style="left:1038px;top:102px;" width="8" height="5" viewBox="0 0 8 5"><path d="M1 1 L4.0 4 L7 1" fill="none" stroke="#605e5c" stroke-width="1.3"/></svg>
<svg style="left:1015px;top:119px;" width="20" height="18" viewBox="0 0 20 18"><path d="M1 8.4 L8 4.8 L12.6 10.8 L7.6 15.6 C5.5 13 3.6 10.6 1 8.4 Z" fill="#efc581"/><path d="M8.4 4.2 L12 2.3 L16 7.6 L13 10.2 Z" fill="#605e5c"/><path d="M13 1.8 L15.8 0.4 L18.2 3.6 L16 5.6 Z" fill="#605e5c"/></svg>
<div style="top:144.0px;height:19px;line-height:19px;font-size:12.3px;color:#444444;white-space:nowrap;left:976.8px;transform:scaleX(0.9764);transform-origin:0 50%;">Clipboard</div>
<svg style="left:1047px;top:149px;" width="8" height="8" viewBox="0 0 8 8"><path d="M0.5 4.4 V0.5 H4.4" fill="none" stroke="#605e5c" stroke-width="1"/><path d="M2.4 2.4 L7.2 7.2 M7.3 3.8 V7.3 H3.8" fill="none" stroke="#605e5c" stroke-width="1"/></svg>
<div style="left:1058px;top:69px;width:1px;height:89px;background:#c8c6c4;"></div>
<div style="left:1067px;top:77px;width:122px;height:22px;background:#ffffff;border:1px solid #c8c6c4;box-sizing:border-box;"></div>
<div style="top:79.5px;height:19px;line-height:19px;font-size:12.6px;color:#262626;white-space:nowrap;left:1069.8px;transform:scaleX(0.9719);transform-origin:0 50%;">Calibri</div>
<svg style="left:1180px;top:87px;" width="6" height="3" viewBox="0 0 6 3"><path d="M0 0 H6 L3.0 3 Z" fill="#605e5c"/></svg>
<div style="left:1192px;top:77px;width:43px;height:22px;background:#ffffff;border:1px solid #c8c6c4;box-sizing:border-box;"></div>
<div style="top:79.5px;height:19px;line-height:19px;font-size:12.6px;color:#262626;white-space:nowrap;left:1195.8px;transform:scaleX(0.8182);transform-origin:0 50%;">11</div>
<svg style="left:1225px;top:87px;" width="6" height="3" viewBox="0 0 6 3"><path d="M0 0 H6 L3.0 3 Z" fill="#605e5c"/></svg>
<div style="top:77.0px;height:23px;line-height:23px;font-size:15px;color:#605e5c;white-space:nowrap;left:1243px;-webkit-text-stroke:.3px #605e5c;">A</div>
<svg style="left:1251px;top:80px;" width="6" height="4" viewBox="0 0 6 4"><path d="M0 3.5 L3 0.5 L6 3.5 Z" fill="#3a6ea5"/></svg>
<div style="top:81.0px;height:18px;line-height:18px;font-size:12px;color:#605e5c;white-space:nowrap;left:1268px;-webkit-text-stroke:.3px #605e5c;">A</div>
<svg style="left:1275px;top:80px;" width="6" height="4" viewBox="0 0 6 4"><path d="M0 0.5 L3 3.5 L6 0.5 Z" fill="#3a6ea5"/></svg>
<div style="top:110.0px;height:20px;line-height:20px;font-size:13.5px;color:#605e5c;white-space:nowrap;font-weight:bold;left:1073.5px;">B</div>
<div style="top:109.5px;height:21px;line-height:21px;font-size:14px;color:#605e5c;white-space:nowrap;font-weight:bold;left:1098.5px;font-family:'Liberation Serif',serif;font-style:italic;">I</div>
<div style="top:109.5px;height:20px;line-height:20px;font-size:13px;color:#605e5c;white-space:nowrap;font-weight:bold;left:1121px;">U</div>
<div style="left:1121px;top:125.5px;width:9px;height:1px;background:#605e5c;"></div>
<svg style="left:1139.5px;top:117.5px;" width="8" height="5" viewBox="0 0 8 5"><path d="M1 1 L4.0 4 L7 1" fill="none" stroke="#605e5c" stroke-width="1.3"/></svg>
<div style="left:1156px;top:110px;width:1px;height:21px;background:#d8d6d4;"></div>
<svg style="left:1165px;top:112px;" width="14" height="15" viewBox="0 0 14 15"><rect x="0" y="0" width="1" height="1" fill="#605e5c"/><rect x="0" y="6" width="1" height="1" fill="#605e5c"/><rect x="0" y="6" width="1" height="1" fill="#605e5c"/><rect x="0" y="0" width="1" height="1" fill="#605e5c"/><rect x="6" y="0" width="1" height="1" fill="#605e5c"/><rect x="12" y="0" width="1" height="1" fill="#605e5c"/><rect x="2" y="0" width="1" height="1" fill="#605e5c"/><rect x="2" y="6" width="1" height="1" fill="#605e5c"/><rect x="2" y="6" width="1" height="1" fill="#605e5c"/><rect x="0" y="2" width="1" height="1" fill="#605e5c"/><rect x="6" y="2" width="1" height="1" fill="#605e5c"/><rect x="12" y="2" width="1" height="1" fill="#605e5c"/><rect x="4" y="0" width="1" height="1" fill="#605e5c"/><rect x="4" y="6" width="1" height="1" fill="#605e5c"/><rect x="4" y="6" width="1" height="1" fill="#605e5c"/><rect x="0" y="4" width="1" height="1" fill="#605e5c"/><rect x="6" y="4" width="1" height="1" fill="#605e5c"/><rect x="12" y="4" width="1" height="1" fill="#605e5c"/><rect x="6" y="0" width="1" height="1" fill="#605e5c"/><rect x="6" y="6" width="1" height="1" fill="#605e5c"/><rect x="6" y="6" width="1" height="1" fill="#605e5c"/><rect x="0" y="6" width="1" height="1" fill="#605e5c"/><rect x="6" y="6" width="1" height="1" fill="#605e5c"/><rect x="12" y="6" width="1" height="1" fill="#605e5c"/><rect x="8" y="0" width="1" height="1" fill="#605e5c"/><rect x="8" y="6" width="1" height="1" fill="#605e5c"/><rect x="8" y="6" width="1" height="1" fill="#605e5c"/><rect x="0" y="8" width="1" height="1" fill="#605e5c"/><rect x="6" y="8" width="1" height="1" fill="#605e5c"/><rect x="12" y="8" width="1" height="1" fill="#605e5c"/><rect x="10" y="0" width="1" height="1" fill="#605e5c"/><rect x="10" y="6" width="1" height="1" fill="#605e5c"/><rect x="10" y="6" width="1" height="1" fill="#605e5c"/><rect x="0" y="10" width="1" height="1" fill="#605e5c"/><rect x="6" y="10" width="1" height="1" fill="#605e5c"/><rect x="12" y="10" width="1" height="1" fill="#605e5c"/><rect x="12" y="0" width="1" height="1" fill="#605e5c"/><rect x="12" y="6" width="1" height="1" fill="#605e5c"/><rect x="12" y="6" width="1" height="1" fill="#605e5c"/><rect x="0" y="12" width="1" height="1" fill="#605e5c"/><rect x="6" y="12" width="1" height="1" fill="#605e5c"/><rect x="12" y="12" width="1" height="1" fill="#605e5c"/><path d="M0 13.8 H14" stroke="#605e5c" stroke-width="1.3"/></svg>
<svg style="left:1185.5px;top:117.5px;" width="8" height="5" viewBox="0 0 8 5"><path d="M1 1 L4.0 4 L7 1" fill="none" stroke="#605e5c" stroke-width="1.3"/></svg>
<div style="left:1202px;top:110px;width:1px;height:21px;background:#d8d6d4;"></div>
<svg style="left:1209px;top:111px;" width="18" height="18" viewBox="0 0 18 18"><path d="M4 7.2 L9.2 2.2 L13.8 7 L8.6 11.8 Z" fill="#fff" stroke="#4b5aa3" stroke-width="1.1"/><path d="M7.6 4.2 V1.2 A1.3 1.3 0 0 1 10.2 1.2 V3" fill="none" stroke="#605e5c" stroke-width="1"/><path d="M13.2 5.2 C15.8 6.2 16.6 8.2 16 10.6 C15 9.6 14.2 8.2 13 7.4 Z" fill="#4b5aa3"/><rect x="1" y="13" width="16.4" height="3.8" fill="#f5ee1b"/></svg>
<svg style="left:1231.5px;top:117.5px;" width="8" height="5" viewBox="0 0 8 5"><path d="M1 1 L4.0 4 L7 1" fill="none" stroke="#605e5c" stroke-width="1.3"/></svg>
<div style="top:107.0px;height:22px;line-height:22px;font-size:14.5px;color:#605e5c;white-space:nowrap;font-weight:bold;left:1246.5px;width:20px;text-align:center;">A</div>
<div style="left:1249px;top:124px;width:16px;height:4px;background:#e8121d;"></div>
<svg style="left:1270.5px;top:117.5px;" width="8" height="5" viewBox="0 0 8 5"><path d="M1 1 L4.0 4 L7 1" fill="none" stroke="#605e5c" stroke-width="1.3"/></svg>
<div style="top:144.0px;height:19px;line-height:19px;font-size:12.3px;color:#444444;white-space:nowrap;left:1153.8px;transform:scaleX(0.9915);transform-origin:0 50%;">Font</div>
<svg style="left:1279px;top:149px;" width="8" height="8" viewBox="0 0 8 8"><path d="M0.5 4.4 V0.5 H4.4" fill="none" stroke="#605e5c" stroke-width="1"/><path d="M2.4 2.4 L7.2 7.2 M7.3 3.8 V7.3 H3.8" fill="none" stroke="#605e5c" stroke-width="1"/></svg>
<div style="left:1290px;top:69px;width:1px;height:89px;background:#c8c6c4;"></div>
<svg style="left:1303px;top:71px;" width="18" height="16" viewBox="0 0 18 16"><rect x="0" y="0.6" width="14" height="1.1" fill="#605e5c"/><rect x="0" y="3.7" width="14" height="1.1" fill="#605e5c"/><rect x="0" y="6.8" width="14" height="1.1" fill="#605e5c"/></svg>
<svg style="left:1327px;top:71px;" width="18" height="16" viewBox="0 0 18 16"><rect x="0" y="5" width="14" height="1.1" fill="#605e5c"/><rect x="0" y="8.1" width="14" height="1.1" fill="#605e5c"/><rect x="0" y="11.2" width="14" height="1.1" fill="#605e5c"/></svg>
<div style="left:1347px;top:69px;width:22px;height:23px;background:#c8c6c4;border:1px solid #aeacaa;box-sizing:border-box;"></div>
<svg style="left:1351px;top:71px;" width="18" height="16" viewBox="0 0 18 16"><rect x="0" y="12" width="14" height="1.1" fill="#605e5c"/><rect x="0" y="14.6" width="14" height="1.1" fill="#605e5c"/><rect x="0" y="17.2" width="14" height="1.1" fill="#605e5c"/></svg>
<div style="top:67.5px;height:16px;line-height:16px;font-size:10.5px;color:#605e5c;white-space:nowrap;font-weight:bold;left:1376.5px;letter-spacing:-.3px;">ab</div>
<div style="top:75.5px;height:16px;line-height:16px;font-size:10.5px;color:#605e5c;white-space:nowrap;font-weight:bold;left:1377px;">c</div>
<svg style="left:1384px;top:81px;" width="6" height="6" viewBox="0 0 6 6"><path d="M5 0.5 V3.6 H1.2 M2.8 1.8 L1 3.6 L2.8 5.4" fill="none" stroke="#3a6ea5" stroke-width="1"/></svg>
<svg style="left:1303px;top:98.6px;" width="18" height="16" viewBox="0 0 18 16"><rect x="0" y="1" width="14" height="1.2" fill="#605e5c"/><rect x="0" y="3.8" width="9" height="1.2" fill="#605e5c"/><rect x="0" y="6.6" width="14" height="1.2" fill="#605e5c"/><rect x="0" y="9.4" width="9" height="1.2" fill="#605e5c"/></svg>
<svg style="left:1327px;top:98.6px;" width="18" height="16" viewBox="0 0 18 16"><rect x="0" y="1" width="14" height="1.2" fill="#605e5c"/><rect x="2.5" y="3.8" width="9" height="1.2" fill="#605e5c"/><rect x="0" y="6.6" width="14" height="1.2" fill="#605e5c"/><rect x="2.5" y="9.4" width="9" height="1.2" fill="#605e5c"/></svg>
<svg style="left:1351px;top:98.6px;" width="18" height="16" viewBox="0 0 18 16"><rect x="0" y="1" width="14" height="1.2" fill="#605e5c"/><rect x="5" y="3.8" width="9" height="1.2" fill="#605e5c"/><rect x="0" y="6.6" width="14" height="1.2" fill="#605e5c"/><rect x="5" y="9.4" width="9" height="1.2" fill="#605e5c"/></svg>
<svg style="left:1375px;top:96px;" width="16" height="16" viewBox="0 0 16 16"><rect x="0.5" y="0.5" width="14" height="14" fill="#fff" stroke="#605e5c" stroke-width="1"/><path d="M0.5 3.8 H14.5 M0.5 11.2 H14.5 M7.5 0.5 V3.8 M7.5 11.2 V14.5" stroke="#605e5c" stroke-width="1"/><path d="M2.6 7.5 H12.4 M4.4 5.7 L2.6 7.5 L4.4 9.3 M10.6 5.7 L12.4 7.5 L10.6 9.3" fill="none" stroke="#3a6ea5" stroke-width="1"/></svg>
<svg style="left:1396.5px;top:102px;" width="8" height="5" viewBox="0 0 8 5"><path d="M1 1 L4.0 4 L7 1" fill="none" stroke="#605e5c" stroke-width="1.3"/></svg>
<svg style="left:1302px;top:120px;" width="17" height="15" viewBox="0 0 17 15"><path d="M0.5 1 H16 M8.5 4.2 H16 M8.5 7.4 H16 M8.5 10.6 H16 M0.5 13.8 H16" stroke="#605e5c" stroke-width="1.1"/><path d="M0.8 7.4 H6.6 M3.4 4.8 L0.8 7.4 L3.4 10" fill="none" stroke="#3a6ea5" stroke-width="1.5"/></svg>
<svg style="left:1326px;top:120px;" width="17" height="15" viewBox="0 0 17 15"><path d="M0.5 1 H16 M8.5 4.2 H16 M8.5 7.4 H16 M8.5 10.6 H16 M0.5 13.8 H16" stroke="#605e5c" stroke-width="1.1"/><path d="M0.4 7.4 H6.2 M3.6 4.8 L6.2 7.4 L3.6 10" fill="none" stroke="#3a6ea5" stroke-width="1.5"/></svg>
<div style="left:1349px;top:117px;width:1px;height:23px;background:#d8d6d4;"></div>
<div style="left:1355px;top:119px;font-size:11px;font-weight:bold;color:#605e5c;transform:rotate(-45deg);transform-origin:50% 50%;line-height:12px;">ab</div>
<svg style="left:1361px;top:121px;" width="14" height="15" viewBox="0 0 14 15"><path d="M1 13.5 L11.5 3 M7.6 2.6 L11.8 2.6 L11.8 6.8" fill="none" stroke="#605e5c" stroke-width="1.1"/></svg>
<svg style="left:1376.5px;top:126px;" width="8" height="5" viewBox="0 0 8 5"><path d="M1 1 L4.0 4 L7 1" fill="none" stroke="#605e5c" stroke-width="1.3"/></svg>
<div style="top:144.0px;height:19px;line-height:19px;font-size:12.3px;color:#444444;white-space:nowrap;left:1318.3px;transform:scaleX(0.9947);transform-origin:0 50%;">Alignment</div>
<svg style="left:1406px;top:149px;" width="8" height="8" viewBox="0 0 8 8"><path d="M0.5 4.4 V0.5 H4.4" fill="none" stroke="#605e5c" stroke-width="1"/><path d="M2.4 2.4 L7.2 7.2 M7.3 3.8 V7.3 H3.8" fill="none" stroke="#605e5c" stroke-width="1"/></svg>
<div style="left:1417px;top:69px;width:1px;height:89px;background:#c8c6c4;"></div>
<div style="left:1426px;top:70px;width:85px;height:22px;background:#ffffff;border:1px solid #c8c6c4;box-sizing:border-box;"></div>
<div style="top:72.0px;height:19px;line-height:19px;font-size:12.6px;color:#262626;white-space:nowrap;left:1429.3px;transform:scaleX(0.8904);transform-origin:0 50%;">General</div>
<svg style="left:1501px;top:79px;" width="6" height="3" viewBox="0 0 6 3"><path d="M0 0 H6 L3.0 3 Z" fill="#605e5c"/></svg>
<svg style="left:1428px;top:95px;" width="20" height="18" viewBox="0 0 20 18"><rect x="1" y="1.5" width="15" height="8.5" fill="#dfe9f5" stroke="#41619b" stroke-width="1.4"/><circle cx="8.5" cy="5.6" r="2" fill="#41619b"/><ellipse cx="12.6" cy="10" rx="4.6" ry="1.7" fill="#f0c470"/><ellipse cx="10.6" cy="12.6" rx="4.6" ry="1.7" fill="#f6d48a"/><ellipse cx="8.4" cy="15.2" rx="4.8" ry="1.7" fill="#f0c470"/></svg>
<svg style="left:1451.5px;top:102px;" width="8" height="5" viewBox="0 0 8 5"><path d="M1 1 L4.0 4 L7 1" fill="none" stroke="#605e5c" stroke-width="1.3"/></svg>
<div style="top:93.5px;height:22px;line-height:22px;font-size:14.5px;color:#605e5c;white-space:nowrap;left:1461.3px;width:30px;text-align:center;">%</div>
<div style="top:81.5px;height:30px;line-height:30px;font-size:20px;color:#605e5c;white-space:nowrap;font-weight:bold;left:1496.5px;font-family:'Liberation Serif',serif;">,</div>
<svg style="left:1428px;top:120px;" width="17" height="16" viewBox="0 0 17 16"><path d="M1 4.2 H6.2 M3.2 2 L1 4.2 L3.2 6.4" fill="none" stroke="#3a6ea5" stroke-width="1.2"/></svg>
<div style="top:116.5px;height:15px;line-height:15px;font-size:9.5px;color:#605e5c;white-space:nowrap;left:1437.5px;letter-spacing:-.3px;">.0</div>
<div style="top:124.0px;height:15px;line-height:15px;font-size:9.5px;color:#605e5c;white-space:nowrap;left:1431px;letter-spacing:-.3px;">.00</div>
<div style="top:116.5px;height:15px;line-height:15px;font-size:9.5px;color:#605e5c;white-space:nowrap;left:1455.5px;letter-spacing:-.3px;">.00</div>
<svg style="left:1452px;top:127px;" width="8" height="8" viewBox="0 0 8 8"><path d="M0.6 4 H6 M3.8 1.8 L6 4 L3.8 6.2" fill="none" stroke="#3a6ea5" stroke-width="1.2"/></svg>
<div style="top:124.0px;height:15px;line-height:15px;font-size:9.5px;color:#605e5c;white-space:nowrap;left:1460.5px;letter-spacing:-.3px;">.0</div>
<div style="top:144.0px;height:19px;line-height:19px;font-size:12.3px;color:#444444;white-space:nowrap;left:1438.8px;transform:scaleX(0.9577);transform-origin:0 50%;">Number</div>
<svg style="left:1507px;top:149px;" width="8" height="8" viewBox="0 0 8 8"><path d="M0.5 4.4 V0.5 H4.4" fill="none" stroke="#605e5c" stroke-width="1"/><path d="M2.4 2.4 L7.2 7.2 M7.3 3.8 V7.3 H3.8" fill="none" stroke="#605e5c" stroke-width="1"/></svg>
<div style="left:1518px;top:69px;width:1px;height:89px;background:#c8c6c4;"></div>
<svg style="left:1530px;top:70px;" width="17" height="17" viewBox="0 0 17 17"><rect x="0.5" y="0.5" width="13" height="12" fill="#fff" stroke="#8a8886" stroke-width="1"/><path d="M0.5 4.5 H13.5 M0.5 8.5 H13.5 M7 0.5 V12.5" stroke="#8a8886" stroke-width="1"/><rect x="0.5" y="0.5" width="6.5" height="4" fill="#c8474d"/><rect x="0.5" y="4.8" width="5" height="3.4" fill="#41619b"/><rect x="0.5" y="8.8" width="3.6" height="3.6" fill="#c8474d"/><rect x="6.5" y="7.5" width="9.5" height="8.5" fill="#fff" stroke="#605e5c" stroke-width="1.1"/><path d="M8.6 10.6 H13.8 M8.6 13 H13.8 M12.6 9 L10 14.6" stroke="#605e5c" stroke-width="1"/></svg>
<div style="top:71.0px;height:19px;line-height:19px;font-size:12.6px;color:#444444;white-space:nowrap;left:1548.8px;transform:scaleX(0.9818);transform-origin:0 50%;">Conditional Formatting</div>
<svg style="left:1676px;top:77px;" width="8" height="5" viewBox="0 0 8 5"><path d="M1 1 L4.0 4 L7 1" fill="none" stroke="#605e5c" stroke-width="1.3"/></svg>
<svg style="left:1530px;top:94px;" width="17" height="17" viewBox="0 0 17 17"><rect x="0.5" y="0.5" width="15" height="11.6" fill="#fff" stroke="#797775" stroke-width="1"/><rect x="4.2" y="3.6" width="11" height="8.2" fill="#c9ced6"/><path d="M0.5 3.6 H15.5 M0.5 6.4 H15.5 M0.5 9.2 H15.5 M4.2 0.5 V12 M8 0.5 V12 M11.8 0.5 V12" stroke="#a9a7a5" stroke-width=".7"/><path d="M15.8 4.6 L10 10.6 L11.6 12 L16.6 7.2 Z" fill="#605e5c"/><path d="M10 10.2 C7.8 10.4 6.4 12 4.6 15.4 C8.4 15.8 10.6 14.6 11.8 12 Z" fill="#3a6ea5"/></svg>
<div style="top:93.5px;height:19px;line-height:19px;font-size:12.6px;color:#444444;white-space:nowrap;left:1548.8px;transform:scaleX(0.9205);transform-origin:0 50%;">Format as Table</div>
<svg style="left:1634.5px;top:99.5px;" width="8" height="5" viewBox="0 0 8 5"><path d="M1 1 L4.0 4 L7 1" fill="none" stroke="#605e5c" stroke-width="1.3"/></svg>
<svg style="left:1530px;top:116.5px;" width="17" height="17" viewBox="0 0 17 17"><rect x="0.5" y="0.5" width="15" height="11.6" fill="#fff" stroke="#797775" stroke-width="1"/><rect x="4.2" y="3.6" width="11" height="8.2" fill="#c9ced6"/><path d="M0.5 3.6 H15.5 M0.5 6.4 H15.5 M0.5 9.2 H15.5 M4.2 0.5 V12 M8 0.5 V12 M11.8 0.5 V12" stroke="#a9a7a5" stroke-width=".7"/><path d="M15.8 4.6 L10 10.6 L11.6 12 L16.6 7.2 Z" fill="#605e5c"/><path d="M10 10.2 C7.8 10.4 6.4 12 4.6 15.4 C8.4 15.8 10.6 14.6 11.8 12 Z" fill="#3a6ea5"/></svg>
<div style="top:117.0px;height:19px;line-height:19px;font-size:12.6px;color:#444444;white-space:nowrap;left:1548.8px;transform:scaleX(0.8975);transform-origin:0 50%;">Cell Styles</div>
<svg style="left:1605.5px;top:123px;" width="8" height="5" viewBox="0 0 8 5"><path d="M1 1 L4.0 4 L7 1" fill="none" stroke="#605e5c" stroke-width="1.3"/></svg>
<div style="top:144.0px;height:19px;line-height:19px;font-size:12.3px;color:#444444;white-space:nowrap;left:1593.8px;transform:scaleX(0.8776);transform-origin:0 50%;">Styles</div>
<div style="left:1699px;top:69px;width:1px;height:89px;background:#c8c6c4;"></div>
<svg style="left:1709px;top:70px;" width="18" height="17" viewBox="0 0 18 17"><path d="M1 1 H9 V4 H1 Z M5 1 V4 M1 11 H9 V16 H1 Z M5 11 V16 M1 13.5 H9" fill="none" stroke="#b3b0ad" stroke-width="1"/><rect x="8.6" y="6" width="7.6" height="3" fill="#c8c6c4" stroke="#b3b0ad" stroke-width="1"/><path d="M12.4 6 V9" stroke="#b3b0ad" stroke-width="1"/><path d="M0.8 7.5 H7.4 M3.2 5.2 L0.8 7.5 L3.2 9.8" fill="none" stroke="#b3b0ad" stroke-width="1.3"/></svg>
<div style="top:71.0px;height:19px;line-height:19px;font-size:12.6px;color:#b3b0ad;white-space:nowrap;left:1728.8px;transform:scaleX(0.9333);transform-origin:0 50%;">Insert</div>
<svg style="left:1768px;top:77px;" width="8" height="5" viewBox="0 0 8 5"><path d="M1 1 L4.0 4 L7 1" fill="none" stroke="#605e5c" stroke-width="1.3"/></svg>
<svg style="left:1709px;top:93px;" width="18" height="17" viewBox="0 0 18 17"><path d="M1 1 H9 V4 H1 Z M5 1 V4 M1 11 H9 V16 H1 Z M5 11 V16 M1 13.5 H9" fill="none" stroke="#605e5c" stroke-width="1"/><rect x="3.2" y="6" width="4.6" height="3" fill="#cfe0d6" stroke="#605e5c" stroke-width="1"/><path d="M10.4 4.4 L15.6 9.6 M15.6 4.4 L10.4 9.6" stroke="#e8474f" stroke-width="1.5"/></svg>
<div style="top:93.5px;height:19px;line-height:19px;font-size:12.6px;color:#444444;white-space:nowrap;left:1728.8px;transform:scaleX(0.9312);transform-origin:0 50%;">Delete</div>
<svg style="left:1771.5px;top:99.5px;" width="8" height="5" viewBox="0 0 8 5"><path d="M1 1 L4.0 4 L7 1" fill="none" stroke="#605e5c" stroke-width="1.3"/></svg>
<svg style="left:1709px;top:116px;" width="17" height="17" viewBox="0 0 17 17"><path d="M1 0.6 V3.6 M13 0.6 V3.6 M1.6 2.1 H12.4 M3.4 0.8 L1.8 2.1 L3.4 3.4 M10.6 0.8 L12.2 2.1 L10.6 3.4" fill="none" stroke="#3a6ea5" stroke-width=".9"/><rect x="0.5" y="5.2" width="14" height="9.6" fill="#fff" stroke="#605e5c" stroke-width="1"/><rect x="4.2" y="7.8" width="3.8" height="3.2" fill="#3a6ea5"/><path d="M0.5 7.6 H14.5 M0.5 11.2 H14.5 M4 5.2 V14.8 M8.2 5.2 V14.8 M11.6 5.2 V14.8" stroke="#605e5c" stroke-width=".8"/><path d="M1 16.2 H6 M8 16.2 H13" stroke="#605e5c" stroke-width="1"/></svg>
<div style="top:117.0px;height:19px;line-height:19px;font-size:12.6px;color:#444444;white-space:nowrap;left:1728.8px;transform:scaleX(0.9752);transform-origin:0 50%;">Format</div>
<svg style="left:1770px;top:123px;" width="8" height="5" viewBox="0 0 8 5"><path d="M1 1 L4.0 4 L7 1" fill="none" stroke="#605e5c" stroke-width="1.3"/></svg>
<div style="top:144.0px;height:19px;line-height:19px;font-size:12.3px;color:#444444;white-space:nowrap;left:1732.3px;transform:scaleX(0.9106);transform-origin:0 50%;">Cells</div>
<div style="left:1792px;top:69px;width:1px;height:89px;background:#c8c6c4;"></div>
<svg style="left:1803px;top:70px;" width="18" height="17" viewBox="0 0 18 17"><path d="M15.2 4.4 V1.8 H2 L8.6 8.4 L2 15 H15.2 V12.4" fill="none" stroke="#3b3a39" stroke-width="1.9" stroke-linejoin="miter"/></svg>
<svg style="left:1826px;top:77px;" width="8" height="5" viewBox="0 0 8 5"><path d="M1 1 L4.0 4 L7 1" fill="none" stroke="#605e5c" stroke-width="1.3"/></svg>
<div style="top:67.0px;height:16px;line-height:16px;font-size:10px;color:#4f6fb0;white-space:nowrap;font-weight:bold;left:1842.5px;">A</div>
<div style="top:76.0px;height:16px;line-height:16px;font-size:10px;color:#a35aa8;white-space:nowrap;font-weight:bold;left:1843px;">Z</div>
<svg style="left:1850px;top:76px;" width="9" height="8" viewBox="0 0 9 8"><path d="M0.4 0.6 H8.6 L5.6 4 V7.2 H3.4 V4 Z" fill="#605e5c"/></svg>
<svg style="left:1862px;top:77px;" width="8" height="5" viewBox="0 0 8 5"><path d="M1 1 L4.0 4 L7 1" fill="none" stroke="#605e5c" stroke-width="1.3"/></svg>
<svg style="left:1804px;top:93px;" width="17" height="18" viewBox="0 0 17 18"><rect x="1" y="1" width="14" height="15.4" fill="#fff" stroke="#605e5c" stroke-width="1.1"/><rect x="1" y="1" width="14" height="3.4" fill="#8a8886"/><path d="M8 6.4 V13.4 M4.8 10.2 L8 13.4 L11.2 10.2" fill="none" stroke="#2f6ca8" stroke-width="1.7"/></svg>
<svg style="left:1824px;top:99.5px;" width="8" height="5" viewBox="0 0 8 5"><path d="M1 1 L4.0 4 L7 1" fill="none" stroke="#605e5c" stroke-width="1.3"/></svg>
<svg style="left:1842px;top:95px;" width="16" height="15" viewBox="0 0 16 15"><circle cx="9.8" cy="5.4" r="4.2" fill="#eef4fb" stroke="#3a6ea5" stroke-width="1.4"/><path d="M6.6 8.6 L1.4 13.4" stroke="#3a6ea5" stroke-width="2.2" stroke-linecap="round"/></svg>
<svg style="left:1862px;top:99.5px;" width="8" height="5" viewBox="0 0 8 5"><path d="M1 1 L4.0 4 L7 1" fill="none" stroke="#605e5c" stroke-width="1.3"/></svg>
<svg style="left:1804px;top:118px;" width="16" height="14" viewBox="0 0 16 14"><path d="M9.6 1 L14.6 4.6 L7.4 11.6 L2.6 8 Z" fill="#ea6f8d"/><path d="M2.2 8.6 L6.8 12 L5.4 13.2 L1 10 Z" fill="#f4a6b8"/></svg>
<svg style="left:1824px;top:123px;" width="8" height="5" viewBox="0 0 8 5"><path d="M1 1 L4.0 4 L7 1" fill="none" stroke="#605e5c" stroke-width="1.3"/></svg>
<div style="top:144.0px;height:19px;line-height:19px;font-size:12.3px;color:#444444;white-space:nowrap;left:1818.3px;transform:scaleX(1.021);transform-origin:0 50%;">Editing</div>
<div style="left:1882px;top:69px;width:1px;height:89px;background:#c8c6c4;"></div>
<svg style="left:1897px;top:150px;" width="12" height="8" viewBox="0 0 12 8"><path d="M1 6.6 L6 1.6 L11 6.6" fill="none" stroke="#605e5c" stroke-width="1.3"/></svg>
<div style="left:962px;top:162px;width:955px;height:46px;background:#e6e6e6;"></div>
<div style="left:962px;top:162px;width:955px;height:4px;background:linear-gradient(#cfcfcf,#e6e6e6);"></div>
<div style="left:969px;top:172px;width:101px;height:26px;background:#ffffff;border:1px solid #d0d0d0;box-sizing:border-box;"></div>
<div style="top:175.7px;height:20px;line-height:20px;font-size:13px;color:#333;white-space:nowrap;left:974.5px;transform:scaleX(0.95);transform-origin:0 50%;">A340</div>
<svg style="left:1056px;top:183px;" width="7" height="3.5" viewBox="0 0 7 3.5"><path d="M0 0 H7 L3.5 3.5 Z" fill="#666"/></svg>
<div style="left:1083.5px;top:178px;width:2px;height:2px;background:#a8a8a8;"></div>
<div style="left:1083.5px;top:183.5px;width:2px;height:2px;background:#a8a8a8;"></div>
<div style="left:1083.5px;top:189px;width:2px;height:2px;background:#a8a8a8;"></div>
<div style="left:1100px;top:172px;width:110px;height:26px;background:#ffffff;border:1px solid #d0d0d0;box-sizing:border-box;"></div>
<svg style="left:1114px;top:180px;" width="11" height="11" viewBox="0 0 11 11"><path d="M1 1 L10 10 M10 1 L1 10" stroke="#bdbdbd" stroke-width="1.4"/></svg>
<svg style="left:1149px;top:180px;" width="14" height="11" viewBox="0 0 14 11"><path d="M1 6 L5 10 L13 1" fill="none" stroke="#bdbdbd" stroke-width="1.6"/></svg>
<div style="top:173.5px;height:22px;line-height:22px;font-size:14.5px;color:#4a4a4a;white-space:nowrap;font-weight:bold;left:1186px;font-family:'Liberation Serif',serif;"><i>f</i><span style='font-size:10px;position:relative;top:1.5px;left:0.5px'><i>x</i></span></div>
<div style="left:1213px;top:172px;width:698px;height:26px;background:#ffffff;border:1px solid #d0d0d0;box-sizing:border-box;"></div>
<div style="top:175.7px;height:20px;line-height:20px;font-size:13.2px;color:#222;white-space:nowrap;left:1224.5px;transform:scaleX(0.95);transform-origin:0 50%;">2</div>
<svg style="left:1899px;top:182px;" width="9" height="6" viewBox="0 0 9 6"><path d="M1 1 L4.5 4.5 L8 1" fill="none" stroke="#555" stroke-width="1.4"/></svg>
<div style="left:962px;top:208px;width:956px;height:781px;overflow:hidden;background:#e6e6e6;"><div style="left:-962px;top:-208px;width:1920px;height:1080px;">
<div style="left:996px;top:228px;width:900px;height:800px;background:#ffffff;"></div>
<div style="left:996px;top:247px;width:900px;height:1px;background:#d4d4d4;"></div>
<div style="left:996px;top:267px;width:900px;height:1px;background:#d4d4d4;"></div>
<div style="left:996px;top:287px;width:900px;height:1px;background:#d4d4d4;"></div>
<div style="left:996px;top:307px;width:900px;height:1px;background:#d4d4d4;"></div>
<div style="left:996px;top:327px;width:900px;height:1px;background:#d4d4d4;"></div>
<div style="left:996px;top:347px;width:900px;height:1px;background:#d4d4d4;"></div>
<div style="left:996px;top:367px;width:900px;height:1px;background:#d4d4d4;"></div>
<div style="left:996px;top:387px;width:900px;height:1px;background:#d4d4d4;"></div>
<div style="left:996px;top:407px;width:900px;height:1px;background:#d4d4d4;"></div>
<div style="left:996px;top:427px;width:900px;height:1px;background:#d4d4d4;"></div>
<div style="left:996px;top:447px;width:900px;height:1px;background:#d4d4d4;"></div>
<div style="left:996px;top:467px;width:900px;height:1px;background:#d4d4d4;"></div>
<div style="left:996px;top:487px;width:900px;height:1px;background:#d4d4d4;"></div>
<div style="left:996px;top:507px;width:900px;height:1px;background:#d4d4d4;"></div>
<div style="left:996px;top:527px;width:900px;height:1px;background:#d4d4d4;"></div>
<div style="left:996px;top:547px;width:900px;height:1px;background:#d4d4d4;"></div>
<div style="left:996px;top:567px;width:900px;height:1px;background:#d4d4d4;"></div>
<div style="left:996px;top:587px;width:900px;height:1px;background:#d4d4d4;"></div>
<div style="left:996px;top:607px;width:900px;height:1px;background:#d4d4d4;"></div>
<div style="left:996px;top:627px;width:900px;height:1px;background:#d4d4d4;"></div>
<div style="left:996px;top:647px;width:900px;height:1px;background:#d4d4d4;"></div>
<div style="left:996px;top:667px;width:900px;height:1px;background:#d4d4d4;"></div>
<div style="left:996px;top:687px;width:900px;height:1px;background:#d4d4d4;"></div>
<div style="left:996px;top:707px;width:900px;height:1px;background:#d4d4d4;"></div>
<div style="left:996px;top:727px;width:900px;height:1px;background:#d4d4d4;"></div>
<div style="left:996px;top:747px;width:900px;height:1px;background:#d4d4d4;"></div>
<div style="left:996px;top:767px;width:900px;height:1px;background:#d4d4d4;"></div>
<div style="left:996px;top:787px;width:900px;height:1px;background:#d4d4d4;"></div>
<div style="left:996px;top:807px;width:900px;height:1px;background:#d4d4d4;"></div>
<div style="left:996px;top:827px;width:900px;height:1px;background:#d4d4d4;"></div>
<div style="left:996px;top:847px;width:900px;height:1px;background:#d4d4d4;"></div>
<div style="left:996px;top:867px;width:900px;height:1px;background:#d4d4d4;"></div>
<div style="left:996px;top:887px;width:900px;height:1px;background:#d4d4d4;"></div>
<div style="left:996px;top:907px;width:900px;height:1px;background:#d4d4d4;"></div>
<div style="left:996px;top:927px;width:900px;height:1px;background:#d4d4d4;"></div>
<div style="left:996px;top:947px;width:900px;height:1px;background:#d4d4d4;"></div>
<div style="left:996px;top:967px;width:900px;height:1px;background:#d4d4d4;"></div>
<div style="left:996px;top:987px;width:900px;height:1px;background:#d4d4d4;"></div>
<div style="left:1056px;top:228px;width:1px;height:800px;background:#d4d4d4;"></div>
<div style="left:1117px;top:228px;width:1px;height:800px;background:#d4d4d4;"></div>
<div style="left:1269px;top:228px;width:1px;height:800px;background:#d4d4d4;"></div>
<div style="left:1364px;top:228px;width:1px;height:800px;background:#d4d4d4;"></div>
<div style="left:1483px;top:228px;width:1px;height:800px;background:#d4d4d4;"></div>
<div style="left:1565px;top:228px;width:1px;height:800px;background:#d4d4d4;"></div>
<div style="left:1668px;top:228px;width:1px;height:800px;background:#d4d4d4;"></div>
<div style="left:1764px;top:228px;width:1px;height:800px;background:#d4d4d4;"></div>
<div style="left:1860px;top:228px;width:1px;height:800px;background:#d4d4d4;"></div>
<div style="left:1895px;top:228px;width:1px;height:800px;background:#d4d4d4;"></div>
<div style="left:995px;top:267px;width:901px;height:641px;background:#00b050;"></div>
<div style="top:248.5px;height:20px;line-height:20px;font-size:13.4px;color:#000;white-space:nowrap;left:998px;transform:scaleX(0.97);transform-origin:0 50%;">Masa</div>
<div style="top:248.5px;height:20px;line-height:20px;font-size:13.4px;color:#000;white-space:nowrap;left:1059px;transform:scaleX(0.97);transform-origin:0 50%;">Kode</div>
<div style="top:248.5px;height:20px;line-height:20px;font-size:13.4px;color:#000;white-space:nowrap;left:1120px;transform:scaleX(0.97);transform-origin:0 50%;">NAMA_PENJUAL</div>
<div style="top:248.5px;height:20px;line-height:20px;font-size:13.4px;color:#000;white-space:nowrap;left:1272px;transform:scaleX(0.97);transform-origin:0 50%;">NPWP</div>
<div style="top:248.5px;height:20px;line-height:20px;font-size:13.4px;color:#000;white-space:nowrap;left:1367px;transform:scaleX(0.97);transform-origin:0 50%;">NOMOR</div>
<div style="top:248.5px;height:20px;line-height:20px;font-size:13.4px;color:#000;white-space:nowrap;left:1486px;transform:scaleX(0.97);transform-origin:0 50%;">TANGGAL</div>
<div style="top:248.5px;height:20px;line-height:20px;font-size:13.4px;color:#000;white-space:nowrap;left:1573px;transform:scaleX(0.97);transform-origin:0 50%;">DPP</div>
<div style="top:248.5px;height:20px;line-height:20px;font-size:13.4px;color:#000;white-space:nowrap;left:1676px;transform:scaleX(0.97);transform-origin:0 50%;">PPN</div>
<div style="left:1861px;top:248px;width:35px;height:20px;overflow:hidden;"><div style="left:7px;top:0;font-size:13.4px;line-height:21px;color:#000;white-space:nowrap;">PPnBM</div></div>
<div style="left:1039px;top:249px;width:16px;height:16px;background:#fbfbfb;border:1px solid #a8a8a8;box-sizing:border-box;background:linear-gradient(#ffffff,#e9e9e9);"></div>
<svg style="left:1043px;top:255px;" width="8" height="5" viewBox="0 0 8 5"><path d="M0.5 0.5 H7.5 L4 4.5 Z" fill="#555"/></svg>
<div style="left:1100px;top:249px;width:16px;height:16px;background:#fbfbfb;border:1px solid #a8a8a8;box-sizing:border-box;background:linear-gradient(#ffffff,#e9e9e9);"></div>
<svg style="left:1104px;top:255px;" width="8" height="5" viewBox="0 0 8 5"><path d="M0.5 0.5 H7.5 L4 4.5 Z" fill="#555"/></svg>
<div style="left:1347px;top:249px;width:16px;height:16px;background:#fbfbfb;border:1px solid #a8a8a8;box-sizing:border-box;background:linear-gradient(#ffffff,#e9e9e9);"></div>
<svg style="left:1351px;top:255px;" width="8" height="5" viewBox="0 0 8 5"><path d="M0.5 0.5 H7.5 L4 4.5 Z" fill="#555"/></svg>
<div style="left:1466px;top:249px;width:16px;height:16px;background:#fbfbfb;border:1px solid #a8a8a8;box-sizing:border-box;background:linear-gradient(#ffffff,#e9e9e9);"></div>
<svg style="left:1470px;top:255px;" width="8" height="5" viewBox="0 0 8 5"><path d="M0.5 0.5 H7.5 L4 4.5 Z" fill="#555"/></svg>
<div style="left:1548px;top:249px;width:16px;height:16px;background:#fbfbfb;border:1px solid #a8a8a8;box-sizing:border-box;background:linear-gradient(#ffffff,#e9e9e9);"></div>
<svg style="left:1552px;top:255px;" width="8" height="5" viewBox="0 0 8 5"><path d="M0.5 0.5 H7.5 L4 4.5 Z" fill="#555"/></svg>
<div style="left:1651px;top:249px;width:16px;height:16px;background:#fbfbfb;border:1px solid #a8a8a8;box-sizing:border-box;background:linear-gradient(#ffffff,#e9e9e9);"></div>
<svg style="left:1655px;top:255px;" width="8" height="5" viewBox="0 0 8 5"><path d="M0.5 0.5 H7.5 L4 4.5 Z" fill="#555"/></svg>
<div style="left:1747px;top:249px;width:16px;height:16px;background:#fbfbfb;border:1px solid #a8a8a8;box-sizing:border-box;background:linear-gradient(#ffffff,#e9e9e9);"></div>
<svg style="left:1751px;top:255px;" width="8" height="5" viewBox="0 0 8 5"><path d="M0.5 0.5 H7.5 L4 4.5 Z" fill="#555"/></svg>
<div style="left:1843px;top:249px;width:16px;height:16px;background:#fbfbfb;border:1px solid #a8a8a8;box-sizing:border-box;background:linear-gradient(#ffffff,#e9e9e9);"></div>
<svg style="left:1847px;top:255px;" width="8" height="5" viewBox="0 0 8 5"><path d="M0.5 0.5 H7.5 L4 4.5 Z" fill="#555"/></svg>
<div style="left:1252px;top:249px;width:16px;height:16px;background:#fbfbfb;border:1px solid #a8a8a8;box-sizing:border-box;background:linear-gradient(#ffffff,#e9e9e9);"></div>
<svg style="left:1254px;top:252px;" width="13" height="11" viewBox="0 0 13 11"><path d="M4.4 0.6 H12.4 L9.4 4 V8.8 L7.4 7.6 V4 Z" fill="#555"/><path d="M0.4 5.6 H4.4 L2.4 8 Z" fill="#555"/></svg>
<div style="top:268.5px;height:20px;line-height:20px;font-size:13.4px;color:#03170a;white-space:nowrap;left:654px;width:400px;text-align:right;transform:scaleX(0.945);transform-origin:100% 50%;">1</div>
<div style="top:268.5px;height:20px;line-height:20px;font-size:13.4px;color:#03170a;white-space:nowrap;left:1059px;transform:scaleX(0.945);transform-origin:0 50%;">10</div>
<div style="left:1118px;top:268px;width:151px;height:20px;overflow:hidden;"><div style="left:2px;top:0;font-size:13.4px;line-height:21px;color:#03170a;white-space:nowrap;transform:scaleX(.912);transform-origin:0 50%;">PT SUBUR JAYA GEMILANG</div></div>
<div style="top:268.5px;height:20px;line-height:20px;font-size:13.4px;color:#03170a;white-space:nowrap;left:962px;width:400px;text-align:right;transform:scaleX(0.925);transform-origin:100% 50%;">7,00803E+14</div>
<div style="top:268.5px;height:20px;line-height:20px;font-size:13.4px;color:#03170a;white-space:nowrap;left:1081px;width:400px;text-align:right;transform:scaleX(0.945);transform-origin:100% 50%;">100012235093318</div>
<div style="top:268.5px;height:20px;line-height:20px;font-size:13.4px;color:#03170a;white-space:nowrap;left:1163px;width:400px;text-align:right;transform:scaleX(1.01);transform-origin:100% 50%;">11/01/2022</div>
<div style="top:268.5px;height:20px;line-height:20px;font-size:13.4px;color:#03170a;white-space:nowrap;left:1261px;width:400px;text-align:right;transform:scaleX(0.945);transform-origin:100% 50%;">8.029.868</div>
<div style="top:268.5px;height:20px;line-height:20px;font-size:13.4px;color:#03170a;white-space:nowrap;left:1357px;width:400px;text-align:right;transform:scaleX(0.945);transform-origin:100% 50%;">802.986</div>
<div style="top:268.5px;height:20px;line-height:20px;font-size:13.4px;color:#03170a;white-space:nowrap;left:1453px;width:400px;text-align:right;transform:scaleX(0.945);transform-origin:100% 50%;">8.832.854</div>
<div style="top:288.5px;height:20px;line-height:20px;font-size:13.4px;color:#03170a;white-space:nowrap;left:654px;width:400px;text-align:right;transform:scaleX(0.945);transform-origin:100% 50%;">1</div>
<div style="top:288.5px;height:20px;line-height:20px;font-size:13.4px;color:#03170a;white-space:nowrap;left:1059px;transform:scaleX(0.945);transform-origin:0 50%;">10</div>
<div style="left:1118px;top:288px;width:151px;height:20px;overflow:hidden;"><div style="left:2px;top:0;font-size:13.4px;line-height:21px;color:#03170a;white-space:nowrap;transform:scaleX(.912);transform-origin:0 50%;">PT SUBUR JAYA GEMILANG</div></div>
<div style="top:288.5px;height:20px;line-height:20px;font-size:13.4px;color:#03170a;white-space:nowrap;left:962px;width:400px;text-align:right;transform:scaleX(0.925);transform-origin:100% 50%;">7,00803E+14</div>
<div style="top:288.5px;height:20px;line-height:20px;font-size:13.4px;color:#03170a;white-space:nowrap;left:1081px;width:400px;text-align:right;transform:scaleX(0.945);transform-origin:100% 50%;">100012235093319</div>
<div style="top:288.5px;height:20px;line-height:20px;font-size:13.4px;color:#03170a;white-space:nowrap;left:1163px;width:400px;text-align:right;transform:scaleX(1.01);transform-origin:100% 50%;">20/01/2022</div>
<div style="top:288.5px;height:20px;line-height:20px;font-size:13.4px;color:#03170a;white-space:nowrap;left:1261px;width:400px;text-align:right;transform:scaleX(0.945);transform-origin:100% 50%;">4.761.846</div>
<div style="top:288.5px;height:20px;line-height:20px;font-size:13.4px;color:#03170a;white-space:nowrap;left:1357px;width:400px;text-align:right;transform:scaleX(0.945);transform-origin:100% 50%;">476.184</div>
<div style="top:288.5px;height:20px;line-height:20px;font-size:13.4px;color:#03170a;white-space:nowrap;left:1453px;width:400px;text-align:right;transform:scaleX(0.945);transform-origin:100% 50%;">5.238.030</div>
<div style="top:308.5px;height:20px;line-height:20px;font-size:13.4px;color:#03170a;white-space:nowrap;left:654px;width:400px;text-align:right;transform:scaleX(0.945);transform-origin:100% 50%;">2</div>
<div style="top:308.5px;height:20px;line-height:20px;font-size:13.4px;color:#03170a;white-space:nowrap;left:1059px;transform:scaleX(0.945);transform-origin:0 50%;">10</div>
<div style="left:1118px;top:308px;width:151px;height:20px;overflow:hidden;"><div style="left:2px;top:0;font-size:13.4px;line-height:21px;color:#03170a;white-space:nowrap;transform:scaleX(.912);transform-origin:0 50%;">PT SUBUR JAYA GEMILANG</div></div>
<div style="top:308.5px;height:20px;line-height:20px;font-size:13.4px;color:#03170a;white-space:nowrap;left:962px;width:400px;text-align:right;transform:scaleX(0.925);transform-origin:100% 50%;">7,00803E+14</div>
<div style="top:308.5px;height:20px;line-height:20px;font-size:13.4px;color:#03170a;white-space:nowrap;left:1081px;width:400px;text-align:right;transform:scaleX(0.945);transform-origin:100% 50%;">100012235131689</div>
<div style="top:308.5px;height:20px;line-height:20px;font-size:13.4px;color:#03170a;white-space:nowrap;left:1163px;width:400px;text-align:right;transform:scaleX(1.01);transform-origin:100% 50%;">04/02/2022</div>
<div style="top:308.5px;height:20px;line-height:20px;font-size:13.4px;color:#03170a;white-space:nowrap;left:1261px;width:400px;text-align:right;transform:scaleX(0.945);transform-origin:100% 50%;">8.563.710</div>
<div style="top:308.5px;height:20px;line-height:20px;font-size:13.4px;color:#03170a;white-space:nowrap;left:1357px;width:400px;text-align:right;transform:scaleX(0.945);transform-origin:100% 50%;">856.371</div>
<div style="top:308.5px;height:20px;line-height:20px;font-size:13.4px;color:#03170a;white-space:nowrap;left:1453px;width:400px;text-align:right;transform:scaleX(0.945);transform-origin:100% 50%;">9.420.081</div>
<div style="top:328.5px;height:20px;line-height:20px;font-size:13.4px;color:#03170a;white-space:nowrap;left:654px;width:400px;text-align:right;transform:scaleX(0.945);transform-origin:100% 50%;">2</div>
<div style="top:328.5px;height:20px;line-height:20px;font-size:13.4px;color:#03170a;white-space:nowrap;left:1059px;transform:scaleX(0.945);transform-origin:0 50%;">10</div>
<div style="left:1118px;top:328px;width:151px;height:20px;overflow:hidden;"><div style="left:2px;top:0;font-size:13.4px;line-height:21px;color:#03170a;white-space:nowrap;transform:scaleX(.912);transform-origin:0 50%;">PT SUBUR JAYA GEMILANG</div></div>
<div style="top:328.5px;height:20px;line-height:20px;font-size:13.4px;color:#03170a;white-space:nowrap;left:962px;width:400px;text-align:right;transform:scaleX(0.925);transform-origin:100% 50%;">7,00803E+14</div>
<div style="top:328.5px;height:20px;line-height:20px;font-size:13.4px;color:#03170a;white-space:nowrap;left:1081px;width:400px;text-align:right;transform:scaleX(0.945);transform-origin:100% 50%;">100012235132594</div>
<div style="top:328.5px;height:20px;line-height:20px;font-size:13.4px;color:#03170a;white-space:nowrap;left:1163px;width:400px;text-align:right;transform:scaleX(1.01);transform-origin:100% 50%;">16/02/2022</div>
<div style="top:328.5px;height:20px;line-height:20px;font-size:13.4px;color:#03170a;white-space:nowrap;left:1261px;width:400px;text-align:right;transform:scaleX(0.945);transform-origin:100% 50%;">97.513.902</div>
<div style="top:328.5px;height:20px;line-height:20px;font-size:13.4px;color:#03170a;white-space:nowrap;left:1357px;width:400px;text-align:right;transform:scaleX(0.945);transform-origin:100% 50%;">9.751.390</div>
<div style="top:328.5px;height:20px;line-height:20px;font-size:13.4px;color:#03170a;white-space:nowrap;left:1453px;width:400px;text-align:right;transform:scaleX(0.945);transform-origin:100% 50%;">107.265.292</div>
<div style="top:348.5px;height:20px;line-height:20px;font-size:13.4px;color:#03170a;white-space:nowrap;left:654px;width:400px;text-align:right;transform:scaleX(0.945);transform-origin:100% 50%;">2</div>
<div style="top:348.5px;height:20px;line-height:20px;font-size:13.4px;color:#03170a;white-space:nowrap;left:1059px;transform:scaleX(0.945);transform-origin:0 50%;">10</div>
<div style="left:1118px;top:348px;width:151px;height:20px;overflow:hidden;"><div style="left:2px;top:0;font-size:13.4px;line-height:21px;color:#03170a;white-space:nowrap;transform:scaleX(.912);transform-origin:0 50%;">PT SUBUR JAYA GEMILANG</div></div>
<div style="top:348.5px;height:20px;line-height:20px;font-size:13.4px;color:#03170a;white-space:nowrap;left:962px;width:400px;text-align:right;transform:scaleX(0.925);transform-origin:100% 50%;">7,00803E+14</div>
<div style="top:348.5px;height:20px;line-height:20px;font-size:13.4px;color:#03170a;white-space:nowrap;left:1081px;width:400px;text-align:right;transform:scaleX(0.945);transform-origin:100% 50%;">100012235132881</div>
<div style="top:348.5px;height:20px;line-height:20px;font-size:13.4px;color:#03170a;white-space:nowrap;left:1163px;width:400px;text-align:right;transform:scaleX(1.01);transform-origin:100% 50%;">22/02/2022</div>
<div style="top:348.5px;height:20px;line-height:20px;font-size:13.4px;color:#03170a;white-space:nowrap;left:1261px;width:400px;text-align:right;transform:scaleX(0.945);transform-origin:100% 50%;">13.499.733</div>
<div style="top:348.5px;height:20px;line-height:20px;font-size:13.4px;color:#03170a;white-space:nowrap;left:1357px;width:400px;text-align:right;transform:scaleX(0.945);transform-origin:100% 50%;">1.349.973</div>
<div style="top:348.5px;height:20px;line-height:20px;font-size:13.4px;color:#03170a;white-space:nowrap;left:1453px;width:400px;text-align:right;transform:scaleX(0.945);transform-origin:100% 50%;">14.849.706</div>
<div style="top:368.5px;height:20px;line-height:20px;font-size:13.4px;color:#03170a;white-space:nowrap;left:654px;width:400px;text-align:right;transform:scaleX(0.945);transform-origin:100% 50%;">2</div>
<div style="top:368.5px;height:20px;line-height:20px;font-size:13.4px;color:#03170a;white-space:nowrap;left:1059px;transform:scaleX(0.945);transform-origin:0 50%;">10</div>
<div style="left:1118px;top:368px;width:151px;height:20px;overflow:hidden;"><div style="left:2px;top:0;font-size:13.4px;line-height:21px;color:#03170a;white-space:nowrap;transform:scaleX(.912);transform-origin:0 50%;">PT SUBUR JAYA GEMILANG</div></div>
<div style="top:368.5px;height:20px;line-height:20px;font-size:13.4px;color:#03170a;white-space:nowrap;left:962px;width:400px;text-align:right;transform:scaleX(0.925);transform-origin:100% 50%;">7,00803E+14</div>
<div style="top:368.5px;height:20px;line-height:20px;font-size:13.4px;color:#03170a;white-space:nowrap;left:1081px;width:400px;text-align:right;transform:scaleX(0.945);transform-origin:100% 50%;">100012235133202</div>
<div style="top:368.5px;height:20px;line-height:20px;font-size:13.4px;color:#03170a;white-space:nowrap;left:1163px;width:400px;text-align:right;transform:scaleX(1.01);transform-origin:100% 50%;">25/02/2022</div>
<div style="top:368.5px;height:20px;line-height:20px;font-size:13.4px;color:#03170a;white-space:nowrap;left:1261px;width:400px;text-align:right;transform:scaleX(0.945);transform-origin:100% 50%;">11.546.184</div>
<div style="top:368.5px;height:20px;line-height:20px;font-size:13.4px;color:#03170a;white-space:nowrap;left:1357px;width:400px;text-align:right;transform:scaleX(0.945);transform-origin:100% 50%;">1.154.618</div>
<div style="top:368.5px;height:20px;line-height:20px;font-size:13.4px;color:#03170a;white-space:nowrap;left:1453px;width:400px;text-align:right;transform:scaleX(0.945);transform-origin:100% 50%;">12.700.802</div>
<div style="top:388.5px;height:20px;line-height:20px;font-size:13.4px;color:#03170a;white-space:nowrap;left:654px;width:400px;text-align:right;transform:scaleX(0.945);transform-origin:100% 50%;">3</div>
<div style="top:388.5px;height:20px;line-height:20px;font-size:13.4px;color:#03170a;white-space:nowrap;left:1059px;transform:scaleX(0.945);transform-origin:0 50%;">10</div>
<div style="left:1118px;top:388px;width:151px;height:20px;overflow:hidden;"><div style="left:2px;top:0;font-size:13.4px;line-height:21px;color:#03170a;white-space:nowrap;transform:scaleX(.912);transform-origin:0 50%;">PT SUBUR JAYA GEMILANG</div></div>
<div style="top:388.5px;height:20px;line-height:20px;font-size:13.4px;color:#03170a;white-space:nowrap;left:962px;width:400px;text-align:right;transform:scaleX(0.925);transform-origin:100% 50%;">7,00803E+14</div>
<div style="top:388.5px;height:20px;line-height:20px;font-size:13.4px;color:#03170a;white-space:nowrap;left:1081px;width:400px;text-align:right;transform:scaleX(0.945);transform-origin:100% 50%;">100012235169446</div>
<div style="top:388.5px;height:20px;line-height:20px;font-size:13.4px;color:#03170a;white-space:nowrap;left:1163px;width:400px;text-align:right;transform:scaleX(1.01);transform-origin:100% 50%;">02/03/2022</div>
<div style="top:388.5px;height:20px;line-height:20px;font-size:13.4px;color:#03170a;white-space:nowrap;left:1261px;width:400px;text-align:right;transform:scaleX(0.945);transform-origin:100% 50%;">4.679.920</div>
<div style="top:388.5px;height:20px;line-height:20px;font-size:13.4px;color:#03170a;white-space:nowrap;left:1357px;width:400px;text-align:right;transform:scaleX(0.945);transform-origin:100% 50%;">467.992</div>
<div style="top:388.5px;height:20px;line-height:20px;font-size:13.4px;color:#03170a;white-space:nowrap;left:1453px;width:400px;text-align:right;transform:scaleX(0.945);transform-origin:100% 50%;">5.147.912</div>
<div style="top:408.5px;height:20px;line-height:20px;font-size:13.4px;color:#03170a;white-space:nowrap;left:654px;width:400px;text-align:right;transform:scaleX(0.945);transform-origin:100% 50%;">4</div>
<div style="top:408.5px;height:20px;line-height:20px;font-size:13.4px;color:#03170a;white-space:nowrap;left:1059px;transform:scaleX(0.945);transform-origin:0 50%;">10</div>
<div style="left:1118px;top:408px;width:151px;height:20px;overflow:hidden;"><div style="left:2px;top:0;font-size:13.4px;line-height:21px;color:#03170a;white-space:nowrap;transform:scaleX(.912);transform-origin:0 50%;">PT SUBUR JAYA GEMILANG</div></div>
<div style="top:408.5px;height:20px;line-height:20px;font-size:13.4px;color:#03170a;white-space:nowrap;left:962px;width:400px;text-align:right;transform:scaleX(0.925);transform-origin:100% 50%;">7,00803E+14</div>
<div style="top:408.5px;height:20px;line-height:20px;font-size:13.4px;color:#03170a;white-space:nowrap;left:1081px;width:400px;text-align:right;transform:scaleX(0.945);transform-origin:100% 50%;">1,00042E+14</div>
<div style="top:408.5px;height:20px;line-height:20px;font-size:13.4px;color:#03170a;white-space:nowrap;left:1163px;width:400px;text-align:right;transform:scaleX(1.01);transform-origin:100% 50%;">16/04/2022</div>
<div style="top:408.5px;height:20px;line-height:20px;font-size:13.4px;color:#03170a;white-space:nowrap;left:1261px;width:400px;text-align:right;transform:scaleX(0.945);transform-origin:100% 50%;">7.020.692</div>
<div style="top:408.5px;height:20px;line-height:20px;font-size:13.4px;color:#03170a;white-space:nowrap;left:1357px;width:400px;text-align:right;transform:scaleX(0.945);transform-origin:100% 50%;">772.276</div>
<div style="top:408.5px;height:20px;line-height:20px;font-size:13.4px;color:#03170a;white-space:nowrap;left:1453px;width:400px;text-align:right;transform:scaleX(0.945);transform-origin:100% 50%;">7.792.968</div>
<div style="top:428.5px;height:20px;line-height:20px;font-size:13.4px;color:#03170a;white-space:nowrap;left:654px;width:400px;text-align:right;transform:scaleX(0.945);transform-origin:100% 50%;">4</div>
<div style="top:428.5px;height:20px;line-height:20px;font-size:13.4px;color:#03170a;white-space:nowrap;left:1059px;transform:scaleX(0.945);transform-origin:0 50%;">10</div>
<div style="left:1118px;top:428px;width:151px;height:20px;overflow:hidden;"><div style="left:2px;top:0;font-size:13.4px;line-height:21px;color:#03170a;white-space:nowrap;transform:scaleX(.912);transform-origin:0 50%;">PT SUBUR JAYA GEMILANG</div></div>
<div style="top:428.5px;height:20px;line-height:20px;font-size:13.4px;color:#03170a;white-space:nowrap;left:962px;width:400px;text-align:right;transform:scaleX(0.925);transform-origin:100% 50%;">7,00803E+14</div>
<div style="top:428.5px;height:20px;line-height:20px;font-size:13.4px;color:#03170a;white-space:nowrap;left:1081px;width:400px;text-align:right;transform:scaleX(0.945);transform-origin:100% 50%;">1,00042E+14</div>
<div style="top:428.5px;height:20px;line-height:20px;font-size:13.4px;color:#03170a;white-space:nowrap;left:1163px;width:400px;text-align:right;transform:scaleX(1.01);transform-origin:100% 50%;">18/04/2022</div>
<div style="top:428.5px;height:20px;line-height:20px;font-size:13.4px;color:#03170a;white-space:nowrap;left:1261px;width:400px;text-align:right;transform:scaleX(0.945);transform-origin:100% 50%;">30.637.997</div>
<div style="top:428.5px;height:20px;line-height:20px;font-size:13.4px;color:#03170a;white-space:nowrap;left:1357px;width:400px;text-align:right;transform:scaleX(0.945);transform-origin:100% 50%;">3.370.179</div>
<div style="top:428.5px;height:20px;line-height:20px;font-size:13.4px;color:#03170a;white-space:nowrap;left:1453px;width:400px;text-align:right;transform:scaleX(0.945);transform-origin:100% 50%;">34.008.176</div>
<div style="top:448.5px;height:20px;line-height:20px;font-size:13.4px;color:#03170a;white-space:nowrap;left:654px;width:400px;text-align:right;transform:scaleX(0.945);transform-origin:100% 50%;">5</div>
<div style="top:448.5px;height:20px;line-height:20px;font-size:13.4px;color:#03170a;white-space:nowrap;left:1059px;transform:scaleX(0.945);transform-origin:0 50%;">10</div>
<div style="left:1118px;top:448px;width:151px;height:20px;overflow:hidden;"><div style="left:2px;top:0;font-size:13.4px;line-height:21px;color:#03170a;white-space:nowrap;transform:scaleX(.912);transform-origin:0 50%;">PT SUBUR JAYA GEMILANG</div></div>
<div style="top:448.5px;height:20px;line-height:20px;font-size:13.4px;color:#03170a;white-space:nowrap;left:962px;width:400px;text-align:right;transform:scaleX(0.925);transform-origin:100% 50%;">7,00803E+14</div>
<div style="top:448.5px;height:20px;line-height:20px;font-size:13.4px;color:#03170a;white-space:nowrap;left:1081px;width:400px;text-align:right;transform:scaleX(0.945);transform-origin:100% 50%;">100042244898987</div>
<div style="top:448.5px;height:20px;line-height:20px;font-size:13.4px;color:#03170a;white-space:nowrap;left:1163px;width:400px;text-align:right;transform:scaleX(1.01);transform-origin:100% 50%;">17/05/2022</div>
<div style="top:448.5px;height:20px;line-height:20px;font-size:13.4px;color:#03170a;white-space:nowrap;left:1261px;width:400px;text-align:right;transform:scaleX(0.945);transform-origin:100% 50%;">10.263.667</div>
<div style="top:448.5px;height:20px;line-height:20px;font-size:13.4px;color:#03170a;white-space:nowrap;left:1357px;width:400px;text-align:right;transform:scaleX(0.945);transform-origin:100% 50%;">1.129.003</div>
<div style="top:448.5px;height:20px;line-height:20px;font-size:13.4px;color:#03170a;white-space:nowrap;left:1453px;width:400px;text-align:right;transform:scaleX(0.945);transform-origin:100% 50%;">11.392.670</div>
<div style="top:468.5px;height:20px;line-height:20px;font-size:13.4px;color:#03170a;white-space:nowrap;left:654px;width:400px;text-align:right;transform:scaleX(0.945);transform-origin:100% 50%;">6</div>
<div style="top:468.5px;height:20px;line-height:20px;font-size:13.4px;color:#03170a;white-space:nowrap;left:1059px;transform:scaleX(0.945);transform-origin:0 50%;">10</div>
<div style="left:1118px;top:468px;width:151px;height:20px;overflow:hidden;"><div style="left:2px;top:0;font-size:13.4px;line-height:21px;color:#03170a;white-space:nowrap;transform:scaleX(.912);transform-origin:0 50%;">PT SUBUR JAYA GEMILANG</div></div>
<div style="top:468.5px;height:20px;line-height:20px;font-size:13.4px;color:#03170a;white-space:nowrap;left:962px;width:400px;text-align:right;transform:scaleX(0.925);transform-origin:100% 50%;">7,00803E+14</div>
<div style="top:468.5px;height:20px;line-height:20px;font-size:13.4px;color:#03170a;white-space:nowrap;left:1081px;width:400px;text-align:right;transform:scaleX(0.945);transform-origin:100% 50%;">100062262495864</div>
<div style="top:468.5px;height:20px;line-height:20px;font-size:13.4px;color:#03170a;white-space:nowrap;left:1163px;width:400px;text-align:right;transform:scaleX(1.01);transform-origin:100% 50%;">09/06/2022</div>
<div style="top:468.5px;height:20px;line-height:20px;font-size:13.4px;color:#03170a;white-space:nowrap;left:1261px;width:400px;text-align:right;transform:scaleX(0.945);transform-origin:100% 50%;">111.273</div>
<div style="top:468.5px;height:20px;line-height:20px;font-size:13.4px;color:#03170a;white-space:nowrap;left:1357px;width:400px;text-align:right;transform:scaleX(0.945);transform-origin:100% 50%;">12.240</div>
<div style="top:468.5px;height:20px;line-height:20px;font-size:13.4px;color:#03170a;white-space:nowrap;left:1453px;width:400px;text-align:right;transform:scaleX(0.945);transform-origin:100% 50%;">123.513</div>
<div style="top:488.5px;height:20px;line-height:20px;font-size:13.4px;color:#03170a;white-space:nowrap;left:654px;width:400px;text-align:right;transform:scaleX(0.945);transform-origin:100% 50%;">6</div>
<div style="top:488.5px;height:20px;line-height:20px;font-size:13.4px;color:#03170a;white-space:nowrap;left:1059px;transform:scaleX(0.945);transform-origin:0 50%;">10</div>
<div style="left:1118px;top:488px;width:151px;height:20px;overflow:hidden;"><div style="left:2px;top:0;font-size:13.4px;line-height:21px;color:#03170a;white-space:nowrap;transform:scaleX(.912);transform-origin:0 50%;">PT SUBUR JAYA GEMILANG</div></div>
<div style="top:488.5px;height:20px;line-height:20px;font-size:13.4px;color:#03170a;white-space:nowrap;left:962px;width:400px;text-align:right;transform:scaleX(0.925);transform-origin:100% 50%;">7,00803E+14</div>
<div style="top:488.5px;height:20px;line-height:20px;font-size:13.4px;color:#03170a;white-space:nowrap;left:1081px;width:400px;text-align:right;transform:scaleX(0.945);transform-origin:100% 50%;">100062262494951</div>
<div style="top:488.5px;height:20px;line-height:20px;font-size:13.4px;color:#03170a;white-space:nowrap;left:1163px;width:400px;text-align:right;transform:scaleX(1.01);transform-origin:100% 50%;">06/06/2022</div>
<div style="top:488.5px;height:20px;line-height:20px;font-size:13.4px;color:#03170a;white-space:nowrap;left:1261px;width:400px;text-align:right;transform:scaleX(0.945);transform-origin:100% 50%;">17.724.505</div>
<div style="top:488.5px;height:20px;line-height:20px;font-size:13.4px;color:#03170a;white-space:nowrap;left:1357px;width:400px;text-align:right;transform:scaleX(0.945);transform-origin:100% 50%;">1.949.695</div>
<div style="top:488.5px;height:20px;line-height:20px;font-size:13.4px;color:#03170a;white-space:nowrap;left:1453px;width:400px;text-align:right;transform:scaleX(0.945);transform-origin:100% 50%;">19.674.200</div>
<div style="top:508.5px;height:20px;line-height:20px;font-size:13.4px;color:#03170a;white-space:nowrap;left:654px;width:400px;text-align:right;transform:scaleX(0.945);transform-origin:100% 50%;">7</div>
<div style="top:508.5px;height:20px;line-height:20px;font-size:13.4px;color:#03170a;white-space:nowrap;left:1059px;transform:scaleX(0.945);transform-origin:0 50%;">10</div>
<div style="left:1118px;top:508px;width:151px;height:20px;overflow:hidden;"><div style="left:2px;top:0;font-size:13.4px;line-height:21px;color:#03170a;white-space:nowrap;transform:scaleX(.912);transform-origin:0 50%;">PT SUBUR JAYA GEMILANG</div></div>
<div style="top:508.5px;height:20px;line-height:20px;font-size:13.4px;color:#03170a;white-space:nowrap;left:962px;width:400px;text-align:right;transform:scaleX(0.925);transform-origin:100% 50%;">7,00803E+14</div>
<div style="top:508.5px;height:20px;line-height:20px;font-size:13.4px;color:#03170a;white-space:nowrap;left:1081px;width:400px;text-align:right;transform:scaleX(0.945);transform-origin:100% 50%;">100062262537517</div>
<div style="top:508.5px;height:20px;line-height:20px;font-size:13.4px;color:#03170a;white-space:nowrap;left:1163px;width:400px;text-align:right;transform:scaleX(1.01);transform-origin:100% 50%;">07/07/2022</div>
<div style="top:508.5px;height:20px;line-height:20px;font-size:13.4px;color:#03170a;white-space:nowrap;left:1261px;width:400px;text-align:right;transform:scaleX(0.945);transform-origin:100% 50%;">2.086.000</div>
<div style="top:508.5px;height:20px;line-height:20px;font-size:13.4px;color:#03170a;white-space:nowrap;left:1357px;width:400px;text-align:right;transform:scaleX(0.945);transform-origin:100% 50%;">229.460</div>
<div style="top:508.5px;height:20px;line-height:20px;font-size:13.4px;color:#03170a;white-space:nowrap;left:1453px;width:400px;text-align:right;transform:scaleX(0.945);transform-origin:100% 50%;">2.315.460</div>
<div style="top:528.5px;height:20px;line-height:20px;font-size:13.4px;color:#03170a;white-space:nowrap;left:654px;width:400px;text-align:right;transform:scaleX(0.945);transform-origin:100% 50%;">7</div>
<div style="top:528.5px;height:20px;line-height:20px;font-size:13.4px;color:#03170a;white-space:nowrap;left:1059px;transform:scaleX(0.945);transform-origin:0 50%;">10</div>
<div style="left:1118px;top:528px;width:151px;height:20px;overflow:hidden;"><div style="left:2px;top:0;font-size:13.4px;line-height:21px;color:#03170a;white-space:nowrap;transform:scaleX(.912);transform-origin:0 50%;">PT SUBUR JAYA GEMILANG</div></div>
<div style="top:528.5px;height:20px;line-height:20px;font-size:13.4px;color:#03170a;white-space:nowrap;left:962px;width:400px;text-align:right;transform:scaleX(0.925);transform-origin:100% 50%;">7,00803E+14</div>
<div style="top:528.5px;height:20px;line-height:20px;font-size:13.4px;color:#03170a;white-space:nowrap;left:1081px;width:400px;text-align:right;transform:scaleX(0.945);transform-origin:100% 50%;">100072255414848</div>
<div style="top:528.5px;height:20px;line-height:20px;font-size:13.4px;color:#03170a;white-space:nowrap;left:1163px;width:400px;text-align:right;transform:scaleX(1.01);transform-origin:100% 50%;">27/07/2022</div>
<div style="top:528.5px;height:20px;line-height:20px;font-size:13.4px;color:#03170a;white-space:nowrap;left:1261px;width:400px;text-align:right;transform:scaleX(0.945);transform-origin:100% 50%;">19.441.920</div>
<div style="top:528.5px;height:20px;line-height:20px;font-size:13.4px;color:#03170a;white-space:nowrap;left:1357px;width:400px;text-align:right;transform:scaleX(0.945);transform-origin:100% 50%;">2.138.611</div>
<div style="top:528.5px;height:20px;line-height:20px;font-size:13.4px;color:#03170a;white-space:nowrap;left:1453px;width:400px;text-align:right;transform:scaleX(0.945);transform-origin:100% 50%;">21.580.531</div>
<div style="top:548.5px;height:20px;line-height:20px;font-size:13.4px;color:#03170a;white-space:nowrap;left:654px;width:400px;text-align:right;transform:scaleX(0.945);transform-origin:100% 50%;">7</div>
<div style="top:548.5px;height:20px;line-height:20px;font-size:13.4px;color:#03170a;white-space:nowrap;left:1059px;transform:scaleX(0.945);transform-origin:0 50%;">10</div>
<div style="left:1118px;top:548px;width:151px;height:20px;overflow:hidden;"><div style="left:2px;top:0;font-size:13.4px;line-height:21px;color:#03170a;white-space:nowrap;transform:scaleX(.912);transform-origin:0 50%;">PT SUBUR JAYA GEMILANG</div></div>
<div style="top:548.5px;height:20px;line-height:20px;font-size:13.4px;color:#03170a;white-space:nowrap;left:962px;width:400px;text-align:right;transform:scaleX(0.925);transform-origin:100% 50%;">7,00803E+14</div>
<div style="top:548.5px;height:20px;line-height:20px;font-size:13.4px;color:#03170a;white-space:nowrap;left:1081px;width:400px;text-align:right;transform:scaleX(0.945);transform-origin:100% 50%;">100072255413349</div>
<div style="top:548.5px;height:20px;line-height:20px;font-size:13.4px;color:#03170a;white-space:nowrap;left:1163px;width:400px;text-align:right;transform:scaleX(1.01);transform-origin:100% 50%;">08/07/2022</div>
<div style="top:548.5px;height:20px;line-height:20px;font-size:13.4px;color:#03170a;white-space:nowrap;left:1261px;width:400px;text-align:right;transform:scaleX(0.945);transform-origin:100% 50%;">15.281.171</div>
<div style="top:548.5px;height:20px;line-height:20px;font-size:13.4px;color:#03170a;white-space:nowrap;left:1357px;width:400px;text-align:right;transform:scaleX(0.945);transform-origin:100% 50%;">1.680.928</div>
<div style="top:548.5px;height:20px;line-height:20px;font-size:13.4px;color:#03170a;white-space:nowrap;left:1453px;width:400px;text-align:right;transform:scaleX(0.945);transform-origin:100% 50%;">16.962.099</div>
<div style="top:568.5px;height:20px;line-height:20px;font-size:13.4px;color:#03170a;white-space:nowrap;left:654px;width:400px;text-align:right;transform:scaleX(0.945);transform-origin:100% 50%;">7</div>
<div style="top:568.5px;height:20px;line-height:20px;font-size:13.4px;color:#03170a;white-space:nowrap;left:1059px;transform:scaleX(0.945);transform-origin:0 50%;">10</div>
<div style="left:1118px;top:568px;width:151px;height:20px;overflow:hidden;"><div style="left:2px;top:0;font-size:13.4px;line-height:21px;color:#03170a;white-space:nowrap;transform:scaleX(.912);transform-origin:0 50%;">PT SUBUR JAYA GEMILANG</div></div>
<div style="top:568.5px;height:20px;line-height:20px;font-size:13.4px;color:#03170a;white-space:nowrap;left:962px;width:400px;text-align:right;transform:scaleX(0.925);transform-origin:100% 50%;">7,00803E+14</div>
<div style="top:568.5px;height:20px;line-height:20px;font-size:13.4px;color:#03170a;white-space:nowrap;left:1081px;width:400px;text-align:right;transform:scaleX(0.945);transform-origin:100% 50%;">100072255413383</div>
<div style="top:568.5px;height:20px;line-height:20px;font-size:13.4px;color:#03170a;white-space:nowrap;left:1163px;width:400px;text-align:right;transform:scaleX(1.01);transform-origin:100% 50%;">11/07/2022</div>
<div style="top:568.5px;height:20px;line-height:20px;font-size:13.4px;color:#03170a;white-space:nowrap;left:1261px;width:400px;text-align:right;transform:scaleX(0.945);transform-origin:100% 50%;">1.198.702</div>
<div style="top:568.5px;height:20px;line-height:20px;font-size:13.4px;color:#03170a;white-space:nowrap;left:1357px;width:400px;text-align:right;transform:scaleX(0.945);transform-origin:100% 50%;">131.857</div>
<div style="top:568.5px;height:20px;line-height:20px;font-size:13.4px;color:#03170a;white-space:nowrap;left:1453px;width:400px;text-align:right;transform:scaleX(0.945);transform-origin:100% 50%;">1.330.559</div>
<div style="top:588.5px;height:20px;line-height:20px;font-size:13.4px;color:#03170a;white-space:nowrap;left:654px;width:400px;text-align:right;transform:scaleX(0.945);transform-origin:100% 50%;">7</div>
<div style="top:588.5px;height:20px;line-height:20px;font-size:13.4px;color:#03170a;white-space:nowrap;left:1059px;transform:scaleX(0.945);transform-origin:0 50%;">10</div>
<div style="left:1118px;top:588px;width:151px;height:20px;overflow:hidden;"><div style="left:2px;top:0;font-size:13.4px;line-height:21px;color:#03170a;white-space:nowrap;transform:scaleX(.912);transform-origin:0 50%;">PT SUBUR JAYA GEMILANG</div></div>
<div style="top:588.5px;height:20px;line-height:20px;font-size:13.4px;color:#03170a;white-space:nowrap;left:962px;width:400px;text-align:right;transform:scaleX(0.925);transform-origin:100% 50%;">7,00803E+14</div>
<div style="top:588.5px;height:20px;line-height:20px;font-size:13.4px;color:#03170a;white-space:nowrap;left:1081px;width:400px;text-align:right;transform:scaleX(0.945);transform-origin:100% 50%;">100062262537369</div>
<div style="top:588.5px;height:20px;line-height:20px;font-size:13.4px;color:#03170a;white-space:nowrap;left:1163px;width:400px;text-align:right;transform:scaleX(1.01);transform-origin:100% 50%;">04/07/2022</div>
<div style="top:588.5px;height:20px;line-height:20px;font-size:13.4px;color:#03170a;white-space:nowrap;left:1261px;width:400px;text-align:right;transform:scaleX(0.945);transform-origin:100% 50%;">7.010.382</div>
<div style="top:588.5px;height:20px;line-height:20px;font-size:13.4px;color:#03170a;white-space:nowrap;left:1357px;width:400px;text-align:right;transform:scaleX(0.945);transform-origin:100% 50%;">771.142</div>
<div style="top:588.5px;height:20px;line-height:20px;font-size:13.4px;color:#03170a;white-space:nowrap;left:1453px;width:400px;text-align:right;transform:scaleX(0.945);transform-origin:100% 50%;">7.781.524</div>
<div style="top:608.5px;height:20px;line-height:20px;font-size:13.4px;color:#03170a;white-space:nowrap;left:654px;width:400px;text-align:right;transform:scaleX(0.945);transform-origin:100% 50%;">8</div>
<div style="top:608.5px;height:20px;line-height:20px;font-size:13.4px;color:#03170a;white-space:nowrap;left:1059px;transform:scaleX(0.945);transform-origin:0 50%;">10</div>
<div style="left:1118px;top:608px;width:151px;height:20px;overflow:hidden;"><div style="left:2px;top:0;font-size:13.4px;line-height:21px;color:#03170a;white-space:nowrap;transform:scaleX(.912);transform-origin:0 50%;">PT SUBUR JAYA GEMILANG</div></div>
<div style="top:608.5px;height:20px;line-height:20px;font-size:13.4px;color:#03170a;white-space:nowrap;left:962px;width:400px;text-align:right;transform:scaleX(0.925);transform-origin:100% 50%;">7,00803E+14</div>
<div style="top:608.5px;height:20px;line-height:20px;font-size:13.4px;color:#03170a;white-space:nowrap;left:1081px;width:400px;text-align:right;transform:scaleX(0.945);transform-origin:100% 50%;">100072255455882</div>
<div style="top:608.5px;height:20px;line-height:20px;font-size:13.4px;color:#03170a;white-space:nowrap;left:1163px;width:400px;text-align:right;transform:scaleX(1.01);transform-origin:100% 50%;">02/08/2022</div>
<div style="top:608.5px;height:20px;line-height:20px;font-size:13.4px;color:#03170a;white-space:nowrap;left:1261px;width:400px;text-align:right;transform:scaleX(0.945);transform-origin:100% 50%;">28.791.715</div>
<div style="top:608.5px;height:20px;line-height:20px;font-size:13.4px;color:#03170a;white-space:nowrap;left:1357px;width:400px;text-align:right;transform:scaleX(0.945);transform-origin:100% 50%;">3.167.088</div>
<div style="top:608.5px;height:20px;line-height:20px;font-size:13.4px;color:#03170a;white-space:nowrap;left:1453px;width:400px;text-align:right;transform:scaleX(0.945);transform-origin:100% 50%;">31.958.803</div>
<div style="top:628.5px;height:20px;line-height:20px;font-size:13.4px;color:#03170a;white-space:nowrap;left:654px;width:400px;text-align:right;transform:scaleX(0.945);transform-origin:100% 50%;">8</div>
<div style="top:628.5px;height:20px;line-height:20px;font-size:13.4px;color:#03170a;white-space:nowrap;left:1059px;transform:scaleX(0.945);transform-origin:0 50%;">10</div>
<div style="left:1118px;top:628px;width:151px;height:20px;overflow:hidden;"><div style="left:2px;top:0;font-size:13.4px;line-height:21px;color:#03170a;white-space:nowrap;transform:scaleX(.912);transform-origin:0 50%;">PT SUBUR JAYA GEMILANG</div></div>
<div style="top:628.5px;height:20px;line-height:20px;font-size:13.4px;color:#03170a;white-space:nowrap;left:962px;width:400px;text-align:right;transform:scaleX(0.925);transform-origin:100% 50%;">7,00803E+14</div>
<div style="top:628.5px;height:20px;line-height:20px;font-size:13.4px;color:#03170a;white-space:nowrap;left:1081px;width:400px;text-align:right;transform:scaleX(0.945);transform-origin:100% 50%;">100072255456637</div>
<div style="top:628.5px;height:20px;line-height:20px;font-size:13.4px;color:#03170a;white-space:nowrap;left:1163px;width:400px;text-align:right;transform:scaleX(1.01);transform-origin:100% 50%;">25/08/2022</div>
<div style="top:628.5px;height:20px;line-height:20px;font-size:13.4px;color:#03170a;white-space:nowrap;left:1261px;width:400px;text-align:right;transform:scaleX(0.945);transform-origin:100% 50%;">9.211.314</div>
<div style="top:628.5px;height:20px;line-height:20px;font-size:13.4px;color:#03170a;white-space:nowrap;left:1357px;width:400px;text-align:right;transform:scaleX(0.945);transform-origin:100% 50%;">1.013.244</div>
<div style="top:628.5px;height:20px;line-height:20px;font-size:13.4px;color:#03170a;white-space:nowrap;left:1453px;width:400px;text-align:right;transform:scaleX(0.945);transform-origin:100% 50%;">10.224.558</div>
<div style="top:648.5px;height:20px;line-height:20px;font-size:13.4px;color:#03170a;white-space:nowrap;left:654px;width:400px;text-align:right;transform:scaleX(0.945);transform-origin:100% 50%;">8</div>
<div style="top:648.5px;height:20px;line-height:20px;font-size:13.4px;color:#03170a;white-space:nowrap;left:1059px;transform:scaleX(0.945);transform-origin:0 50%;">10</div>
<div style="left:1118px;top:648px;width:151px;height:20px;overflow:hidden;"><div style="left:2px;top:0;font-size:13.4px;line-height:21px;color:#03170a;white-space:nowrap;transform:scaleX(.912);transform-origin:0 50%;">PT SUBUR JAYA GEMILANG</div></div>
<div style="top:648.5px;height:20px;line-height:20px;font-size:13.4px;color:#03170a;white-space:nowrap;left:962px;width:400px;text-align:right;transform:scaleX(0.925);transform-origin:100% 50%;">7,00803E+14</div>
<div style="top:648.5px;height:20px;line-height:20px;font-size:13.4px;color:#03170a;white-space:nowrap;left:1081px;width:400px;text-align:right;transform:scaleX(0.945);transform-origin:100% 50%;">100072255456636</div>
<div style="top:648.5px;height:20px;line-height:20px;font-size:13.4px;color:#03170a;white-space:nowrap;left:1163px;width:400px;text-align:right;transform:scaleX(1.01);transform-origin:100% 50%;">24/08/2022</div>
<div style="top:648.5px;height:20px;line-height:20px;font-size:13.4px;color:#03170a;white-space:nowrap;left:1261px;width:400px;text-align:right;transform:scaleX(0.945);transform-origin:100% 50%;">33.696.009</div>
<div style="top:648.5px;height:20px;line-height:20px;font-size:13.4px;color:#03170a;white-space:nowrap;left:1357px;width:400px;text-align:right;transform:scaleX(0.945);transform-origin:100% 50%;">3.706.560</div>
<div style="top:648.5px;height:20px;line-height:20px;font-size:13.4px;color:#03170a;white-space:nowrap;left:1453px;width:400px;text-align:right;transform:scaleX(0.945);transform-origin:100% 50%;">37.402.569</div>
<div style="top:668.5px;height:20px;line-height:20px;font-size:13.4px;color:#03170a;white-space:nowrap;left:654px;width:400px;text-align:right;transform:scaleX(0.945);transform-origin:100% 50%;">9</div>
<div style="top:668.5px;height:20px;line-height:20px;font-size:13.4px;color:#03170a;white-space:nowrap;left:1059px;transform:scaleX(0.945);transform-origin:0 50%;">10</div>
<div style="left:1118px;top:668px;width:151px;height:20px;overflow:hidden;"><div style="left:2px;top:0;font-size:13.4px;line-height:21px;color:#03170a;white-space:nowrap;transform:scaleX(.912);transform-origin:0 50%;">PT SUBUR JAYA GEMILANG</div></div>
<div style="top:668.5px;height:20px;line-height:20px;font-size:13.4px;color:#03170a;white-space:nowrap;left:962px;width:400px;text-align:right;transform:scaleX(0.925);transform-origin:100% 50%;">7,00803E+14</div>
<div style="top:668.5px;height:20px;line-height:20px;font-size:13.4px;color:#03170a;white-space:nowrap;left:1081px;width:400px;text-align:right;transform:scaleX(0.945);transform-origin:100% 50%;">100082261375617</div>
<div style="top:668.5px;height:20px;line-height:20px;font-size:13.4px;color:#03170a;white-space:nowrap;left:1163px;width:400px;text-align:right;transform:scaleX(1.01);transform-origin:100% 50%;">14/09/2022</div>
<div style="top:668.5px;height:20px;line-height:20px;font-size:13.4px;color:#03170a;white-space:nowrap;left:1261px;width:400px;text-align:right;transform:scaleX(0.945);transform-origin:100% 50%;">12.796.318</div>
<div style="top:668.5px;height:20px;line-height:20px;font-size:13.4px;color:#03170a;white-space:nowrap;left:1357px;width:400px;text-align:right;transform:scaleX(0.945);transform-origin:100% 50%;">1.407.594</div>
<div style="top:668.5px;height:20px;line-height:20px;font-size:13.4px;color:#03170a;white-space:nowrap;left:1453px;width:400px;text-align:right;transform:scaleX(0.945);transform-origin:100% 50%;">14.203.912</div>
<div style="top:688.5px;height:20px;line-height:20px;font-size:13.4px;color:#03170a;white-space:nowrap;left:654px;width:400px;text-align:right;transform:scaleX(0.945);transform-origin:100% 50%;">9</div>
<div style="top:688.5px;height:20px;line-height:20px;font-size:13.4px;color:#03170a;white-space:nowrap;left:1059px;transform:scaleX(0.945);transform-origin:0 50%;">10</div>
<div style="left:1118px;top:688px;width:151px;height:20px;overflow:hidden;"><div style="left:2px;top:0;font-size:13.4px;line-height:21px;color:#03170a;white-space:nowrap;transform:scaleX(.912);transform-origin:0 50%;">PT SUBUR JAYA GEMILANG</div></div>
<div style="top:688.5px;height:20px;line-height:20px;font-size:13.4px;color:#03170a;white-space:nowrap;left:962px;width:400px;text-align:right;transform:scaleX(0.925);transform-origin:100% 50%;">7,00803E+14</div>
<div style="top:688.5px;height:20px;line-height:20px;font-size:13.4px;color:#03170a;white-space:nowrap;left:1081px;width:400px;text-align:right;transform:scaleX(0.945);transform-origin:100% 50%;">100082261376258</div>
<div style="top:688.5px;height:20px;line-height:20px;font-size:13.4px;color:#03170a;white-space:nowrap;left:1163px;width:400px;text-align:right;transform:scaleX(1.01);transform-origin:100% 50%;">15/09/2022</div>
<div style="top:688.5px;height:20px;line-height:20px;font-size:13.4px;color:#03170a;white-space:nowrap;left:1261px;width:400px;text-align:right;transform:scaleX(0.945);transform-origin:100% 50%;">4.172.000</div>
<div style="top:688.5px;height:20px;line-height:20px;font-size:13.4px;color:#03170a;white-space:nowrap;left:1357px;width:400px;text-align:right;transform:scaleX(0.945);transform-origin:100% 50%;">458.920</div>
<div style="top:688.5px;height:20px;line-height:20px;font-size:13.4px;color:#03170a;white-space:nowrap;left:1453px;width:400px;text-align:right;transform:scaleX(0.945);transform-origin:100% 50%;">4.630.920</div>
<div style="top:708.5px;height:20px;line-height:20px;font-size:13.4px;color:#03170a;white-space:nowrap;left:654px;width:400px;text-align:right;transform:scaleX(0.945);transform-origin:100% 50%;">9</div>
<div style="top:708.5px;height:20px;line-height:20px;font-size:13.4px;color:#03170a;white-space:nowrap;left:1059px;transform:scaleX(0.945);transform-origin:0 50%;">10</div>
<div style="left:1118px;top:708px;width:151px;height:20px;overflow:hidden;"><div style="left:2px;top:0;font-size:13.4px;line-height:21px;color:#03170a;white-space:nowrap;transform:scaleX(.912);transform-origin:0 50%;">PT SUBUR JAYA GEMILANG</div></div>
<div style="top:708.5px;height:20px;line-height:20px;font-size:13.4px;color:#03170a;white-space:nowrap;left:962px;width:400px;text-align:right;transform:scaleX(0.925);transform-origin:100% 50%;">7,00803E+14</div>
<div style="top:708.5px;height:20px;line-height:20px;font-size:13.4px;color:#03170a;white-space:nowrap;left:1081px;width:400px;text-align:right;transform:scaleX(0.945);transform-origin:100% 50%;">100082261377192</div>
<div style="top:708.5px;height:20px;line-height:20px;font-size:13.4px;color:#03170a;white-space:nowrap;left:1163px;width:400px;text-align:right;transform:scaleX(1.01);transform-origin:100% 50%;">29/09/2022</div>
<div style="top:708.5px;height:20px;line-height:20px;font-size:13.4px;color:#03170a;white-space:nowrap;left:1261px;width:400px;text-align:right;transform:scaleX(0.945);transform-origin:100% 50%;">22.968.592</div>
<div style="top:708.5px;height:20px;line-height:20px;font-size:13.4px;color:#03170a;white-space:nowrap;left:1357px;width:400px;text-align:right;transform:scaleX(0.945);transform-origin:100% 50%;">2.526.545</div>
<div style="top:708.5px;height:20px;line-height:20px;font-size:13.4px;color:#03170a;white-space:nowrap;left:1453px;width:400px;text-align:right;transform:scaleX(0.945);transform-origin:100% 50%;">25.495.137</div>
<div style="top:728.5px;height:20px;line-height:20px;font-size:13.4px;color:#03170a;white-space:nowrap;left:654px;width:400px;text-align:right;transform:scaleX(0.945);transform-origin:100% 50%;">9</div>
<div style="top:728.5px;height:20px;line-height:20px;font-size:13.4px;color:#03170a;white-space:nowrap;left:1059px;transform:scaleX(0.945);transform-origin:0 50%;">10</div>
<div style="left:1118px;top:728px;width:151px;height:20px;overflow:hidden;"><div style="left:2px;top:0;font-size:13.4px;line-height:21px;color:#03170a;white-space:nowrap;transform:scaleX(.912);transform-origin:0 50%;">PT SUBUR JAYA GEMILANG</div></div>
<div style="top:728.5px;height:20px;line-height:20px;font-size:13.4px;color:#03170a;white-space:nowrap;left:962px;width:400px;text-align:right;transform:scaleX(0.925);transform-origin:100% 50%;">7,00803E+14</div>
<div style="top:728.5px;height:20px;line-height:20px;font-size:13.4px;color:#03170a;white-space:nowrap;left:1081px;width:400px;text-align:right;transform:scaleX(0.945);transform-origin:100% 50%;">100082261376761</div>
<div style="top:728.5px;height:20px;line-height:20px;font-size:13.4px;color:#03170a;white-space:nowrap;left:1163px;width:400px;text-align:right;transform:scaleX(1.01);transform-origin:100% 50%;">23/09/2022</div>
<div style="top:728.5px;height:20px;line-height:20px;font-size:13.4px;color:#03170a;white-space:nowrap;left:1261px;width:400px;text-align:right;transform:scaleX(0.945);transform-origin:100% 50%;">10.176.096</div>
<div style="top:728.5px;height:20px;line-height:20px;font-size:13.4px;color:#03170a;white-space:nowrap;left:1357px;width:400px;text-align:right;transform:scaleX(0.945);transform-origin:100% 50%;">1.119.370</div>
<div style="top:728.5px;height:20px;line-height:20px;font-size:13.4px;color:#03170a;white-space:nowrap;left:1453px;width:400px;text-align:right;transform:scaleX(0.945);transform-origin:100% 50%;">11.295.466</div>
<div style="top:748.5px;height:20px;line-height:20px;font-size:13.4px;color:#03170a;white-space:nowrap;left:654px;width:400px;text-align:right;transform:scaleX(0.945);transform-origin:100% 50%;">10</div>
<div style="top:748.5px;height:20px;line-height:20px;font-size:13.4px;color:#03170a;white-space:nowrap;left:1059px;transform:scaleX(0.945);transform-origin:0 50%;">10</div>
<div style="left:1118px;top:748px;width:151px;height:20px;overflow:hidden;"><div style="left:2px;top:0;font-size:13.4px;line-height:21px;color:#03170a;white-space:nowrap;transform:scaleX(.912);transform-origin:0 50%;">PT SUBUR JAYA GEMILANG</div></div>
<div style="top:748.5px;height:20px;line-height:20px;font-size:13.4px;color:#03170a;white-space:nowrap;left:962px;width:400px;text-align:right;transform:scaleX(0.925);transform-origin:100% 50%;">7,00803E+14</div>
<div style="top:748.5px;height:20px;line-height:20px;font-size:13.4px;color:#03170a;white-space:nowrap;left:1081px;width:400px;text-align:right;transform:scaleX(0.945);transform-origin:100% 50%;">100082261420373</div>
<div style="top:748.5px;height:20px;line-height:20px;font-size:13.4px;color:#03170a;white-space:nowrap;left:1163px;width:400px;text-align:right;transform:scaleX(1.01);transform-origin:100% 50%;">18/10/2022</div>
<div style="top:748.5px;height:20px;line-height:20px;font-size:13.4px;color:#03170a;white-space:nowrap;left:1261px;width:400px;text-align:right;transform:scaleX(0.945);transform-origin:100% 50%;">22.684.382</div>
<div style="top:748.5px;height:20px;line-height:20px;font-size:13.4px;color:#03170a;white-space:nowrap;left:1357px;width:400px;text-align:right;transform:scaleX(0.945);transform-origin:100% 50%;">2.495.282</div>
<div style="top:748.5px;height:20px;line-height:20px;font-size:13.4px;color:#03170a;white-space:nowrap;left:1453px;width:400px;text-align:right;transform:scaleX(0.945);transform-origin:100% 50%;">25.179.664</div>
<div style="top:768.5px;height:20px;line-height:20px;font-size:13.4px;color:#03170a;white-space:nowrap;left:654px;width:400px;text-align:right;transform:scaleX(0.945);transform-origin:100% 50%;">10</div>
<div style="top:768.5px;height:20px;line-height:20px;font-size:13.4px;color:#03170a;white-space:nowrap;left:1059px;transform:scaleX(0.945);transform-origin:0 50%;">10</div>
<div style="left:1118px;top:768px;width:151px;height:20px;overflow:hidden;"><div style="left:2px;top:0;font-size:13.4px;line-height:21px;color:#03170a;white-space:nowrap;transform:scaleX(.912);transform-origin:0 50%;">PT SUBUR JAYA GEMILANG</div></div>
<div style="top:768.5px;height:20px;line-height:20px;font-size:13.4px;color:#03170a;white-space:nowrap;left:962px;width:400px;text-align:right;transform:scaleX(0.925);transform-origin:100% 50%;">7,00803E+14</div>
<div style="top:768.5px;height:20px;line-height:20px;font-size:13.4px;color:#03170a;white-space:nowrap;left:1081px;width:400px;text-align:right;transform:scaleX(0.945);transform-origin:100% 50%;">100082261419242</div>
<div style="top:768.5px;height:20px;line-height:20px;font-size:13.4px;color:#03170a;white-space:nowrap;left:1163px;width:400px;text-align:right;transform:scaleX(1.01);transform-origin:100% 50%;">11/10/2022</div>
<div style="top:768.5px;height:20px;line-height:20px;font-size:13.4px;color:#03170a;white-space:nowrap;left:1261px;width:400px;text-align:right;transform:scaleX(0.945);transform-origin:100% 50%;">14.596.560</div>
<div style="top:768.5px;height:20px;line-height:20px;font-size:13.4px;color:#03170a;white-space:nowrap;left:1357px;width:400px;text-align:right;transform:scaleX(0.945);transform-origin:100% 50%;">1.605.621</div>
<div style="top:768.5px;height:20px;line-height:20px;font-size:13.4px;color:#03170a;white-space:nowrap;left:1453px;width:400px;text-align:right;transform:scaleX(0.945);transform-origin:100% 50%;">16.202.181</div>
<div style="top:788.5px;height:20px;line-height:20px;font-size:13.4px;color:#03170a;white-space:nowrap;left:654px;width:400px;text-align:right;transform:scaleX(0.945);transform-origin:100% 50%;">10</div>
<div style="top:788.5px;height:20px;line-height:20px;font-size:13.4px;color:#03170a;white-space:nowrap;left:1059px;transform:scaleX(0.945);transform-origin:0 50%;">10</div>
<div style="left:1118px;top:788px;width:151px;height:20px;overflow:hidden;"><div style="left:2px;top:0;font-size:13.4px;line-height:21px;color:#03170a;white-space:nowrap;transform:scaleX(.912);transform-origin:0 50%;">PT SUBUR JAYA GEMILANG</div></div>
<div style="top:788.5px;height:20px;line-height:20px;font-size:13.4px;color:#03170a;white-space:nowrap;left:962px;width:400px;text-align:right;transform:scaleX(0.925);transform-origin:100% 50%;">7,00803E+14</div>
<div style="top:788.5px;height:20px;line-height:20px;font-size:13.4px;color:#03170a;white-space:nowrap;left:1081px;width:400px;text-align:right;transform:scaleX(0.945);transform-origin:100% 50%;">100082261419243</div>
<div style="top:788.5px;height:20px;line-height:20px;font-size:13.4px;color:#03170a;white-space:nowrap;left:1163px;width:400px;text-align:right;transform:scaleX(1.01);transform-origin:100% 50%;">06/10/2022</div>
<div style="top:788.5px;height:20px;line-height:20px;font-size:13.4px;color:#03170a;white-space:nowrap;left:1261px;width:400px;text-align:right;transform:scaleX(0.945);transform-origin:100% 50%;">6.023.700</div>
<div style="top:788.5px;height:20px;line-height:20px;font-size:13.4px;color:#03170a;white-space:nowrap;left:1357px;width:400px;text-align:right;transform:scaleX(0.945);transform-origin:100% 50%;">662.607</div>
<div style="top:788.5px;height:20px;line-height:20px;font-size:13.4px;color:#03170a;white-space:nowrap;left:1453px;width:400px;text-align:right;transform:scaleX(0.945);transform-origin:100% 50%;">6.686.307</div>
<div style="top:808.5px;height:20px;line-height:20px;font-size:13.4px;color:#03170a;white-space:nowrap;left:654px;width:400px;text-align:right;transform:scaleX(0.945);transform-origin:100% 50%;">10</div>
<div style="top:808.5px;height:20px;line-height:20px;font-size:13.4px;color:#03170a;white-space:nowrap;left:1059px;transform:scaleX(0.945);transform-origin:0 50%;">10</div>
<div style="left:1118px;top:808px;width:151px;height:20px;overflow:hidden;"><div style="left:2px;top:0;font-size:13.4px;line-height:21px;color:#03170a;white-space:nowrap;transform:scaleX(.912);transform-origin:0 50%;">PT SUBUR JAYA GEMILANG</div></div>
<div style="top:808.5px;height:20px;line-height:20px;font-size:13.4px;color:#03170a;white-space:nowrap;left:962px;width:400px;text-align:right;transform:scaleX(0.925);transform-origin:100% 50%;">7,00803E+14</div>
<div style="top:808.5px;height:20px;line-height:20px;font-size:13.4px;color:#03170a;white-space:nowrap;left:1081px;width:400px;text-align:right;transform:scaleX(0.945);transform-origin:100% 50%;">100082261420374</div>
<div style="top:808.5px;height:20px;line-height:20px;font-size:13.4px;color:#03170a;white-space:nowrap;left:1163px;width:400px;text-align:right;transform:scaleX(1.01);transform-origin:100% 50%;">20/10/2022</div>
<div style="top:808.5px;height:20px;line-height:20px;font-size:13.4px;color:#03170a;white-space:nowrap;left:1261px;width:400px;text-align:right;transform:scaleX(0.945);transform-origin:100% 50%;">6.979.810</div>
<div style="top:808.5px;height:20px;line-height:20px;font-size:13.4px;color:#03170a;white-space:nowrap;left:1357px;width:400px;text-align:right;transform:scaleX(0.945);transform-origin:100% 50%;">767.779</div>
<div style="top:808.5px;height:20px;line-height:20px;font-size:13.4px;color:#03170a;white-space:nowrap;left:1453px;width:400px;text-align:right;transform:scaleX(0.945);transform-origin:100% 50%;">7.747.589</div>
<div style="top:828.5px;height:20px;line-height:20px;font-size:13.4px;color:#03170a;white-space:nowrap;left:654px;width:400px;text-align:right;transform:scaleX(0.945);transform-origin:100% 50%;">11</div>
<div style="top:828.5px;height:20px;line-height:20px;font-size:13.4px;color:#03170a;white-space:nowrap;left:1059px;transform:scaleX(0.945);transform-origin:0 50%;">10</div>
<div style="left:1118px;top:828px;width:151px;height:20px;overflow:hidden;"><div style="left:2px;top:0;font-size:13.4px;line-height:21px;color:#03170a;white-space:nowrap;transform:scaleX(.912);transform-origin:0 50%;">PT SUBUR JAYA GEMILANG</div></div>
<div style="top:828.5px;height:20px;line-height:20px;font-size:13.4px;color:#03170a;white-space:nowrap;left:962px;width:400px;text-align:right;transform:scaleX(0.925);transform-origin:100% 50%;">7,00803E+14</div>
<div style="top:828.5px;height:20px;line-height:20px;font-size:13.4px;color:#03170a;white-space:nowrap;left:1081px;width:400px;text-align:right;transform:scaleX(0.945);transform-origin:100% 50%;">100092294155946</div>
<div style="top:828.5px;height:20px;line-height:20px;font-size:13.4px;color:#03170a;white-space:nowrap;left:1163px;width:400px;text-align:right;transform:scaleX(1.01);transform-origin:100% 50%;">24/11/2022</div>
<div style="top:828.5px;height:20px;line-height:20px;font-size:13.4px;color:#03170a;white-space:nowrap;left:1261px;width:400px;text-align:right;transform:scaleX(0.945);transform-origin:100% 50%;">14.413.291</div>
<div style="top:828.5px;height:20px;line-height:20px;font-size:13.4px;color:#03170a;white-space:nowrap;left:1357px;width:400px;text-align:right;transform:scaleX(0.945);transform-origin:100% 50%;">1.585.462</div>
<div style="top:828.5px;height:20px;line-height:20px;font-size:13.4px;color:#03170a;white-space:nowrap;left:1453px;width:400px;text-align:right;transform:scaleX(0.945);transform-origin:100% 50%;">15.998.753</div>
<div style="top:848.5px;height:20px;line-height:20px;font-size:13.4px;color:#03170a;white-space:nowrap;left:654px;width:400px;text-align:right;transform:scaleX(0.945);transform-origin:100% 50%;">11</div>
<div style="top:848.5px;height:20px;line-height:20px;font-size:13.4px;color:#03170a;white-space:nowrap;left:1059px;transform:scaleX(0.945);transform-origin:0 50%;">10</div>
<div style="left:1118px;top:848px;width:151px;height:20px;overflow:hidden;"><div style="left:2px;top:0;font-size:13.4px;line-height:21px;color:#03170a;white-space:nowrap;transform:scaleX(.912);transform-origin:0 50%;">PT SUBUR JAYA GEMILANG</div></div>
<div style="top:848.5px;height:20px;line-height:20px;font-size:13.4px;color:#03170a;white-space:nowrap;left:962px;width:400px;text-align:right;transform:scaleX(0.925);transform-origin:100% 50%;">7,00803E+14</div>
<div style="top:848.5px;height:20px;line-height:20px;font-size:13.4px;color:#03170a;white-space:nowrap;left:1081px;width:400px;text-align:right;transform:scaleX(0.945);transform-origin:100% 50%;">100092294155711</div>
<div style="top:848.5px;height:20px;line-height:20px;font-size:13.4px;color:#03170a;white-space:nowrap;left:1163px;width:400px;text-align:right;transform:scaleX(1.01);transform-origin:100% 50%;">22/11/2022</div>
<div style="top:848.5px;height:20px;line-height:20px;font-size:13.4px;color:#03170a;white-space:nowrap;left:1261px;width:400px;text-align:right;transform:scaleX(0.945);transform-origin:100% 50%;">12.869.704</div>
<div style="top:848.5px;height:20px;line-height:20px;font-size:13.4px;color:#03170a;white-space:nowrap;left:1357px;width:400px;text-align:right;transform:scaleX(0.945);transform-origin:100% 50%;">1.415.667</div>
<div style="top:848.5px;height:20px;line-height:20px;font-size:13.4px;color:#03170a;white-space:nowrap;left:1453px;width:400px;text-align:right;transform:scaleX(0.945);transform-origin:100% 50%;">14.285.371</div>
<div style="top:868.5px;height:20px;line-height:20px;font-size:13.4px;color:#03170a;white-space:nowrap;left:654px;width:400px;text-align:right;transform:scaleX(0.945);transform-origin:100% 50%;">12</div>
<div style="top:868.5px;height:20px;line-height:20px;font-size:13.4px;color:#03170a;white-space:nowrap;left:1059px;transform:scaleX(0.945);transform-origin:0 50%;">10</div>
<div style="left:1118px;top:868px;width:151px;height:20px;overflow:hidden;"><div style="left:2px;top:0;font-size:13.4px;line-height:21px;color:#03170a;white-space:nowrap;transform:scaleX(.912);transform-origin:0 50%;">PT SUBUR JAYA GEMILANG</div></div>
<div style="left:1275px;top:868px;width:85px;height:20px;overflow:hidden;"><div style="left:0;top:0;font-size:13.4px;line-height:21px;color:#03170a;white-space:nowrap;letter-spacing:-.45px;">############</div></div>
<div style="top:868.5px;height:20px;line-height:20px;font-size:13.4px;color:#03170a;white-space:nowrap;left:1081px;width:400px;text-align:right;transform:scaleX(0.945);transform-origin:100% 50%;">100092294203253</div>
<div style="top:868.5px;height:20px;line-height:20px;font-size:13.4px;color:#03170a;white-space:nowrap;left:1163px;width:400px;text-align:right;transform:scaleX(1.01);transform-origin:100% 50%;">26/12/2022</div>
<div style="top:868.5px;height:20px;line-height:20px;font-size:13.4px;color:#03170a;white-space:nowrap;left:1261px;width:400px;text-align:right;transform:scaleX(0.945);transform-origin:100% 50%;">2.765.664</div>
<div style="top:868.5px;height:20px;line-height:20px;font-size:13.4px;color:#03170a;white-space:nowrap;left:1357px;width:400px;text-align:right;transform:scaleX(0.945);transform-origin:100% 50%;">304.223</div>
<div style="top:868.5px;height:20px;line-height:20px;font-size:13.4px;color:#03170a;white-space:nowrap;left:1453px;width:400px;text-align:right;transform:scaleX(0.945);transform-origin:100% 50%;">3.069.887</div>
<div style="top:888.5px;height:20px;line-height:20px;font-size:13.4px;color:#03170a;white-space:nowrap;left:654px;width:400px;text-align:right;transform:scaleX(0.945);transform-origin:100% 50%;">12</div>
<div style="top:888.5px;height:20px;line-height:20px;font-size:13.4px;color:#03170a;white-space:nowrap;left:1059px;transform:scaleX(0.945);transform-origin:0 50%;">10</div>
<div style="left:1118px;top:888px;width:151px;height:20px;overflow:hidden;"><div style="left:2px;top:0;font-size:13.4px;line-height:21px;color:#03170a;white-space:nowrap;transform:scaleX(.912);transform-origin:0 50%;">PT SUBUR JAYA GEMILANG</div></div>
<div style="left:1275px;top:888px;width:85px;height:20px;overflow:hidden;"><div style="left:0;top:0;font-size:13.4px;line-height:21px;color:#03170a;white-space:nowrap;letter-spacing:-.45px;">############</div></div>
<div style="top:888.5px;height:20px;line-height:20px;font-size:13.4px;color:#03170a;white-space:nowrap;left:1081px;width:400px;text-align:right;transform:scaleX(0.945);transform-origin:100% 50%;">100092294203441</div>
<div style="top:888.5px;height:20px;line-height:20px;font-size:13.4px;color:#03170a;white-space:nowrap;left:1163px;width:400px;text-align:right;transform:scaleX(1.01);transform-origin:100% 50%;">28/12/2022</div>
<div style="top:888.5px;height:20px;line-height:20px;font-size:13.4px;color:#03170a;white-space:nowrap;left:1261px;width:400px;text-align:right;transform:scaleX(0.945);transform-origin:100% 50%;">2.957.182</div>
<div style="top:888.5px;height:20px;line-height:20px;font-size:13.4px;color:#03170a;white-space:nowrap;left:1357px;width:400px;text-align:right;transform:scaleX(0.945);transform-origin:100% 50%;">325.290</div>
<div style="top:888.5px;height:20px;line-height:20px;font-size:13.4px;color:#03170a;white-space:nowrap;left:1453px;width:400px;text-align:right;transform:scaleX(0.945);transform-origin:100% 50%;">3.282.472</div>
<div style="top:908.5px;height:20px;line-height:20px;font-size:13.4px;color:#000;white-space:nowrap;left:654px;width:400px;text-align:right;transform:scaleX(0.945);transform-origin:100% 50%;">12</div>
<div style="top:908.5px;height:20px;line-height:20px;font-size:13.4px;color:#000;white-space:nowrap;left:1059px;transform:scaleX(0.945);transform-origin:0 50%;">10</div>
<div style="left:1118px;top:908px;width:151px;height:20px;overflow:hidden;"><div style="left:2px;top:0;font-size:13.4px;line-height:21px;color:#000;white-space:nowrap;transform:scaleX(.912);transform-origin:0 50%;">PT SUBUR JAYA GEMILANG</div></div>
<div style="left:1275px;top:908px;width:85px;height:20px;overflow:hidden;"><div style="left:0;top:0;font-size:13.4px;line-height:21px;color:#000;white-space:nowrap;letter-spacing:-.45px;">############</div></div>
<div style="top:908.5px;height:20px;line-height:20px;font-size:13.4px;color:#000;white-space:nowrap;left:1081px;width:400px;text-align:right;transform:scaleX(0.945);transform-origin:100% 50%;">100092294203700</div>
<div style="top:908.5px;height:20px;line-height:20px;font-size:13.4px;color:#000;white-space:nowrap;left:1163px;width:400px;text-align:right;transform:scaleX(1.01);transform-origin:100% 50%;">30/12/2022</div>
<div style="top:908.5px;height:20px;line-height:20px;font-size:13.4px;color:#000;white-space:nowrap;left:1261px;width:400px;text-align:right;transform:scaleX(0.945);transform-origin:100% 50%;">1.779.840</div>
<div style="top:908.5px;height:20px;line-height:20px;font-size:13.4px;color:#000;white-space:nowrap;left:1357px;width:400px;text-align:right;transform:scaleX(0.945);transform-origin:100% 50%;">195.782</div>
<div style="top:908.5px;height:20px;line-height:20px;font-size:13.4px;color:#000;white-space:nowrap;left:1453px;width:400px;text-align:right;transform:scaleX(0.945);transform-origin:100% 50%;">1.975.622</div>
<div style="left:996px;top:367px;width:769px;height:2px;background:repeating-linear-gradient(90deg,#e9fff0 0 2px,#0c8a41 2px 9px);"></div>
<div style="left:1000px;top:386px;width:765px;height:2px;background:repeating-linear-gradient(90deg,#e9fff0 0 2px,#0c8a41 2px 9px);"></div>
<div style="left:996px;top:367px;width:2px;height:21px;background:repeating-linear-gradient(180deg,#e9fff0 0 2px,#0c8a41 2px 9px);"></div>
<div style="left:1763px;top:367px;width:2px;height:21px;background:repeating-linear-gradient(180deg,#e9fff0 0 2px,#0c8a41 2px 9px);"></div>
<div style="left:962px;top:208px;width:34px;height:800px;background:#e6e6e6;"></div>
<div style="left:964px;top:247px;width:31px;height:1px;background:#bdbdbd;"></div>
<div style="top:229.0px;height:20px;line-height:20px;font-size:13.4px;color:#262626;white-space:nowrap;left:959.8px;width:40px;text-align:center;transform:scaleX(0.95);transform-origin:50% 50%;">1</div>
<div style="left:964px;top:266px;width:31px;height:1px;background:#b4b4b4;"></div>
<div style="left:964px;top:269px;width:31px;height:1px;background:#b4b4b4;"></div>
<div style="top:249.0px;height:20px;line-height:20px;font-size:13.4px;color:#262626;white-space:nowrap;left:959.8px;width:40px;text-align:center;transform:scaleX(0.95);transform-origin:50% 50%;">2</div>
<div style="left:964px;top:286px;width:31px;height:1px;background:#b4b4b4;"></div>
<div style="left:964px;top:289px;width:31px;height:1px;background:#b4b4b4;"></div>
<div style="top:269.0px;height:20px;line-height:20px;font-size:13.4px;color:#2323c6;white-space:nowrap;left:959.8px;width:40px;text-align:center;transform:scaleX(0.95);transform-origin:50% 50%;">13</div>
<div style="left:964px;top:306px;width:31px;height:1px;background:#b4b4b4;"></div>
<div style="left:964px;top:309px;width:31px;height:1px;background:#b4b4b4;"></div>
<div style="top:289.0px;height:20px;line-height:20px;font-size:13.4px;color:#2323c6;white-space:nowrap;left:959.8px;width:40px;text-align:center;transform:scaleX(0.95);transform-origin:50% 50%;">16</div>
<div style="left:964px;top:326px;width:31px;height:1px;background:#b4b4b4;"></div>
<div style="left:964px;top:329px;width:31px;height:1px;background:#b4b4b4;"></div>
<div style="top:309.0px;height:20px;line-height:20px;font-size:13.4px;color:#2323c6;white-space:nowrap;left:959.8px;width:40px;text-align:center;transform:scaleX(0.95);transform-origin:50% 50%;">322</div>
<div style="left:964px;top:346px;width:31px;height:1px;background:#b4b4b4;"></div>
<div style="left:964px;top:349px;width:31px;height:1px;background:#b4b4b4;"></div>
<div style="top:329.0px;height:20px;line-height:20px;font-size:13.4px;color:#2323c6;white-space:nowrap;left:959.8px;width:40px;text-align:center;transform:scaleX(0.95);transform-origin:50% 50%;">331</div>
<div style="left:964px;top:366px;width:31px;height:1px;background:#b4b4b4;"></div>
<div style="left:964px;top:369px;width:31px;height:1px;background:#b4b4b4;"></div>
<div style="top:349.0px;height:20px;line-height:20px;font-size:13.4px;color:#2323c6;white-space:nowrap;left:959.8px;width:40px;text-align:center;transform:scaleX(0.95);transform-origin:50% 50%;">333</div>
<div style="left:964px;top:386px;width:31px;height:1px;background:#b4b4b4;"></div>
<div style="left:964px;top:389px;width:31px;height:1px;background:#b4b4b4;"></div>
<div style="top:369.0px;height:20px;line-height:20px;font-size:13.4px;color:#2323c6;white-space:nowrap;left:959.8px;width:40px;text-align:center;transform:scaleX(0.95);transform-origin:50% 50%;">340</div>
<div style="left:964px;top:406px;width:31px;height:1px;background:#b4b4b4;"></div>
<div style="left:964px;top:409px;width:31px;height:1px;background:#b4b4b4;"></div>
<div style="top:389.0px;height:20px;line-height:20px;font-size:13.4px;color:#2323c6;white-space:nowrap;left:959.8px;width:40px;text-align:center;transform:scaleX(0.95);transform-origin:50% 50%;">418</div>
<div style="left:964px;top:426px;width:31px;height:1px;background:#b4b4b4;"></div>
<div style="left:964px;top:429px;width:31px;height:1px;background:#b4b4b4;"></div>
<div style="top:409.0px;height:20px;line-height:20px;font-size:13.4px;color:#2323c6;white-space:nowrap;left:959.8px;width:40px;text-align:center;transform:scaleX(0.95);transform-origin:50% 50%;">655</div>
<div style="left:964px;top:446px;width:31px;height:1px;background:#b4b4b4;"></div>
<div style="left:964px;top:449px;width:31px;height:1px;background:#b4b4b4;"></div>
<div style="top:429.0px;height:20px;line-height:20px;font-size:13.4px;color:#2323c6;white-space:nowrap;left:959.8px;width:40px;text-align:center;transform:scaleX(0.95);transform-origin:50% 50%;">675</div>
<div style="left:964px;top:466px;width:31px;height:1px;background:#b4b4b4;"></div>
<div style="left:964px;top:469px;width:31px;height:1px;background:#b4b4b4;"></div>
<div style="top:449.0px;height:20px;line-height:20px;font-size:13.4px;color:#2323c6;white-space:nowrap;left:959.8px;width:40px;text-align:center;transform:scaleX(0.95);transform-origin:50% 50%;">800</div>
<div style="left:964px;top:486px;width:31px;height:1px;background:#b4b4b4;"></div>
<div style="left:964px;top:489px;width:31px;height:1px;background:#b4b4b4;"></div>
<div style="top:469.0px;height:20px;line-height:20px;font-size:13.4px;color:#2323c6;white-space:nowrap;left:959.8px;width:40px;text-align:center;transform:scaleX(0.95);transform-origin:50% 50%;">845</div>
<div style="left:964px;top:506px;width:31px;height:1px;background:#b4b4b4;"></div>
<div style="left:964px;top:509px;width:31px;height:1px;background:#b4b4b4;"></div>
<div style="top:489.0px;height:20px;line-height:20px;font-size:13.4px;color:#2323c6;white-space:nowrap;left:959.8px;width:40px;text-align:center;transform:scaleX(0.95);transform-origin:50% 50%;">860</div>
<div style="left:964px;top:526px;width:31px;height:1px;background:#b4b4b4;"></div>
<div style="left:964px;top:529px;width:31px;height:1px;background:#b4b4b4;"></div>
<div style="top:509.0px;height:20px;line-height:20px;font-size:13.4px;color:#2323c6;white-space:nowrap;left:959.8px;width:40px;text-align:center;transform:scaleX(0.95);transform-origin:50% 50%;">920</div>
<div style="left:964px;top:546px;width:31px;height:1px;background:#b4b4b4;"></div>
<div style="left:964px;top:549px;width:31px;height:1px;background:#b4b4b4;"></div>
<div style="top:529.0px;height:20px;line-height:20px;font-size:13.4px;color:#2323c6;white-space:nowrap;left:959.8px;width:40px;text-align:center;transform:scaleX(0.95);transform-origin:50% 50%;">971</div>
<div style="left:964px;top:566px;width:31px;height:1px;background:#b4b4b4;"></div>
<div style="left:964px;top:569px;width:31px;height:1px;background:#b4b4b4;"></div>
<div style="top:549.0px;height:20px;line-height:20px;font-size:13.4px;color:#2323c6;white-space:nowrap;left:959.8px;width:40px;text-align:center;transform:scaleX(0.95);transform-origin:50% 50%;">993</div>
<div style="left:964px;top:586px;width:31px;height:1px;background:#b4b4b4;"></div>
<div style="left:964px;top:589px;width:31px;height:1px;background:#b4b4b4;"></div>
<div style="top:569.0px;height:20px;line-height:20px;font-size:13.4px;color:#2323c6;white-space:nowrap;left:959.8px;width:40px;text-align:center;transform:scaleX(0.95);transform-origin:50% 50%;">1031</div>
<div style="left:964px;top:606px;width:31px;height:1px;background:#b4b4b4;"></div>
<div style="left:964px;top:609px;width:31px;height:1px;background:#b4b4b4;"></div>
<div style="top:589.0px;height:20px;line-height:20px;font-size:13.4px;color:#2323c6;white-space:nowrap;left:959.8px;width:40px;text-align:center;transform:scaleX(0.95);transform-origin:50% 50%;">1071</div>
<div style="left:964px;top:626px;width:31px;height:1px;background:#b4b4b4;"></div>
<div style="left:964px;top:629px;width:31px;height:1px;background:#b4b4b4;"></div>
<div style="top:609.0px;height:20px;line-height:20px;font-size:13.4px;color:#2323c6;white-space:nowrap;left:959.8px;width:40px;text-align:center;transform:scaleX(0.95);transform-origin:50% 50%;">1155</div>
<div style="left:964px;top:646px;width:31px;height:1px;background:#b4b4b4;"></div>
<div style="left:964px;top:649px;width:31px;height:1px;background:#b4b4b4;"></div>
<div style="top:629.0px;height:20px;line-height:20px;font-size:13.4px;color:#2323c6;white-space:nowrap;left:959.8px;width:40px;text-align:center;transform:scaleX(0.95);transform-origin:50% 50%;">1163</div>
<div style="left:964px;top:666px;width:31px;height:1px;background:#b4b4b4;"></div>
<div style="left:964px;top:669px;width:31px;height:1px;background:#b4b4b4;"></div>
<div style="top:649.0px;height:20px;line-height:20px;font-size:13.4px;color:#2323c6;white-space:nowrap;left:959.8px;width:40px;text-align:center;transform:scaleX(0.95);transform-origin:50% 50%;">1164</div>
<div style="left:964px;top:686px;width:31px;height:1px;background:#b4b4b4;"></div>
<div style="left:964px;top:689px;width:31px;height:1px;background:#b4b4b4;"></div>
<div style="top:669.0px;height:20px;line-height:20px;font-size:13.4px;color:#2323c6;white-space:nowrap;left:959.8px;width:40px;text-align:center;transform:scaleX(0.95);transform-origin:50% 50%;">1200</div>
<div style="left:964px;top:706px;width:31px;height:1px;background:#b4b4b4;"></div>
<div style="left:964px;top:709px;width:31px;height:1px;background:#b4b4b4;"></div>
<div style="top:689.0px;height:20px;line-height:20px;font-size:13.4px;color:#2323c6;white-space:nowrap;left:959.8px;width:40px;text-align:center;transform:scaleX(0.95);transform-origin:50% 50%;">1218</div>
<div style="left:964px;top:726px;width:31px;height:1px;background:#b4b4b4;"></div>
<div style="left:964px;top:729px;width:31px;height:1px;background:#b4b4b4;"></div>
<div style="top:709.0px;height:20px;line-height:20px;font-size:13.4px;color:#2323c6;white-space:nowrap;left:959.8px;width:40px;text-align:center;transform:scaleX(0.95);transform-origin:50% 50%;">1228</div>
<div style="left:964px;top:746px;width:31px;height:1px;background:#b4b4b4;"></div>
<div style="left:964px;top:749px;width:31px;height:1px;background:#b4b4b4;"></div>
<div style="top:729.0px;height:20px;line-height:20px;font-size:13.4px;color:#2323c6;white-space:nowrap;left:959.8px;width:40px;text-align:center;transform:scaleX(0.95);transform-origin:50% 50%;">1249</div>
<div style="left:964px;top:766px;width:31px;height:1px;background:#b4b4b4;"></div>
<div style="left:964px;top:769px;width:31px;height:1px;background:#b4b4b4;"></div>
<div style="top:749.0px;height:20px;line-height:20px;font-size:13.4px;color:#2323c6;white-space:nowrap;left:959.8px;width:40px;text-align:center;transform:scaleX(0.95);transform-origin:50% 50%;">1333</div>
<div style="left:964px;top:786px;width:31px;height:1px;background:#b4b4b4;"></div>
<div style="left:964px;top:789px;width:31px;height:1px;background:#b4b4b4;"></div>
<div style="top:769.0px;height:20px;line-height:20px;font-size:13.4px;color:#2323c6;white-space:nowrap;left:959.8px;width:40px;text-align:center;transform:scaleX(0.95);transform-origin:50% 50%;">1380</div>
<div style="left:964px;top:806px;width:31px;height:1px;background:#b4b4b4;"></div>
<div style="left:964px;top:809px;width:31px;height:1px;background:#b4b4b4;"></div>
<div style="top:789.0px;height:20px;line-height:20px;font-size:13.4px;color:#2323c6;white-space:nowrap;left:959.8px;width:40px;text-align:center;transform:scaleX(0.95);transform-origin:50% 50%;">1398</div>
<div style="left:964px;top:826px;width:31px;height:1px;background:#b4b4b4;"></div>
<div style="left:964px;top:829px;width:31px;height:1px;background:#b4b4b4;"></div>
<div style="top:809.0px;height:20px;line-height:20px;font-size:13.4px;color:#2323c6;white-space:nowrap;left:959.8px;width:40px;text-align:center;transform:scaleX(0.95);transform-origin:50% 50%;">1402</div>
<div style="left:964px;top:846px;width:31px;height:1px;background:#b4b4b4;"></div>
<div style="left:964px;top:849px;width:31px;height:1px;background:#b4b4b4;"></div>
<div style="top:829.0px;height:20px;line-height:20px;font-size:13.4px;color:#2323c6;white-space:nowrap;left:959.8px;width:40px;text-align:center;transform:scaleX(0.95);transform-origin:50% 50%;">1503</div>
<div style="left:964px;top:866px;width:31px;height:1px;background:#b4b4b4;"></div>
<div style="left:964px;top:869px;width:31px;height:1px;background:#b4b4b4;"></div>
<div style="top:849.0px;height:20px;line-height:20px;font-size:13.4px;color:#2323c6;white-space:nowrap;left:959.8px;width:40px;text-align:center;transform:scaleX(0.95);transform-origin:50% 50%;">1506</div>
<div style="left:964px;top:886px;width:31px;height:1px;background:#b4b4b4;"></div>
<div style="left:964px;top:889px;width:31px;height:1px;background:#b4b4b4;"></div>
<div style="top:869.0px;height:20px;line-height:20px;font-size:13.4px;color:#2323c6;white-space:nowrap;left:959.8px;width:40px;text-align:center;transform:scaleX(0.95);transform-origin:50% 50%;">1586</div>
<div style="left:964px;top:906px;width:31px;height:1px;background:#b4b4b4;"></div>
<div style="left:964px;top:909px;width:31px;height:1px;background:#b4b4b4;"></div>
<div style="top:889.0px;height:20px;line-height:20px;font-size:13.4px;color:#2323c6;white-space:nowrap;left:959.8px;width:40px;text-align:center;transform:scaleX(0.95);transform-origin:50% 50%;">1699</div>
<div style="left:964px;top:927px;width:31px;height:1px;background:#bdbdbd;"></div>
<div style="top:909.0px;height:20px;line-height:20px;font-size:13.4px;color:#2323c6;white-space:nowrap;left:959.8px;width:40px;text-align:center;transform:scaleX(0.95);transform-origin:50% 50%;">1701</div>
<div style="left:964px;top:947px;width:31px;height:1px;background:#bdbdbd;"></div>
<div style="top:929.0px;height:20px;line-height:20px;font-size:13.4px;color:#262626;white-space:nowrap;left:959.8px;width:40px;text-align:center;transform:scaleX(0.95);transform-origin:50% 50%;">1703</div>
<div style="left:964px;top:967px;width:31px;height:1px;background:#bdbdbd;"></div>
<div style="top:949.0px;height:20px;line-height:20px;font-size:13.4px;color:#262626;white-space:nowrap;left:959.8px;width:40px;text-align:center;transform:scaleX(0.95);transform-origin:50% 50%;">1704</div>
<div style="left:964px;top:987px;width:31px;height:1px;background:#bdbdbd;"></div>
<div style="top:969.0px;height:20px;line-height:20px;font-size:13.4px;color:#262626;white-space:nowrap;left:959.8px;width:40px;text-align:center;transform:scaleX(0.95);transform-origin:50% 50%;">1705</div>
<div style="left:962px;top:208px;width:956px;height:20px;background:#e6e6e6;"></div>
<div style="left:965px;top:227px;width:931px;height:1px;background:#9e9e9e;"></div>
<div style="top:208.8px;height:20px;line-height:20px;font-size:13.5px;color:#262626;white-space:nowrap;left:996.5px;width:60px;text-align:center;">A</div>
<div style="left:1056px;top:208px;width:1px;height:19px;background:#c4c4c4;"></div>
<div style="top:208.8px;height:20px;line-height:20px;font-size:13.5px;color:#262626;white-space:nowrap;left:1057.5px;width:60px;text-align:center;">B</div>
<div style="left:1117px;top:208px;width:1px;height:19px;background:#c4c4c4;"></div>
<div style="top:208.8px;height:20px;line-height:20px;font-size:13.5px;color:#262626;white-space:nowrap;left:1164.0px;width:60px;text-align:center;">C</div>
<div style="left:1269px;top:208px;width:1px;height:19px;background:#c4c4c4;"></div>
<div style="top:208.8px;height:20px;line-height:20px;font-size:13.5px;color:#262626;white-space:nowrap;left:1287.5px;width:60px;text-align:center;">D</div>
<div style="left:1364px;top:208px;width:1px;height:19px;background:#c4c4c4;"></div>
<div style="top:208.8px;height:20px;line-height:20px;font-size:13.5px;color:#262626;white-space:nowrap;left:1394.5px;width:60px;text-align:center;">E</div>
<div style="left:1483px;top:208px;width:1px;height:19px;background:#c4c4c4;"></div>
<div style="top:208.8px;height:20px;line-height:20px;font-size:13.5px;color:#262626;white-space:nowrap;left:1495.0px;width:60px;text-align:center;">F</div>
<div style="left:1565px;top:208px;width:1px;height:19px;background:#c4c4c4;"></div>
<div style="top:208.8px;height:20px;line-height:20px;font-size:13.5px;color:#262626;white-space:nowrap;left:1587.5px;width:60px;text-align:center;">G</div>
<div style="left:1668px;top:208px;width:1px;height:19px;background:#c4c4c4;"></div>
<div style="top:208.8px;height:20px;line-height:20px;font-size:13.5px;color:#262626;white-space:nowrap;left:1687.0px;width:60px;text-align:center;">H</div>
<div style="left:1764px;top:208px;width:1px;height:19px;background:#c4c4c4;"></div>
<div style="top:208.8px;height:20px;line-height:20px;font-size:13.5px;color:#262626;white-space:nowrap;left:1783.0px;width:60px;text-align:center;">I</div>
<div style="left:1860px;top:208px;width:1px;height:19px;background:#c4c4c4;"></div>
<div style="left:1895px;top:208px;width:1px;height:19px;background:#c4c4c4;"></div>
<div style="left:1861px;top:208px;width:35px;height:19px;overflow:hidden;"><div style="left:25px;top:1px;font-size:13.5px;line-height:20px;color:#262626;">J</div></div>
<div style="left:995px;top:208px;width:1px;height:800px;background:#bdbdbd;"></div>
<svg style="left:980px;top:213px;" width="13" height="12" viewBox="0 0 13 12"><path d="M12 0.5 V11.5 H0.5 Z" fill="#b5b5b5"/></svg>
<div style="left:1896px;top:208px;width:22px;height:800px;background:#e6e6e6;"></div>
<div style="left:1895px;top:228px;width:1px;height:800px;background:#bfbfbf;"></div>
<div style="left:1899px;top:210px;width:16px;height:780px;background:linear-gradient(90deg,#d6d6d6,#dedede);"></div>
<div style="left:1900px;top:211px;width:14px;height:14px;background:#fdfdfd;border:1px solid #c9c9c9;box-sizing:border-box;"></div>
<svg style="left:1903.5px;top:216px;" width="7" height="4" viewBox="0 0 7 4"><path d="M0 4 L3.5 0 L7 4 Z" fill="#777"/></svg>
<div style="left:1900px;top:975px;width:14px;height:14px;background:#fdfdfd;border:1px solid #c9c9c9;box-sizing:border-box;"></div>
<svg style="left:1903.5px;top:980px;" width="7" height="4" viewBox="0 0 7 4"><path d="M0 0 L3.5 4 L7 0 Z" fill="#777"/></svg>
<div style="left:1900px;top:225px;width:14px;height:17px;background:#ffffff;border:1px solid #c9c9c9;box-sizing:border-box;"></div>
</div></div>
<div style="left:962px;top:989px;width:956px;height:28px;background:#e6e6e6;"></div>
<div style="left:965px;top:988px;width:934px;height:1px;background:#b7b7b7;"></div>
<svg style="left:991px;top:998px;" width="5" height="8" viewBox="0 0 5 8"><path d="M4.5 0.5 L0.8 4 L4.5 7.5 Z" fill="#c6c6c6"/></svg>
<svg style="left:1021px;top:998px;" width="5" height="8" viewBox="0 0 5 8"><path d="M0.5 0.5 L4.2 4 L0.5 7.5 Z" fill="#c6c6c6"/></svg>
<div style="left:1064px;top:989px;width:38px;height:25px;background:linear-gradient(#ffffff 0%,#ffffff 40%,#fbf8a0 100%);border-left:1px solid #c6c6c6;border-right:1px solid #c6c6c6;box-sizing:border-box;"></div>
<div style="left:1064px;top:1012px;width:38px;height:2px;background:#217346;"></div>
<div style="top:993.0px;height:19px;line-height:19px;font-size:12.8px;color:#1e6b41;white-space:nowrap;font-weight:bold;left:1074.8px;transform:scaleX(0.9719);transform-origin:0 50%;">B2</div>
<svg style="left:1134px;top:994px;" width="18" height="18" viewBox="0 0 18 18"><circle cx="9" cy="9" r="7.6" fill="none" stroke="#777" stroke-width="1.1"/><path d="M9 5 V13 M5 9 H13" stroke="#777" stroke-width="1.5"/></svg>
<div style="left:1535px;top:994px;width:1px;height:2px;background:#999;"></div>
<div style="left:1535px;top:1001px;width:1px;height:2px;background:#999;"></div>
<div style="left:1535px;top:1008px;width:1px;height:2px;background:#999;"></div>
<div style="left:1552px;top:996px;width:341px;height:15px;background:#d6d6d6;"></div>
<div style="left:1552px;top:996px;width:15px;height:15px;background:#fdfdfd;border:1px solid #c6c6c6;box-sizing:border-box;"></div>
<svg style="left:1557px;top:1000px;" width="5" height="7" viewBox="0 0 5 7"><path d="M4.5 0 L0.5 3.5 L4.5 7 Z" fill="#555"/></svg>
<div style="left:1878px;top:996px;width:15px;height:15px;background:#fdfdfd;border:1px solid #c6c6c6;box-sizing:border-box;"></div>
<svg style="left:1883px;top:1000px;" width="5" height="7" viewBox="0 0 5 7"><path d="M0.5 0 L4.5 3.5 L0.5 7 Z" fill="#555"/></svg>
<div style="left:1567px;top:996px;width:89px;height:15px;background:#ffffff;border:1px solid #c6c6c6;box-sizing:border-box;"></div>
<div style="left:962px;top:1017px;width:956px;height:23px;background:#f3f2f1;"></div>
<div style="left:962px;top:1017px;width:956px;height:1px;background:#dcdcdc;"></div>
<div style="top:1020.8px;height:17px;line-height:17px;font-size:11.2px;color:#444;white-space:nowrap;left:969.3px;transform:scaleX(1.0032);transform-origin:0 50%;">Select destination and press ENTER or choose Paste</div>
<div style="left:1606px;top:1018px;width:40px;height:22px;background:#c8c6c4;"></div>
<svg style="left:1618px;top:1020.5px;" width="14" height="14" viewBox="0 0 14 14"><rect x="0.6" y="0.6" width="12.8" height="12.8" fill="none" stroke="#444" stroke-width="1.1"/><path d="M0.6 5 H13.4 M0.6 9.2 H13.4 M5 0.6 V13.4 M9.2 0.6 V13.4" stroke="#444" stroke-width="1.1"/></svg>
<svg style="left:1658px;top:1020.5px;" width="15" height="14" viewBox="0 0 15 14"><rect x="0.6" y="0.6" width="13.4" height="12.8" fill="none" stroke="#444" stroke-width="1.1"/><rect x="3.6" y="3.4" width="7.4" height="7.4" fill="none" stroke="#444" stroke-width="1"/><path d="M5.2 5.6 H9.4 M5.2 7.2 H9.4 M5.2 8.8 H9.4" stroke="#444" stroke-width=".8"/></svg>
<svg style="left:1698px;top:1020.5px;" width="15" height="14" viewBox="0 0 15 14"><rect x="0.6" y="0.6" width="13.4" height="12.8" fill="none" stroke="#444" stroke-width="1.1"/><path d="M0.6 8.4 H14 M4.6 0.6 V8.4 M9 0.6 V6" stroke="#444" stroke-width="1.1"/></svg>
<div style="left:1732px;top:1027.5px;width:8px;height:1px;background:#444;"></div>
<div style="left:1745px;top:1027.5px;width:99px;height:1px;background:#b5b5b5;"></div>
<div style="left:1792px;top:1021.5px;width:5px;height:12px;background:#7f7f7f;"></div>
<div style="left:1849px;top:1027.5px;width:9px;height:1px;background:#444;"></div>
<div style="left:1853px;top:1023.5px;width:1px;height:9px;background:#444;"></div>
<div style="top:1020.8px;height:17px;line-height:17px;font-size:11.2px;color:#444;white-space:nowrap;left:1869.8px;transform:scaleX(0.9747);transform-origin:0 50%;">100%</div>
<div style="left:960px;top:0px;width:3px;height:1040px;background:linear-gradient(90deg,#3e6450 0 1px,#75978a 1px 2px,#3e6450 2px 3px);"></div>
<div style="left:963px;top:35px;width:1px;height:1005px;background:#a9aba8;"></div>
<div style="left:1917px;top:0px;width:1px;height:1040px;background:#8f948f;"></div>
<div style="left:1918px;top:0px;width:2px;height:1040px;background:linear-gradient(180deg,#cfd2cf 0,#d6d4c8 520px,#3a4030 540px,#262e1f 600px,#262e1f 100%);"></div>
<div style="left:0px;top:1040px;width:1920px;height:40px;background:#24261e;"></div>
<svg style="left:16px;top:1051px;" width="17" height="17" viewBox="0 0 17 17"><path d="M0 2.4 L7 1.4 V8 H0 Z M8 1.2 L16.5 0 V8 H8 Z M0 9 H7 V15.6 L0 14.6 Z M8 9 H16.5 V17 L8 15.8 Z" fill="#ffffff"/></svg>
<svg style="left:63px;top:1051px;" width="18" height="17" viewBox="0 0 18 17"><path d="M1 3.4 V1 H11 V3.4 M1 13.6 V16 H11 V13.6" fill="none" stroke="#ffffff" stroke-width="1.6"/><rect x="1" y="5.4" width="10" height="6.2" fill="none" stroke="#ffffff" stroke-width="1.6"/><path d="M15 0.5 V4" stroke="#ffffff" stroke-width="1.6"/><rect x="13.6" y="5" width="2.8" height="2.8" fill="#ffffff"/><path d="M15 9 V16" stroke="#ffffff" stroke-width="1.6"/></svg>
<svg style="left:110px;top:1047px;" width="26" height="25" viewBox="0 0 26 25"><path d="M1 10 L13 1 L25 10 Z" fill="#0f5fb4"/><path d="M4 9 H22 L13 15.5 Z" fill="#ffffff"/><path d="M1 9.2 L13 16.4 L25 9.2 V24 H1 Z" fill="#1f9be5"/><path d="M1 24 L13 16.4 L25 24 Z" fill="#2db1f2"/><path d="M13 16.4 L25 9.2 V24 Z" fill="#45bdf5" opacity=".55"/></svg>
<svg style="left:159px;top:1048px;" width="25" height="25" viewBox="0 0 25 25"><path d="M7 7 V3.4 A1.6 1.6 0 0 1 8.6 1.8 H16.4 A1.6 1.6 0 0 1 18 3.4 V7" fill="none" stroke="#3fa9c9" stroke-width="1.8"/><path d="M1 5.4 H24 V21.6 A2.4 2.4 0 0 1 21.6 24 H3.4 A2.4 2.4 0 0 1 1 21.6 Z" fill="#f4f4f4"/><rect x="8" y="10" width="4" height="4" fill="#e5533d"/><rect x="13" y="10" width="4" height="4" fill="#7bbb3a"/><rect x="8" y="15" width="4" height="4" fill="#2a9fd8"/><rect x="13" y="15" width="4" height="4" fill="#f7b716"/></svg>
<svg style="left:208px;top:1048px;" width="24" height="24" viewBox="0 0 24 24"><path d="M2.2 11.6 C3.2 4.6 8.4 1 13 1 C19.4 1 23 5.8 23 11.4 V13.6 H8.6 C8.8 17.4 12 19 15.2 19 C17.8 19 20 18.2 21.8 17.2 V21.6 C19.8 22.8 17.2 23.4 14.2 23.4 C8 23.4 3.6 19.6 3.6 13.6 C3.6 10.2 5.4 7.4 8.4 5.8 C5.8 6.6 3.6 8.6 2.2 11.6 Z M8.8 9.8 H16.8 C16.6 7.2 15 5.8 12.8 5.8 C10.8 5.8 9.2 7.4 8.8 9.8 Z" fill="#1686d9"/></svg>
<svg style="left:258px;top:1047.5px;" width="30" height="30" viewBox="0 0 30 30"><circle cx="12" cy="12" r="11.5" fill="#dd4b3e"/><path d="M12 12 L2.05 6.25 A11.5 11.5 0 0 0 12 23.5 L17 15 Z" fill="#2da04e"/><path d="M12 12 L12 23.5 A11.5 11.5 0 0 0 22 6.3 L12 6.3 Z" fill="#f8c519"/><path d="M2.05 6.25 A11.5 11.5 0 0 1 22 6.3 L12 6.3 Z" fill="#dd4b3e"/><circle cx="12" cy="12" r="5.4" fill="#ffffff"/><circle cx="12" cy="12" r="4.2" fill="#3b7de8"/><circle cx="18.6" cy="18.6" r="6" fill="#8a6a5c"/><circle cx="18.6" cy="18.6" r="3" fill="#e8d8d0"/><rect x="17.8" y="16.6" width="1.8" height="4" fill="#8a6a5c"/></svg>
<div style="left:250px;top:1078px;width:40px;height:2px;background:#8ec2ea;"></div>
<svg style="left:307px;top:1047px;" width="25" height="25" viewBox="0 0 25 25"><path d="M12.6 1.2 A11 11 0 0 1 12.6 23.2 C10.6 23.2 8.8 22.7 7.2 21.8 L1.4 23.6 L3.2 18 A11 11 0 0 1 12.6 1.2 Z" fill="#24261e" stroke="#2ec866" stroke-width="2.2"/><path d="M8.4 6.6 C9.4 6 10 6.8 10.6 8.4 C11 9.4 10.2 10 9.8 10.6 C10.8 12.6 12.4 14 14.4 14.8 C15 14.2 15.6 13.4 16.4 13.8 C18 14.6 18.8 15.2 18.2 16.2 C17.4 17.8 15.4 18 13.6 17.2 C10.4 15.8 8.2 13.4 7.2 10.6 C6.6 9 7.2 7.2 8.4 6.6 Z" fill="#2ec866"/></svg>
<svg style="left:355px;top:1046px;" width="26" height="26" viewBox="0 0 26 26"><defs><radialGradient id="ff" cx=".6" cy=".25" r=".9"><stop offset="0" stop-color="#ffe226"/><stop offset=".35" stop-color="#ff9a1f"/><stop offset=".7" stop-color="#ff3647"/><stop offset="1" stop-color="#d6178a"/></radialGradient></defs><path d="M13 2.8 C14.6 1.8 15.8 0.8 16 0 C19 2.4 20.6 5 20.8 7 C22.6 8.4 24.6 11.4 24.4 15 C24 21 19.2 25.4 13 25.4 C6.6 25.4 1.6 20.8 1.6 14.4 C1.6 10.6 3 7.6 4.6 6.2 C4.6 7 4.8 7.8 5.2 8.4 C6.6 6.2 9 4.2 13 2.8 Z" fill="url(#ff)"/><circle cx="12.4" cy="13.6" r="4.4" fill="#7a3fe0"/><path d="M8.4 10.6 C10 8.8 13 8.4 15.2 9.6 C13.6 9.6 12.4 10.2 11.8 11.4 Z" fill="#b040d8"/></svg>
<svg style="left:405px;top:1049px;" width="25" height="22" viewBox="0 0 25 22"><path d="M1 3 H8 L10 1 H2.2 A1.2 1.2 0 0 0 1 2.2 Z" fill="#d8a520"/><rect x="1" y="3" width="23" height="17.6" rx="1" fill="#fbd24e"/><rect x="1" y="3" width="23" height="3" fill="#f2bf2e"/><path d="M6 21 V13.4 A1.2 1.2 0 0 1 7.2 12.2 H17.8 A1.2 1.2 0 0 1 19 13.4 V21 H15.4 V16 H9.6 V21 Z" fill="#3a96dd"/></svg>
<svg style="left:453px;top:1046px;" width="26" height="27" viewBox="0 0 26 27"><ellipse cx="13" cy="13.5" rx="12" ry="12.6" fill="#e8112d"/><ellipse cx="13" cy="13.5" rx="4.6" ry="8.4" fill="#24261e"/><path d="M13 1 C19 2 22 7 22 13.5 C22 20 19 25 13 26 C20 26 25 20.4 25 13.5 C25 6.6 20 1 13 1 Z" fill="#b80b20" opacity=".6"/></svg>
<svg style="left:503px;top:1047.5px;" width="30" height="30" viewBox="0 0 30 30"><circle cx="12" cy="12" r="11.5" fill="#dd4b3e"/><path d="M12 12 L2.05 6.25 A11.5 11.5 0 0 0 12 23.5 L17 15 Z" fill="#2da04e"/><path d="M12 12 L12 23.5 A11.5 11.5 0 0 0 22 6.3 L12 6.3 Z" fill="#f8c519"/><path d="M2.05 6.25 A11.5 11.5 0 0 1 22 6.3 L12 6.3 Z" fill="#dd4b3e"/><circle cx="12" cy="12" r="5.4" fill="#ffffff"/><circle cx="12" cy="12" r="4.2" fill="#3b7de8"/><circle cx="18.6" cy="18.6" r="5.6" fill="#f3e7b0" stroke="#c9ae4a" stroke-width="1.2"/><circle cx="18.6" cy="17.4" r="1.8" fill="none" stroke="#c9ae4a" stroke-width="1"/><path d="M15.4 21.6 C16 19.6 21.2 19.6 21.8 21.6" fill="none" stroke="#c9ae4a" stroke-width="1"/></svg>
<svg style="left:551px;top:1048px;" width="25" height="24" viewBox="0 0 25 24"><path d="M2 9 L14 2.4 L22.6 6 L23 14 L8 21.6 L3 17 Z" fill="#1b1c22"/><path d="M3 9.6 L14 4 L21 7" fill="none" stroke="#3a3c46" stroke-width="1.4"/><path d="M7.6 11.6 L17.4 8.8 L20.4 20.6 L11 23.4 Z" fill="#e9ebf2"/><path d="M18.6 10 L22.8 9.4 L23.4 20.4 L20.8 21 Z" fill="#d2d5e0"/><path d="M10 14 L16.6 12 M10.8 16.6 L17.4 14.6 M11.6 19.2 L18.2 17.2" stroke="#b9bdca" stroke-width=".7"/></svg>
<svg style="left:600px;top:1046px;" width="26" height="27" viewBox="0 0 26 27"><circle cx="8.4" cy="6.6" r="2.6" fill="none" stroke="#37b6d8" stroke-width="1.4"/><rect x="7.300000000000001" y="2.0999999999999996" width="2.2" height="2.6" fill="#37b6d8" transform="rotate(0 8.4 6.6)"/><rect x="7.300000000000001" y="2.0999999999999996" width="2.2" height="2.6" fill="#37b6d8" transform="rotate(45 8.4 6.6)"/><rect x="7.300000000000001" y="2.0999999999999996" width="2.2" height="2.6" fill="#37b6d8" transform="rotate(90 8.4 6.6)"/><rect x="7.300000000000001" y="2.0999999999999996" width="2.2" height="2.6" fill="#37b6d8" transform="rotate(135 8.4 6.6)"/><rect x="7.300000000000001" y="2.0999999999999996" width="2.2" height="2.6" fill="#37b6d8" transform="rotate(180 8.4 6.6)"/><rect x="7.300000000000001" y="2.0999999999999996" width="2.2" height="2.6" fill="#37b6d8" transform="rotate(225 8.4 6.6)"/><rect x="7.300000000000001" y="2.0999999999999996" width="2.2" height="2.6" fill="#37b6d8" transform="rotate(270 8.4 6.6)"/><rect x="7.300000000000001" y="2.0999999999999996" width="2.2" height="2.6" fill="#37b6d8" transform="rotate(315 8.4 6.6)"/><circle cx="17" cy="10" r="3.6" fill="none" stroke="#d8c32a" stroke-width="2"/><rect x="15.9" y="4.5" width="2.2" height="2.6" fill="#d8c32a" transform="rotate(0 17 10)"/><rect x="15.9" y="4.5" width="2.2" height="2.6" fill="#d8c32a" transform="rotate(45 17 10)"/><rect x="15.9" y="4.5" width="2.2" height="2.6" fill="#d8c32a" transform="rotate(90 17 10)"/><rect x="15.9" y="4.5" width="2.2" height="2.6" fill="#d8c32a" transform="rotate(135 17 10)"/><rect x="15.9" y="4.5" width="2.2" height="2.6" fill="#d8c32a" transform="rotate(180 17 10)"/><rect x="15.9" y="4.5" width="2.2" height="2.6" fill="#d8c32a" transform="rotate(225 17 10)"/><rect x="15.9" y="4.5" width="2.2" height="2.6" fill="#d8c32a" transform="rotate(270 17 10)"/><rect x="15.9" y="4.5" width="2.2" height="2.6" fill="#d8c32a" transform="rotate(315 17 10)"/><circle cx="10.8" cy="18.4" r="3.8" fill="none" stroke="#e2d21f" stroke-width="2.1"/><rect x="9.700000000000001" y="12.699999999999998" width="2.2" height="2.6" fill="#e2d21f" transform="rotate(0 10.8 18.4)"/><rect x="9.700000000000001" y="12.699999999999998" width="2.2" height="2.6" fill="#e2d21f" transform="rotate(45 10.8 18.4)"/><rect x="9.700000000000001" y="12.699999999999998" width="2.2" height="2.6" fill="#e2d21f" transform="rotate(90 10.8 18.4)"/><rect x="9.700000000000001" y="12.699999999999998" width="2.2" height="2.6" fill="#e2d21f" transform="rotate(135 10.8 18.4)"/><rect x="9.700000000000001" y="12.699999999999998" width="2.2" height="2.6" fill="#e2d21f" transform="rotate(180 10.8 18.4)"/><rect x="9.700000000000001" y="12.699999999999998" width="2.2" height="2.6" fill="#e2d21f" transform="rotate(225 10.8 18.4)"/><rect x="9.700000000000001" y="12.699999999999998" width="2.2" height="2.6" fill="#e2d21f" transform="rotate(270 10.8 18.4)"/><rect x="9.700000000000001" y="12.699999999999998" width="2.2" height="2.6" fill="#e2d21f" transform="rotate(315 10.8 18.4)"/><circle cx="19" cy="22" r="2.4" fill="none" stroke="#1f8fe0" stroke-width="1.5"/><rect x="17.9" y="17.700000000000003" width="2.2" height="2.6" fill="#1f8fe0" transform="rotate(0 19 22)"/><rect x="17.9" y="17.700000000000003" width="2.2" height="2.6" fill="#1f8fe0" transform="rotate(45 19 22)"/><rect x="17.9" y="17.700000000000003" width="2.2" height="2.6" fill="#1f8fe0" transform="rotate(90 19 22)"/><rect x="17.9" y="17.700000000000003" width="2.2" height="2.6" fill="#1f8fe0" transform="rotate(135 19 22)"/><rect x="17.9" y="17.700000000000003" width="2.2" height="2.6" fill="#1f8fe0" transform="rotate(180 19 22)"/><rect x="17.9" y="17.700000000000003" width="2.2" height="2.6" fill="#1f8fe0" transform="rotate(225 19 22)"/><rect x="17.9" y="17.700000000000003" width="2.2" height="2.6" fill="#1f8fe0" transform="rotate(270 19 22)"/><rect x="17.9" y="17.700000000000003" width="2.2" height="2.6" fill="#1f8fe0" transform="rotate(315 19 22)"/></svg>
<div style="left:638px;top:1040px;width:44px;height:40px;background:#50534b;"></div>
<div style="left:682px;top:1040px;width:4px;height:40px;background:#5b5e57;"></div>
<div style="left:681px;top:1040px;width:1px;height:40px;background:#3b3d36;"></div>
<div style="left:638px;top:1078px;width:48px;height:2px;background:#8ec2ea;"></div>
<svg style="left:650px;top:1048px;" width="25" height="23" viewBox="0 0 25 23"><rect x="8" y="0.6" width="16" height="21.4" rx="1.4" fill="#1d9b5c"/><rect x="8" y="0.6" width="8" height="5.4" fill="#1a8a52"/><rect x="16" y="0.6" width="8" height="5.4" fill="#33c481"/><rect x="8" y="6" width="8" height="5.4" fill="#107c41"/><rect x="16" y="6" width="8" height="5.4" fill="#21a366"/><rect x="8" y="11.4" width="8" height="5.4" fill="#0e6a37"/><rect x="16" y="11.4" width="8" height="5.4" fill="#17864f"/><rect x="8" y="16.8" width="16" height="5.2" fill="#0b5a2e"/><rect x="0.6" y="5.4" width="12.6" height="12.6" rx="1.2" fill="#107c41"/><path d="M4 8.4 L9.8 15.2 M9.8 8.4 L4 15.2" stroke="#fff" stroke-width="1.7"/></svg>
<svg style="left:1657px;top:1051px;" width="17" height="17" viewBox="0 0 17 17"><circle cx="10.6" cy="4" r="2.6" fill="none" stroke="#ffffff" stroke-width="1.1"/><path d="M6.4 11 C6.6 7.4 14.6 7.4 14.8 10.2" fill="none" stroke="#ffffff" stroke-width="1.1"/><circle cx="5" cy="9.6" r="2.6" fill="#24261e" stroke="#ffffff" stroke-width="1.1"/><path d="M0.8 16.4 C1 12.6 9 12.6 9.2 16.4" fill="none" stroke="#ffffff" stroke-width="1.1"/></svg>
<svg style="left:1694px;top:1056px;" width="14" height="9" viewBox="0 0 14 9"><path d="M1 7.6 L7 1.4 L13 7.6" fill="none" stroke="#ffffff" stroke-width="1.3"/></svg>
<svg style="left:1716px;top:1053px;" width="18" height="15" viewBox="0 0 18 15"><rect x="3.6" y="1" width="13.4" height="9" fill="none" stroke="#ffffff" stroke-width="1.1"/><rect x="0.8" y="1" width="4" height="3.4" fill="#24261e" stroke="#ffffff" stroke-width="1"/><path d="M2.8 4.4 V13.6 M2.8 13.6 H13 M9.6 10 V13.6" stroke="#ffffff" stroke-width="1.1" fill="none"/></svg>
<svg style="left:1741px;top:1052px;" width="18" height="17" viewBox="0 0 18 17"><path d="M1 6 H4 L8 2.4 V14.6 L4 11 H1 Z" fill="none" stroke="#ffffff" stroke-width="1.1"/><path d="M10.4 6.2 A3 3 0 0 1 10.4 10.8" fill="none" stroke="#ffffff" stroke-width="1"/><path d="M12.4 4 A6 6 0 0 1 12.4 13" fill="none" stroke="#b9bab6" stroke-width="1"/><path d="M14.4 2 A9 9 0 0 1 14.4 15" fill="none" stroke="#85877f" stroke-width="1"/></svg>
<div style="top:1050.5px;height:18px;line-height:18px;font-size:11.6px;color:#ffffff;white-space:nowrap;left:1769px;">IND</div>
<div style="top:1042.0px;height:18px;line-height:18px;font-size:11.6px;color:#ffffff;white-space:nowrap;left:1792.0px;width:80px;text-align:center;">14.26</div>
<div style="top:1059.5px;height:18px;line-height:18px;font-size:11.6px;color:#ffffff;white-space:nowrap;left:1787.0px;width:90px;text-align:center;">31/01/2026</div>
<svg style="left:1879px;top:1052px;" width="17" height="17" viewBox="0 0 17 17"><path d="M0.6 0.6 H16 V12 H8 L5 15.4 V12 H0.6 Z" fill="#ffffff"/><path d="M3 3.6 H13.6 M3 6 H13.6 M3 8.4 H10" stroke="#24261e" stroke-width="1"/><circle cx="13.4" cy="12.6" r="2.8" fill="#24261e" stroke="#ffffff" stroke-width="1"/></svg>
<div style="left:1915px;top:1040px;width:1px;height:40px;background:#6a6c66;"></div>
</body></html>
